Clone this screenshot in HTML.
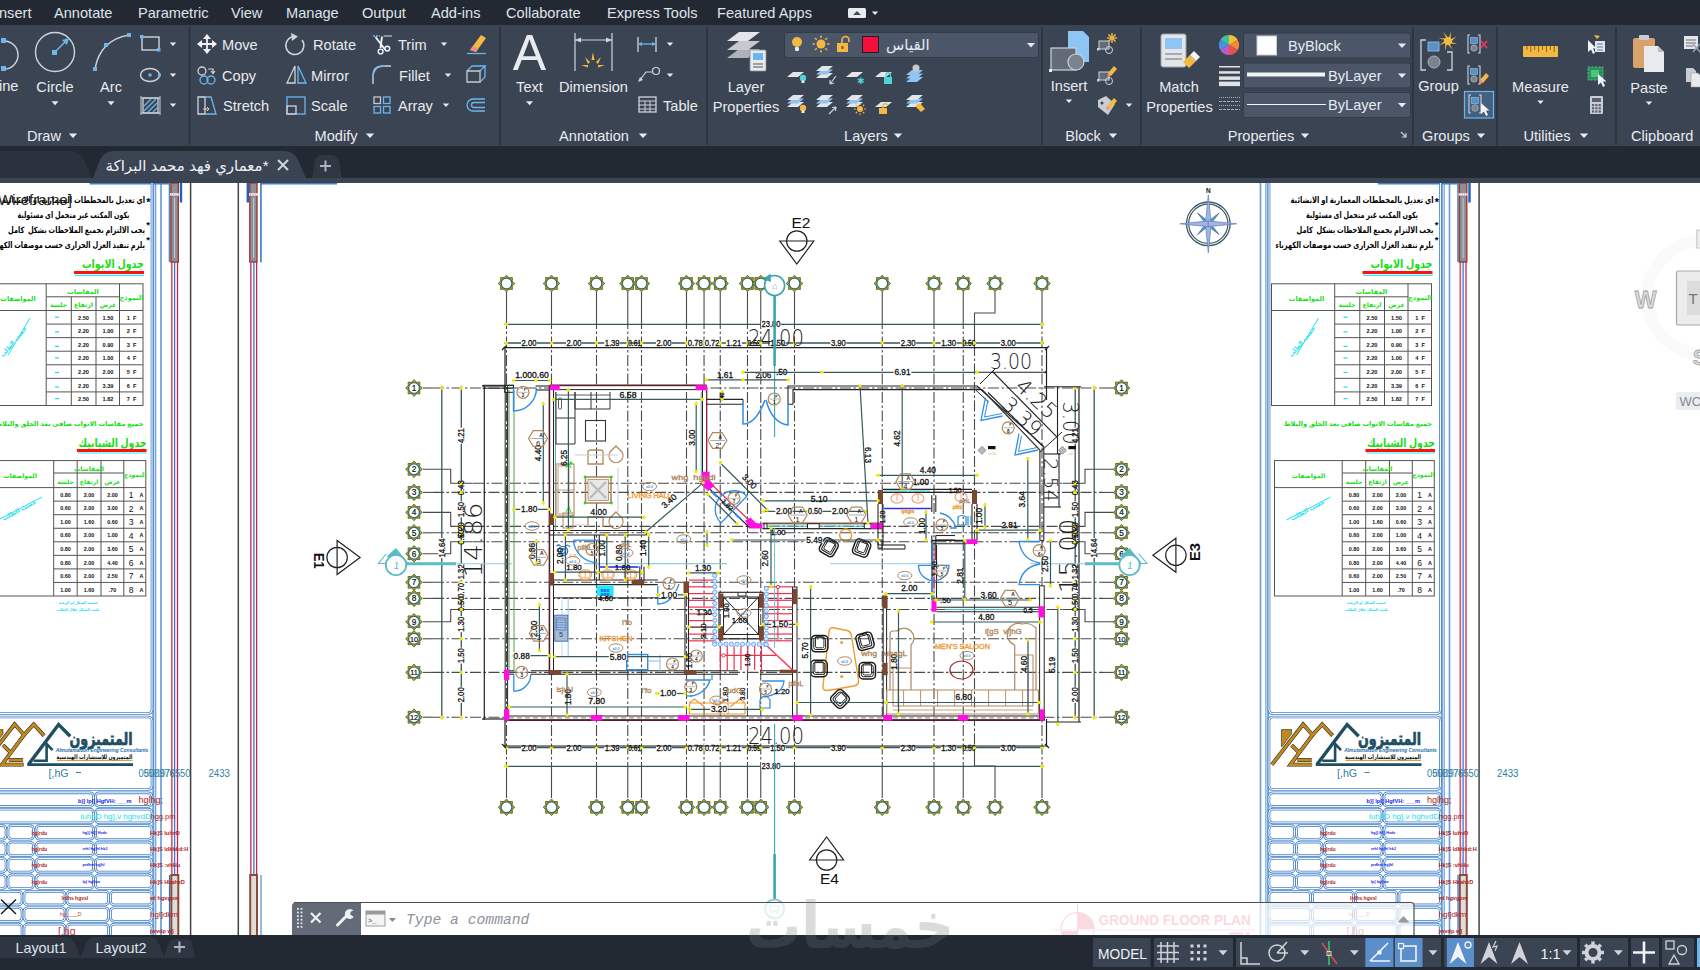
<!DOCTYPE html>
<html lang="en"><head><meta charset="utf-8"><title>AutoCAD</title>
<style>
html,body{margin:0;padding:0;background:#fff;overflow:hidden;width:1700px;height:970px}
svg{display:block;font-family:"Liberation Sans","DejaVu Sans",sans-serif}
text{white-space:pre}
</style></head><body>
<svg width="1700" height="970" viewBox="0 0 1700 970">
<rect x="0" y="0" width="1700" height="970" fill="#ffffff"/>
<clipPath id="cpL"><rect x="0" y="183" width="300" height="752"/></clipPath>
<g clip-path="url(#cpL)">
<g transform="translate(0 0)">
<line x1="153.3" y1="183" x2="153.3" y2="935" stroke="#6a9fd8" stroke-width="2.1" />
<line x1="155.7" y1="183" x2="155.7" y2="935" stroke="#6a9fd8" stroke-width="1.2" />
<line x1="161" y1="183" x2="161" y2="935" stroke="#6a9fd8" stroke-width="1.7" />
<line x1="89.5" y1="183.8" x2="169.5" y2="183.8" stroke="#3f7fc8" stroke-width="1.5" />
<line x1="169.5" y1="183" x2="169.5" y2="262" stroke="#4a88cc" stroke-width="1.6" />
<line x1="171.8" y1="262" x2="171.8" y2="875" stroke="#d05878" stroke-width="1.7" />
<line x1="177.5" y1="262" x2="177.5" y2="875" stroke="#c02850" stroke-width="1.3" />
<line x1="174.6" y1="262" x2="174.6" y2="875" stroke="#3a7ac8" stroke-width="1.3" />
<rect x="170.9" y="183" width="7.4" height="79" fill="#8f9096" stroke="#a03a30" stroke-width="1.4" />
<line x1="174.6" y1="198" x2="174.6" y2="258" stroke="#b8d0e8" stroke-width="1" />
<rect x="170" y="193.3" width="9.2" height="2.2" fill="#ffffff" />
<rect x="171.0" y="193.6" width="1.1" height="1.6" fill="#e8a0a8" />
<rect x="173.2" y="193.6" width="1.1" height="1.6" fill="#e8a0a8" />
<rect x="175.4" y="193.6" width="1.1" height="1.6" fill="#e8a0a8" />
<rect x="177.6" y="193.6" width="1.1" height="1.6" fill="#e8a0a8" />
<line x1="181" y1="183" x2="181" y2="202.5" stroke="#1f5fc0" stroke-width="2.4" />
<rect x="171.3" y="875" width="7" height="61" fill="#e0dcd8" stroke="#8a4a3a" stroke-width="2" />
<line x1="169.5" y1="875" x2="169.5" y2="935" stroke="#2f6fc8" stroke-width="1.2" />
<line x1="190.6" y1="183" x2="190.6" y2="935" stroke="#444" stroke-width="1.5" />
<text x="145" y="203" font-size="8.6" fill="#000" text-anchor="end" font-family="Liberation Sans, DejaVu Sans, sans-serif" font-weight="bold" textLength="143" lengthAdjust="spacingAndGlyphs">اي تعديل بالمخططات المعمارية او الانشائية</text>
<text x="148.3" y="206" font-size="11" fill="#000" text-anchor="middle" font-family="Liberation Sans, DejaVu Sans, sans-serif" font-weight="bold" >*</text>
<text x="129.5" y="217.5" font-size="8.6" fill="#000" text-anchor="end" font-family="Liberation Sans, DejaVu Sans, sans-serif" font-weight="bold" textLength="112" lengthAdjust="spacingAndGlyphs">يكون المكتب غير متحمل اى مسئولية</text>
<text x="145" y="232.5" font-size="8.6" fill="#000" text-anchor="end" font-family="Liberation Sans, DejaVu Sans, sans-serif" font-weight="bold" textLength="137" lengthAdjust="spacingAndGlyphs">يجب الالتزام بجميع الملاحظات بشكل  كامل</text>
<text x="148" y="227.5" font-size="9.5" fill="#000" text-anchor="middle" font-family="Liberation Sans, DejaVu Sans, sans-serif" font-weight="bold" >*</text>
<text x="148" y="243" font-size="9.5" fill="#000" text-anchor="middle" font-family="Liberation Sans, DejaVu Sans, sans-serif" font-weight="bold" >*</text>
<text x="145" y="247.5" font-size="8.6" fill="#000" text-anchor="end" font-family="Liberation Sans, DejaVu Sans, sans-serif" font-weight="bold" textLength="158" lengthAdjust="spacingAndGlyphs">يلزم تنفيذ العزل الحرارى حسب موصفات الكهرباء</text>
<text x="144" y="268" font-size="11.5" fill="#16e016" text-anchor="end" font-family="Liberation Sans, DejaVu Sans, sans-serif" font-weight="bold" textLength="62" lengthAdjust="spacingAndGlyphs">جدول الابواب</text>
<line x1="74" y1="272.5" x2="144" y2="272.5" stroke="#ff1010" stroke-width="3.2" />
<line x1="75" y1="275.3" x2="144" y2="275.3" stroke="#30e8f0" stroke-width="1.2" />
<rect x="-17" y="283.8" width="160" height="121.69" fill="none" stroke="#555" stroke-width="1" />
<line x1="-17" y1="310.5" x2="143" y2="310.5" stroke="#555" stroke-width="1" />
<line x1="46.2" y1="296.8" x2="119.5" y2="296.8" stroke="#555" stroke-width="1" />
<line x1="46.2" y1="283.8" x2="46.2" y2="405.49" stroke="#555" stroke-width="1" />
<line x1="119.5" y1="283.8" x2="119.5" y2="405.49" stroke="#555" stroke-width="1" />
<line x1="71.3" y1="296.8" x2="71.3" y2="405.49" stroke="#555" stroke-width="1" />
<line x1="96" y1="296.8" x2="96" y2="405.49" stroke="#555" stroke-width="1" />
<line x1="46.2" y1="324.07" x2="143" y2="324.07" stroke="#555" stroke-width="1" />
<line x1="46.2" y1="337.64" x2="143" y2="337.64" stroke="#555" stroke-width="1" />
<line x1="46.2" y1="351.21" x2="143" y2="351.21" stroke="#555" stroke-width="1" />
<line x1="46.2" y1="364.78" x2="143" y2="364.78" stroke="#555" stroke-width="1" />
<line x1="46.2" y1="378.35" x2="143" y2="378.35" stroke="#555" stroke-width="1" />
<line x1="46.2" y1="391.92" x2="143" y2="391.92" stroke="#555" stroke-width="1" />
<text x="83" y="293.5" font-size="6.5" fill="#16e016" text-anchor="middle" font-family="Liberation Sans, DejaVu Sans, sans-serif" font-weight="bold" >المقاسات</text>
<text x="131.5" y="299.5" font-size="6.5" fill="#16e016" text-anchor="middle" font-family="Liberation Sans, DejaVu Sans, sans-serif" font-weight="bold" >النموذج</text>
<text x="108" y="307" font-size="6.2" fill="#16e016" text-anchor="middle" font-family="Liberation Sans, DejaVu Sans, sans-serif" font-weight="bold" >عرض</text>
<text x="83.5" y="307" font-size="6.2" fill="#16e016" text-anchor="middle" font-family="Liberation Sans, DejaVu Sans, sans-serif" font-weight="bold" >ارتفاع</text>
<text x="58.5" y="307" font-size="6.2" fill="#16e016" text-anchor="middle" font-family="Liberation Sans, DejaVu Sans, sans-serif" font-weight="bold" >جلسة</text>
<text x="18" y="300.5" font-size="6.5" fill="#16e016" text-anchor="middle" font-family="Liberation Sans, DejaVu Sans, sans-serif" font-weight="bold" >المواصفات</text>
<text x="108" y="319.7" font-size="5.6" fill="#111" text-anchor="middle" font-weight="bold" >1.50</text>
<text x="83.5" y="319.7" font-size="5.6" fill="#111" text-anchor="middle" font-weight="bold" >2.50</text>
<text x="131.5" y="319.7" font-size="5.6" fill="#111" text-anchor="middle" font-weight="bold" >1  F</text>
<line x1="55" y1="317.2" x2="59" y2="317.2" stroke="#20d8f0" stroke-width="1.2" />
<text x="108" y="333.27" font-size="5.6" fill="#111" text-anchor="middle" font-weight="bold" >1.00</text>
<text x="83.5" y="333.27" font-size="5.6" fill="#111" text-anchor="middle" font-weight="bold" >2.20</text>
<text x="131.5" y="333.27" font-size="5.6" fill="#111" text-anchor="middle" font-weight="bold" >2  F</text>
<line x1="55" y1="331.77" x2="59" y2="331.77" stroke="#20d8f0" stroke-width="1.2" />
<text x="108" y="346.84" font-size="5.6" fill="#111" text-anchor="middle" font-weight="bold" >0.90</text>
<text x="83.5" y="346.84" font-size="5.6" fill="#111" text-anchor="middle" font-weight="bold" >2.20</text>
<text x="131.5" y="346.84" font-size="5.6" fill="#111" text-anchor="middle" font-weight="bold" >3  F</text>
<line x1="55" y1="346.34" x2="59" y2="346.34" stroke="#20d8f0" stroke-width="1.2" />
<text x="108" y="360.40999999999997" font-size="5.6" fill="#111" text-anchor="middle" font-weight="bold" >1.00</text>
<text x="83.5" y="360.40999999999997" font-size="5.6" fill="#111" text-anchor="middle" font-weight="bold" >2.20</text>
<text x="131.5" y="360.40999999999997" font-size="5.6" fill="#111" text-anchor="middle" font-weight="bold" >4  F</text>
<line x1="55" y1="357.90999999999997" x2="59" y2="357.90999999999997" stroke="#20d8f0" stroke-width="1.2" />
<text x="108" y="373.97999999999996" font-size="5.6" fill="#111" text-anchor="middle" font-weight="bold" >2.00</text>
<text x="83.5" y="373.97999999999996" font-size="5.6" fill="#111" text-anchor="middle" font-weight="bold" >2.20</text>
<text x="131.5" y="373.97999999999996" font-size="5.6" fill="#111" text-anchor="middle" font-weight="bold" >5  F</text>
<line x1="55" y1="372.47999999999996" x2="59" y2="372.47999999999996" stroke="#20d8f0" stroke-width="1.2" />
<text x="108" y="387.55" font-size="5.6" fill="#111" text-anchor="middle" font-weight="bold" >3.39</text>
<text x="83.5" y="387.55" font-size="5.6" fill="#111" text-anchor="middle" font-weight="bold" >2.20</text>
<text x="131.5" y="387.55" font-size="5.6" fill="#111" text-anchor="middle" font-weight="bold" >6  F</text>
<line x1="55" y1="387.05" x2="59" y2="387.05" stroke="#20d8f0" stroke-width="1.2" />
<text x="108" y="401.12" font-size="5.6" fill="#111" text-anchor="middle" font-weight="bold" >1.82</text>
<text x="83.5" y="401.12" font-size="5.6" fill="#111" text-anchor="middle" font-weight="bold" >2.50</text>
<text x="131.5" y="401.12" font-size="5.6" fill="#111" text-anchor="middle" font-weight="bold" >7  F</text>
<line x1="55" y1="398.62" x2="59" y2="398.62" stroke="#20d8f0" stroke-width="1.2" />
<text x="15" y="343" font-size="6" fill="#20e0f0" text-anchor="middle" font-family="Liberation Sans, DejaVu Sans, sans-serif" font-weight="bold" transform="rotate(-50 15 343)" >حسب الطلب</text>
<line x1="8" y1="355" x2="30" y2="318" stroke="#20e0f0" stroke-width="1" />
<text x="143.5" y="425.5" font-size="6.6" fill="#16e016" text-anchor="end" font-family="Liberation Sans, DejaVu Sans, sans-serif" font-weight="bold" >جميع مقاسات الابواب صافى بعد الحلق والبلاط</text>
<text x="146.5" y="447" font-size="11.5" fill="#16e016" text-anchor="end" font-family="Liberation Sans, DejaVu Sans, sans-serif" font-weight="bold" textLength="68" lengthAdjust="spacingAndGlyphs">جدول الشبابيك</text>
<line x1="77" y1="450.6" x2="146.5" y2="450.6" stroke="#ff1010" stroke-width="3" />
<line x1="78" y1="453" x2="146.5" y2="453" stroke="#30e8f0" stroke-width="1" />
<rect x="-14" y="460.6" width="159.8" height="135.39999999999998" fill="none" stroke="#555" stroke-width="1" />
<line x1="-14" y1="487.6" x2="145.8" y2="487.6" stroke="#555" stroke-width="1" />
<line x1="53.7" y1="473" x2="123.8" y2="473" stroke="#555" stroke-width="1" />
<line x1="53.7" y1="460.6" x2="53.7" y2="596.0" stroke="#555" stroke-width="1" />
<line x1="123.8" y1="460.6" x2="123.8" y2="596.0" stroke="#555" stroke-width="1" />
<line x1="77.2" y1="460.6" x2="77.2" y2="596.0" stroke="#555" stroke-width="1" />
<line x1="101" y1="460.6" x2="101" y2="596.0" stroke="#555" stroke-width="1" />
<line x1="53.7" y1="501.15000000000003" x2="145.8" y2="501.15000000000003" stroke="#555" stroke-width="1" />
<line x1="53.7" y1="514.7" x2="145.8" y2="514.7" stroke="#555" stroke-width="1" />
<line x1="53.7" y1="528.25" x2="145.8" y2="528.25" stroke="#555" stroke-width="1" />
<line x1="53.7" y1="541.8000000000001" x2="145.8" y2="541.8000000000001" stroke="#555" stroke-width="1" />
<line x1="53.7" y1="555.35" x2="145.8" y2="555.35" stroke="#555" stroke-width="1" />
<line x1="53.7" y1="568.9000000000001" x2="145.8" y2="568.9000000000001" stroke="#555" stroke-width="1" />
<line x1="53.7" y1="582.45" x2="145.8" y2="582.45" stroke="#555" stroke-width="1" />
<text x="89" y="470.5" font-size="6.2" fill="#16e016" text-anchor="middle" font-family="Liberation Sans, DejaVu Sans, sans-serif" font-weight="bold" >المقاسات</text>
<text x="135" y="476.5" font-size="6.2" fill="#16e016" text-anchor="middle" font-family="Liberation Sans, DejaVu Sans, sans-serif" font-weight="bold" >النموذج</text>
<text x="112.5" y="484" font-size="6" fill="#16e016" text-anchor="middle" font-family="Liberation Sans, DejaVu Sans, sans-serif" font-weight="bold" >عرض</text>
<text x="89" y="484" font-size="6" fill="#16e016" text-anchor="middle" font-family="Liberation Sans, DejaVu Sans, sans-serif" font-weight="bold" >ارتفاع</text>
<text x="65.5" y="484" font-size="6" fill="#16e016" text-anchor="middle" font-family="Liberation Sans, DejaVu Sans, sans-serif" font-weight="bold" >جلسة</text>
<text x="20" y="477.5" font-size="6.2" fill="#16e016" text-anchor="middle" font-family="Liberation Sans, DejaVu Sans, sans-serif" font-weight="bold" >المواصفات</text>
<text x="112.5" y="496.8" font-size="5.4" fill="#111" text-anchor="middle" font-weight="bold" >2.00</text>
<text x="89" y="496.8" font-size="5.4" fill="#111" text-anchor="middle" font-weight="bold" >2.00</text>
<text x="65.5" y="496.8" font-size="5.4" fill="#111" text-anchor="middle" font-weight="bold" >0.80</text>
<text x="131" y="498.0" font-size="8.5" fill="#111" text-anchor="middle" >1</text>
<text x="141.5" y="496.8" font-size="5.4" fill="#111" text-anchor="middle" font-weight="bold" >A</text>
<text x="112.5" y="510.35" font-size="5.4" fill="#111" text-anchor="middle" font-weight="bold" >3.00</text>
<text x="89" y="510.35" font-size="5.4" fill="#111" text-anchor="middle" font-weight="bold" >2.00</text>
<text x="65.5" y="510.35" font-size="5.4" fill="#111" text-anchor="middle" font-weight="bold" >0.60</text>
<text x="131" y="511.55" font-size="8.5" fill="#111" text-anchor="middle" >2</text>
<text x="141.5" y="510.35" font-size="5.4" fill="#111" text-anchor="middle" font-weight="bold" >A</text>
<text x="112.5" y="523.9000000000001" font-size="5.4" fill="#111" text-anchor="middle" font-weight="bold" >0.60</text>
<text x="89" y="523.9000000000001" font-size="5.4" fill="#111" text-anchor="middle" font-weight="bold" >1.60</text>
<text x="65.5" y="523.9000000000001" font-size="5.4" fill="#111" text-anchor="middle" font-weight="bold" >1.00</text>
<text x="131" y="525.1000000000001" font-size="8.5" fill="#111" text-anchor="middle" >3</text>
<text x="141.5" y="523.9000000000001" font-size="5.4" fill="#111" text-anchor="middle" font-weight="bold" >A</text>
<text x="112.5" y="537.45" font-size="5.4" fill="#111" text-anchor="middle" font-weight="bold" >1.00</text>
<text x="89" y="537.45" font-size="5.4" fill="#111" text-anchor="middle" font-weight="bold" >2.00</text>
<text x="65.5" y="537.45" font-size="5.4" fill="#111" text-anchor="middle" font-weight="bold" >0.60</text>
<text x="131" y="538.6500000000001" font-size="8.5" fill="#111" text-anchor="middle" >4</text>
<text x="141.5" y="537.45" font-size="5.4" fill="#111" text-anchor="middle" font-weight="bold" >A</text>
<text x="112.5" y="551.0000000000001" font-size="5.4" fill="#111" text-anchor="middle" font-weight="bold" >3.60</text>
<text x="89" y="551.0000000000001" font-size="5.4" fill="#111" text-anchor="middle" font-weight="bold" >2.00</text>
<text x="65.5" y="551.0000000000001" font-size="5.4" fill="#111" text-anchor="middle" font-weight="bold" >0.80</text>
<text x="131" y="552.2000000000002" font-size="8.5" fill="#111" text-anchor="middle" >5</text>
<text x="141.5" y="551.0000000000001" font-size="5.4" fill="#111" text-anchor="middle" font-weight="bold" >A</text>
<text x="112.5" y="564.5500000000001" font-size="5.4" fill="#111" text-anchor="middle" font-weight="bold" >4.40</text>
<text x="89" y="564.5500000000001" font-size="5.4" fill="#111" text-anchor="middle" font-weight="bold" >2.00</text>
<text x="65.5" y="564.5500000000001" font-size="5.4" fill="#111" text-anchor="middle" font-weight="bold" >0.80</text>
<text x="131" y="565.7500000000001" font-size="8.5" fill="#111" text-anchor="middle" >6</text>
<text x="141.5" y="564.5500000000001" font-size="5.4" fill="#111" text-anchor="middle" font-weight="bold" >A</text>
<text x="112.5" y="578.1000000000001" font-size="5.4" fill="#111" text-anchor="middle" font-weight="bold" >2.50</text>
<text x="89" y="578.1000000000001" font-size="5.4" fill="#111" text-anchor="middle" font-weight="bold" >2.00</text>
<text x="65.5" y="578.1000000000001" font-size="5.4" fill="#111" text-anchor="middle" font-weight="bold" >0.60</text>
<text x="131" y="579.3000000000002" font-size="8.5" fill="#111" text-anchor="middle" >7</text>
<text x="141.5" y="578.1000000000001" font-size="5.4" fill="#111" text-anchor="middle" font-weight="bold" >A</text>
<text x="112.5" y="591.6500000000001" font-size="5.4" fill="#111" text-anchor="middle" font-weight="bold" >.70</text>
<text x="89" y="591.6500000000001" font-size="5.4" fill="#111" text-anchor="middle" font-weight="bold" >1.60</text>
<text x="65.5" y="591.6500000000001" font-size="5.4" fill="#111" text-anchor="middle" font-weight="bold" >1.00</text>
<text x="131" y="592.8500000000001" font-size="8.5" fill="#111" text-anchor="middle" >8</text>
<text x="141.5" y="591.6500000000001" font-size="5.4" fill="#111" text-anchor="middle" font-weight="bold" >A</text>
<text x="20" y="512" font-size="6" fill="#20e0f0" text-anchor="middle" font-family="Liberation Sans, DejaVu Sans, sans-serif" font-weight="bold" transform="rotate(-28 20 512)" >حسب الطلب</text>
<line x1="-2" y1="520" x2="42" y2="497" stroke="#20e0f0" stroke-width="1" />
<text x="78" y="604" font-size="3.6" fill="#20d8f0" text-anchor="middle" font-family="Liberation Sans, DejaVu Sans, sans-serif" font-weight="bold" >حسب الشكل او الرغبة</text>
<text x="78" y="610.5" font-size="3.6" fill="#20d8f0" text-anchor="middle" font-family="Liberation Sans, DejaVu Sans, sans-serif" font-weight="bold" >يكتب الشكل خلال الطلب</text>
<rect x="-29" y="170" width="181" height="543.5" fill="none" stroke="#4a86cc" stroke-width="2.7" rx="3.5" />
<rect x="-29" y="170" width="181" height="543.5" fill="none" stroke="#ffffff" stroke-width="1.0" rx="3.5" />
<rect x="-29" y="717" width="181" height="72.5" fill="none" stroke="#4a86cc" stroke-width="2.7" rx="3.5" />
<rect x="-29" y="717" width="181" height="72.5" fill="none" stroke="#ffffff" stroke-width="1.0" rx="3.5" />
<path d="M-7.1 729.6 L3.0 729.6 L3.0 733.8 L-6.3 746.6 L-7.1 746.6 Z" fill="#c08a1e" stroke="#222" stroke-width="0.6" stroke-linejoin="miter"/>
<path d="M-16.6 764.6 L14.6 724.3 L24.1 734.9 L33.7 724.3 L44.1 735.6" fill="none" stroke="#222" stroke-width="3.8" stroke-linejoin="miter"/>
<path d="M24.1 734.9 L1.9 764.6 L23.6 764.6" fill="none" stroke="#222" stroke-width="3.8" stroke-linejoin="miter"/>
<path d="M3.0 745.2 L11.7 753.6" fill="none" stroke="#222" stroke-width="3.8" stroke-linejoin="miter"/>
<path d="M8.8 760.0 L23.1 760.0" fill="none" stroke="#222" stroke-width="3.8" stroke-linejoin="miter"/>
<path d="M-16.6 764.6 L14.6 724.3 L24.1 734.9 L33.7 724.3 L44.1 735.6" fill="none" stroke="#c08a1e" stroke-width="2.7" stroke-linejoin="miter"/>
<path d="M24.1 734.9 L1.9 764.6 L23.6 764.6" fill="none" stroke="#c08a1e" stroke-width="2.7" stroke-linejoin="miter"/>
<path d="M3.0 745.2 L11.7 753.6" fill="none" stroke="#c08a1e" stroke-width="2.7" stroke-linejoin="miter"/>
<path d="M8.8 760.0 L23.1 760.0" fill="none" stroke="#c08a1e" stroke-width="2.7" stroke-linejoin="miter"/>
<path d="M28.4 764.6 L58.6 724.5 L70.2 736.2" fill="none" stroke="#1f4e62" stroke-width="3.4" stroke-linejoin="miter"/>
<path d="M27.3 764.6 L133.0 764.6" fill="none" stroke="#1f4e62" stroke-width="2.8" stroke-linejoin="miter"/>
<path d="M33.7 760.7 L46.6 760.7 L46.6 743.8 L52.5 750.2" fill="none" stroke="#1f4e62" stroke-width="2.6" stroke-linejoin="miter"/>
<text x="132.5" y="745" font-size="17.5" fill="#1f4e62" text-anchor="end" font-family="Liberation Sans, DejaVu Sans, sans-serif" font-weight="bold" stroke="#1f4e62" stroke-width="0.7" textLength="63" lengthAdjust="spacingAndGlyphs">المتميزون</text>
<text x="102" y="752" font-size="4.9" fill="#1b6fa8" text-anchor="middle" font-weight="bold" font-style="italic" transform="rotate( 102 752)" >Almutamaizon Engineering Consultants</text>
<text x="132.5" y="759" font-size="6.3" fill="#111" text-anchor="end" font-family="Liberation Sans, DejaVu Sans, sans-serif" font-weight="bold" textLength="76" lengthAdjust="spacingAndGlyphs">المتميزون للإستشارات الهندسية</text>
<line x1="57" y1="760.3" x2="132.5" y2="760.3" stroke="#c08a1e" stroke-width="1" />
<text x="48.5" y="777" font-size="11.5" fill="#2f7fa0" textLength="20" lengthAdjust="spacingAndGlyphs">[,hG</text>
<line x1="76" y1="772.5" x2="81" y2="772.5" stroke="#2f7fa0" stroke-width="1" />
<text x="138.5" y="777" font-size="11.5" fill="#2f7fa0" textLength="52" lengthAdjust="spacingAndGlyphs">0508976550</text>
<text x="144" y="777" font-size="11.5" fill="#2f7fa0" textLength="30" lengthAdjust="spacingAndGlyphs" opacity="0.7">0561976</text>
<text x="208.5" y="777" font-size="11.5" fill="#2f7fa0" textLength="21.5" lengthAdjust="spacingAndGlyphs">2433</text>
<rect x="-29" y="792.8" width="122.5" height="13.6" fill="none" stroke="#4a86cc" stroke-width="2.7" rx="3.5" />
<rect x="-29" y="792.8" width="122.5" height="13.6" fill="none" stroke="#ffffff" stroke-width="1.0" rx="3.5" />
<rect x="95.5" y="792.8" width="56.5" height="13.6" fill="none" stroke="#4a86cc" stroke-width="2.7" rx="3.5" />
<rect x="95.5" y="792.8" width="56.5" height="13.6" fill="none" stroke="#ffffff" stroke-width="1.0" rx="3.5" />
<rect x="-29" y="809.2199999999999" width="122.5" height="13.6" fill="none" stroke="#4a86cc" stroke-width="2.7" rx="3.5" />
<rect x="-29" y="809.2199999999999" width="122.5" height="13.6" fill="none" stroke="#ffffff" stroke-width="1.0" rx="3.5" />
<rect x="95.5" y="809.2199999999999" width="56.5" height="13.6" fill="none" stroke="#4a86cc" stroke-width="2.7" rx="3.5" />
<rect x="95.5" y="809.2199999999999" width="56.5" height="13.6" fill="none" stroke="#ffffff" stroke-width="1.0" rx="3.5" />
<rect x="-29" y="825.64" width="35" height="13.6" fill="none" stroke="#4a86cc" stroke-width="2.7" rx="3.5" />
<rect x="-29" y="825.64" width="35" height="13.6" fill="none" stroke="#ffffff" stroke-width="1.0" rx="3.5" />
<rect x="8" y="825.64" width="25.5" height="13.6" fill="none" stroke="#4a86cc" stroke-width="2.7" rx="3.5" />
<rect x="8" y="825.64" width="25.5" height="13.6" fill="none" stroke="#ffffff" stroke-width="1.0" rx="3.5" />
<rect x="36" y="825.64" width="57.5" height="13.6" fill="none" stroke="#4a86cc" stroke-width="2.7" rx="3.5" />
<rect x="36" y="825.64" width="57.5" height="13.6" fill="none" stroke="#ffffff" stroke-width="1.0" rx="3.5" />
<rect x="95.5" y="825.64" width="56.5" height="13.6" fill="none" stroke="#4a86cc" stroke-width="2.7" rx="3.5" />
<rect x="95.5" y="825.64" width="56.5" height="13.6" fill="none" stroke="#ffffff" stroke-width="1.0" rx="3.5" />
<rect x="-29" y="842.06" width="35" height="13.6" fill="none" stroke="#4a86cc" stroke-width="2.7" rx="3.5" />
<rect x="-29" y="842.06" width="35" height="13.6" fill="none" stroke="#ffffff" stroke-width="1.0" rx="3.5" />
<rect x="8" y="842.06" width="25.5" height="13.6" fill="none" stroke="#4a86cc" stroke-width="2.7" rx="3.5" />
<rect x="8" y="842.06" width="25.5" height="13.6" fill="none" stroke="#ffffff" stroke-width="1.0" rx="3.5" />
<rect x="36" y="842.06" width="57.5" height="13.6" fill="none" stroke="#4a86cc" stroke-width="2.7" rx="3.5" />
<rect x="36" y="842.06" width="57.5" height="13.6" fill="none" stroke="#ffffff" stroke-width="1.0" rx="3.5" />
<rect x="95.5" y="842.06" width="56.5" height="13.6" fill="none" stroke="#4a86cc" stroke-width="2.7" rx="3.5" />
<rect x="95.5" y="842.06" width="56.5" height="13.6" fill="none" stroke="#ffffff" stroke-width="1.0" rx="3.5" />
<rect x="-29" y="858.48" width="35" height="13.6" fill="none" stroke="#4a86cc" stroke-width="2.7" rx="3.5" />
<rect x="-29" y="858.48" width="35" height="13.6" fill="none" stroke="#ffffff" stroke-width="1.0" rx="3.5" />
<rect x="8" y="858.48" width="25.5" height="13.6" fill="none" stroke="#4a86cc" stroke-width="2.7" rx="3.5" />
<rect x="8" y="858.48" width="25.5" height="13.6" fill="none" stroke="#ffffff" stroke-width="1.0" rx="3.5" />
<rect x="36" y="858.48" width="57.5" height="13.6" fill="none" stroke="#4a86cc" stroke-width="2.7" rx="3.5" />
<rect x="36" y="858.48" width="57.5" height="13.6" fill="none" stroke="#ffffff" stroke-width="1.0" rx="3.5" />
<rect x="95.5" y="858.48" width="56.5" height="13.6" fill="none" stroke="#4a86cc" stroke-width="2.7" rx="3.5" />
<rect x="95.5" y="858.48" width="56.5" height="13.6" fill="none" stroke="#ffffff" stroke-width="1.0" rx="3.5" />
<rect x="-29" y="874.9" width="35" height="13.6" fill="none" stroke="#4a86cc" stroke-width="2.7" rx="3.5" />
<rect x="-29" y="874.9" width="35" height="13.6" fill="none" stroke="#ffffff" stroke-width="1.0" rx="3.5" />
<rect x="8" y="874.9" width="25.5" height="13.6" fill="none" stroke="#4a86cc" stroke-width="2.7" rx="3.5" />
<rect x="8" y="874.9" width="25.5" height="13.6" fill="none" stroke="#ffffff" stroke-width="1.0" rx="3.5" />
<rect x="36" y="874.9" width="57.5" height="13.6" fill="none" stroke="#4a86cc" stroke-width="2.7" rx="3.5" />
<rect x="36" y="874.9" width="57.5" height="13.6" fill="none" stroke="#ffffff" stroke-width="1.0" rx="3.5" />
<rect x="95.5" y="874.9" width="56.5" height="13.6" fill="none" stroke="#4a86cc" stroke-width="2.7" rx="3.5" />
<rect x="95.5" y="874.9" width="56.5" height="13.6" fill="none" stroke="#ffffff" stroke-width="1.0" rx="3.5" />
<rect x="-29" y="891.3199999999999" width="51" height="13.6" fill="none" stroke="#4a86cc" stroke-width="2.7" rx="3.5" />
<rect x="-29" y="891.3199999999999" width="51" height="13.6" fill="none" stroke="#ffffff" stroke-width="1.0" rx="3.5" />
<rect x="24" y="891.3199999999999" width="41" height="13.6" fill="none" stroke="#4a86cc" stroke-width="2.7" rx="3.5" />
<rect x="24" y="891.3199999999999" width="41" height="13.6" fill="none" stroke="#ffffff" stroke-width="1.0" rx="3.5" />
<rect x="67" y="891.3199999999999" width="41.5" height="13.6" fill="none" stroke="#4a86cc" stroke-width="2.7" rx="3.5" />
<rect x="67" y="891.3199999999999" width="41.5" height="13.6" fill="none" stroke="#ffffff" stroke-width="1.0" rx="3.5" />
<rect x="110.5" y="891.3199999999999" width="41.5" height="13.6" fill="none" stroke="#4a86cc" stroke-width="2.7" rx="3.5" />
<rect x="110.5" y="891.3199999999999" width="41.5" height="13.6" fill="none" stroke="#ffffff" stroke-width="1.0" rx="3.5" />
<rect x="-29" y="907.74" width="51" height="13.6" fill="none" stroke="#4a86cc" stroke-width="2.7" rx="3.5" />
<rect x="-29" y="907.74" width="51" height="13.6" fill="none" stroke="#ffffff" stroke-width="1.0" rx="3.5" />
<rect x="24" y="907.74" width="41" height="13.6" fill="none" stroke="#4a86cc" stroke-width="2.7" rx="3.5" />
<rect x="24" y="907.74" width="41" height="13.6" fill="none" stroke="#ffffff" stroke-width="1.0" rx="3.5" />
<rect x="67" y="907.74" width="41.5" height="13.6" fill="none" stroke="#4a86cc" stroke-width="2.7" rx="3.5" />
<rect x="67" y="907.74" width="41.5" height="13.6" fill="none" stroke="#ffffff" stroke-width="1.0" rx="3.5" />
<rect x="110.5" y="907.74" width="41.5" height="13.6" fill="none" stroke="#4a86cc" stroke-width="2.7" rx="3.5" />
<rect x="110.5" y="907.74" width="41.5" height="13.6" fill="none" stroke="#ffffff" stroke-width="1.0" rx="3.5" />
<rect x="-29" y="924.16" width="51" height="13.6" fill="none" stroke="#4a86cc" stroke-width="2.7" rx="3.5" />
<rect x="-29" y="924.16" width="51" height="13.6" fill="none" stroke="#ffffff" stroke-width="1.0" rx="3.5" />
<rect x="24" y="924.16" width="41" height="13.6" fill="none" stroke="#4a86cc" stroke-width="2.7" rx="3.5" />
<rect x="24" y="924.16" width="41" height="13.6" fill="none" stroke="#ffffff" stroke-width="1.0" rx="3.5" />
<rect x="67" y="924.16" width="41.5" height="13.6" fill="none" stroke="#4a86cc" stroke-width="2.7" rx="3.5" />
<rect x="67" y="924.16" width="41.5" height="13.6" fill="none" stroke="#ffffff" stroke-width="1.0" rx="3.5" />
<rect x="110.5" y="924.16" width="41.5" height="13.6" fill="none" stroke="#4a86cc" stroke-width="2.7" rx="3.5" />
<rect x="110.5" y="924.16" width="41.5" height="13.6" fill="none" stroke="#ffffff" stroke-width="1.0" rx="3.5" />
<text x="78" y="803" font-size="5.6" fill="#1818e8" text-anchor="None" font-weight="bold" >b)] lpl] HgfVH: ___m</text>
<text x="138.5" y="803" font-size="9" fill="#b02020" >hglhg;</text>
<text x="80.5" y="818.5" font-size="8" fill="#20e0f0" >luhhD hg],v hghvdD</text>
<text x="150.5" y="818.5" font-size="7.5" fill="#b02020" >hgg.pm</text>
<text x="31.5" y="834.64" font-size="5" fill="#b02020" text-anchor="None" font-weight="bold" >hg|rdu</text>
<text x="82.5" y="833.64" font-size="3.8" fill="#1818e8" text-anchor="None" font-weight="bold" >hg)] hl[] Hvdv</text>
<text x="150" y="834.64" font-size="5.6" fill="#b02020" text-anchor="None" font-weight="bold" >Hk]S luhvD</text>
<text x="31.5" y="851.06" font-size="5" fill="#b02020" text-anchor="None" font-weight="bold" >hg|rdu</text>
<text x="82.5" y="850.06" font-size="3.8" fill="#1818e8" text-anchor="None" font-weight="bold" >vrhl hg)hl hkJ</text>
<text x="150" y="851.06" font-size="5.6" fill="#b02020" text-anchor="None" font-weight="bold" >Hk]S ldkhkd:H</text>
<text x="31.5" y="867.48" font-size="5" fill="#b02020" text-anchor="None" font-weight="bold" >hg|rdu</text>
<text x="82.5" y="866.48" font-size="3.8" fill="#1818e8" text-anchor="None" font-weight="bold" >prdhm hg)hl</text>
<text x="150" y="867.48" font-size="5.6" fill="#b02020" text-anchor="None" font-weight="bold" >Hk]S :vhHu</text>
<text x="31.5" y="883.9" font-size="5" fill="#b02020" text-anchor="None" font-weight="bold" >hg|rdu</text>
<text x="82.5" y="882.9" font-size="3.8" fill="#1818e8" text-anchor="None" font-weight="bold" >lp] hgl)wv</text>
<text x="150" y="883.9" font-size="5.6" fill="#b02020" text-anchor="None" font-weight="bold" >Hk]S HkahzD</text>
<text x="61.5" y="899.8199999999999" font-size="5" fill="#b02020" text-anchor="None" font-weight="bold" >lrdhs hgvsl</text>
<text x="150" y="899.8199999999999" font-size="5.6" fill="#b02020" text-anchor="None" font-weight="bold" >wl hgvgpm</text>
<text x="60" y="916.24" font-size="5" fill="#c04040" >hgj____D</text>
<text x="150" y="917.24" font-size="8" fill="#b02020" >hgl]dkm</text>
<text x="58" y="934.66" font-size="10.5" fill="#d03030" >[,hg</text>
<text x="150" y="932.66" font-size="5.6" fill="#b02020" text-anchor="None" font-weight="bold" >jwvdp w]</text>
</g>
<path d="M1 899.5 L16 914 M16 899.5 L1 914" fill="none" stroke="#111" stroke-width="1.3" />
</g>
<g transform="translate(1288.5 0)">
<line x1="153.3" y1="183" x2="153.3" y2="935" stroke="#6a9fd8" stroke-width="2.1" />
<line x1="155.7" y1="183" x2="155.7" y2="935" stroke="#6a9fd8" stroke-width="1.2" />
<line x1="161" y1="183" x2="161" y2="935" stroke="#6a9fd8" stroke-width="1.7" />
<line x1="89.5" y1="183.8" x2="169.5" y2="183.8" stroke="#3f7fc8" stroke-width="1.5" />
<line x1="169.5" y1="183" x2="169.5" y2="262" stroke="#4a88cc" stroke-width="1.6" />
<line x1="171.8" y1="262" x2="171.8" y2="875" stroke="#d05878" stroke-width="1.7" />
<line x1="177.5" y1="262" x2="177.5" y2="875" stroke="#c02850" stroke-width="1.3" />
<line x1="174.6" y1="262" x2="174.6" y2="875" stroke="#3a7ac8" stroke-width="1.3" />
<rect x="170.9" y="183" width="7.4" height="79" fill="#8f9096" stroke="#a03a30" stroke-width="1.4" />
<line x1="174.6" y1="198" x2="174.6" y2="258" stroke="#b8d0e8" stroke-width="1" />
<rect x="170" y="193.3" width="9.2" height="2.2" fill="#ffffff" />
<rect x="171.0" y="193.6" width="1.1" height="1.6" fill="#e8a0a8" />
<rect x="173.2" y="193.6" width="1.1" height="1.6" fill="#e8a0a8" />
<rect x="175.4" y="193.6" width="1.1" height="1.6" fill="#e8a0a8" />
<rect x="177.6" y="193.6" width="1.1" height="1.6" fill="#e8a0a8" />
<line x1="181" y1="183" x2="181" y2="202.5" stroke="#1f5fc0" stroke-width="2.4" />
<rect x="171.3" y="875" width="7" height="61" fill="#e0dcd8" stroke="#8a4a3a" stroke-width="2" />
<line x1="169.5" y1="875" x2="169.5" y2="935" stroke="#2f6fc8" stroke-width="1.2" />
<line x1="190.6" y1="183" x2="190.6" y2="935" stroke="#444" stroke-width="1.5" />
<line x1="-28" y1="183" x2="-28" y2="935" stroke="#6a9fd8" stroke-width="1.7" />
<line x1="-22.6" y1="183" x2="-22.6" y2="935" stroke="#6a9fd8" stroke-width="1.2" />
<line x1="-20.3" y1="183" x2="-20.3" y2="935" stroke="#6a9fd8" stroke-width="2.1" />
<text x="145" y="203" font-size="8.6" fill="#000" text-anchor="end" font-family="Liberation Sans, DejaVu Sans, sans-serif" font-weight="bold" textLength="143" lengthAdjust="spacingAndGlyphs">اي تعديل بالمخططات المعمارية او الانشائية</text>
<text x="148.3" y="206" font-size="11" fill="#000" text-anchor="middle" font-family="Liberation Sans, DejaVu Sans, sans-serif" font-weight="bold" >*</text>
<text x="129.5" y="217.5" font-size="8.6" fill="#000" text-anchor="end" font-family="Liberation Sans, DejaVu Sans, sans-serif" font-weight="bold" textLength="112" lengthAdjust="spacingAndGlyphs">يكون المكتب غير متحمل اى مسئولية</text>
<text x="145" y="232.5" font-size="8.6" fill="#000" text-anchor="end" font-family="Liberation Sans, DejaVu Sans, sans-serif" font-weight="bold" textLength="137" lengthAdjust="spacingAndGlyphs">يجب الالتزام بجميع الملاحظات بشكل  كامل</text>
<text x="148" y="227.5" font-size="9.5" fill="#000" text-anchor="middle" font-family="Liberation Sans, DejaVu Sans, sans-serif" font-weight="bold" >*</text>
<text x="148" y="243" font-size="9.5" fill="#000" text-anchor="middle" font-family="Liberation Sans, DejaVu Sans, sans-serif" font-weight="bold" >*</text>
<text x="145" y="247.5" font-size="8.6" fill="#000" text-anchor="end" font-family="Liberation Sans, DejaVu Sans, sans-serif" font-weight="bold" textLength="158" lengthAdjust="spacingAndGlyphs">يلزم تنفيذ العزل الحرارى حسب موصفات الكهرباء</text>
<text x="144" y="268" font-size="11.5" fill="#16e016" text-anchor="end" font-family="Liberation Sans, DejaVu Sans, sans-serif" font-weight="bold" textLength="62" lengthAdjust="spacingAndGlyphs">جدول الابواب</text>
<line x1="74" y1="272.5" x2="144" y2="272.5" stroke="#ff1010" stroke-width="3.2" />
<line x1="75" y1="275.3" x2="144" y2="275.3" stroke="#30e8f0" stroke-width="1.2" />
<rect x="-17" y="283.8" width="160" height="121.69" fill="none" stroke="#555" stroke-width="1" />
<line x1="-17" y1="310.5" x2="143" y2="310.5" stroke="#555" stroke-width="1" />
<line x1="46.2" y1="296.8" x2="119.5" y2="296.8" stroke="#555" stroke-width="1" />
<line x1="46.2" y1="283.8" x2="46.2" y2="405.49" stroke="#555" stroke-width="1" />
<line x1="119.5" y1="283.8" x2="119.5" y2="405.49" stroke="#555" stroke-width="1" />
<line x1="71.3" y1="296.8" x2="71.3" y2="405.49" stroke="#555" stroke-width="1" />
<line x1="96" y1="296.8" x2="96" y2="405.49" stroke="#555" stroke-width="1" />
<line x1="46.2" y1="324.07" x2="143" y2="324.07" stroke="#555" stroke-width="1" />
<line x1="46.2" y1="337.64" x2="143" y2="337.64" stroke="#555" stroke-width="1" />
<line x1="46.2" y1="351.21" x2="143" y2="351.21" stroke="#555" stroke-width="1" />
<line x1="46.2" y1="364.78" x2="143" y2="364.78" stroke="#555" stroke-width="1" />
<line x1="46.2" y1="378.35" x2="143" y2="378.35" stroke="#555" stroke-width="1" />
<line x1="46.2" y1="391.92" x2="143" y2="391.92" stroke="#555" stroke-width="1" />
<text x="83" y="293.5" font-size="6.5" fill="#16e016" text-anchor="middle" font-family="Liberation Sans, DejaVu Sans, sans-serif" font-weight="bold" >المقاسات</text>
<text x="131.5" y="299.5" font-size="6.5" fill="#16e016" text-anchor="middle" font-family="Liberation Sans, DejaVu Sans, sans-serif" font-weight="bold" >النموذج</text>
<text x="108" y="307" font-size="6.2" fill="#16e016" text-anchor="middle" font-family="Liberation Sans, DejaVu Sans, sans-serif" font-weight="bold" >عرض</text>
<text x="83.5" y="307" font-size="6.2" fill="#16e016" text-anchor="middle" font-family="Liberation Sans, DejaVu Sans, sans-serif" font-weight="bold" >ارتفاع</text>
<text x="58.5" y="307" font-size="6.2" fill="#16e016" text-anchor="middle" font-family="Liberation Sans, DejaVu Sans, sans-serif" font-weight="bold" >جلسة</text>
<text x="18" y="300.5" font-size="6.5" fill="#16e016" text-anchor="middle" font-family="Liberation Sans, DejaVu Sans, sans-serif" font-weight="bold" >المواصفات</text>
<text x="108" y="319.7" font-size="5.6" fill="#111" text-anchor="middle" font-weight="bold" >1.50</text>
<text x="83.5" y="319.7" font-size="5.6" fill="#111" text-anchor="middle" font-weight="bold" >2.50</text>
<text x="131.5" y="319.7" font-size="5.6" fill="#111" text-anchor="middle" font-weight="bold" >1  F</text>
<line x1="55" y1="317.2" x2="59" y2="317.2" stroke="#20d8f0" stroke-width="1.2" />
<text x="108" y="333.27" font-size="5.6" fill="#111" text-anchor="middle" font-weight="bold" >1.00</text>
<text x="83.5" y="333.27" font-size="5.6" fill="#111" text-anchor="middle" font-weight="bold" >2.20</text>
<text x="131.5" y="333.27" font-size="5.6" fill="#111" text-anchor="middle" font-weight="bold" >2  F</text>
<line x1="55" y1="331.77" x2="59" y2="331.77" stroke="#20d8f0" stroke-width="1.2" />
<text x="108" y="346.84" font-size="5.6" fill="#111" text-anchor="middle" font-weight="bold" >0.90</text>
<text x="83.5" y="346.84" font-size="5.6" fill="#111" text-anchor="middle" font-weight="bold" >2.20</text>
<text x="131.5" y="346.84" font-size="5.6" fill="#111" text-anchor="middle" font-weight="bold" >3  F</text>
<line x1="55" y1="346.34" x2="59" y2="346.34" stroke="#20d8f0" stroke-width="1.2" />
<text x="108" y="360.40999999999997" font-size="5.6" fill="#111" text-anchor="middle" font-weight="bold" >1.00</text>
<text x="83.5" y="360.40999999999997" font-size="5.6" fill="#111" text-anchor="middle" font-weight="bold" >2.20</text>
<text x="131.5" y="360.40999999999997" font-size="5.6" fill="#111" text-anchor="middle" font-weight="bold" >4  F</text>
<line x1="55" y1="357.90999999999997" x2="59" y2="357.90999999999997" stroke="#20d8f0" stroke-width="1.2" />
<text x="108" y="373.97999999999996" font-size="5.6" fill="#111" text-anchor="middle" font-weight="bold" >2.00</text>
<text x="83.5" y="373.97999999999996" font-size="5.6" fill="#111" text-anchor="middle" font-weight="bold" >2.20</text>
<text x="131.5" y="373.97999999999996" font-size="5.6" fill="#111" text-anchor="middle" font-weight="bold" >5  F</text>
<line x1="55" y1="372.47999999999996" x2="59" y2="372.47999999999996" stroke="#20d8f0" stroke-width="1.2" />
<text x="108" y="387.55" font-size="5.6" fill="#111" text-anchor="middle" font-weight="bold" >3.39</text>
<text x="83.5" y="387.55" font-size="5.6" fill="#111" text-anchor="middle" font-weight="bold" >2.20</text>
<text x="131.5" y="387.55" font-size="5.6" fill="#111" text-anchor="middle" font-weight="bold" >6  F</text>
<line x1="55" y1="387.05" x2="59" y2="387.05" stroke="#20d8f0" stroke-width="1.2" />
<text x="108" y="401.12" font-size="5.6" fill="#111" text-anchor="middle" font-weight="bold" >1.82</text>
<text x="83.5" y="401.12" font-size="5.6" fill="#111" text-anchor="middle" font-weight="bold" >2.50</text>
<text x="131.5" y="401.12" font-size="5.6" fill="#111" text-anchor="middle" font-weight="bold" >7  F</text>
<line x1="55" y1="398.62" x2="59" y2="398.62" stroke="#20d8f0" stroke-width="1.2" />
<text x="15" y="343" font-size="6" fill="#20e0f0" text-anchor="middle" font-family="Liberation Sans, DejaVu Sans, sans-serif" font-weight="bold" transform="rotate(-50 15 343)" >حسب الطلب</text>
<line x1="8" y1="355" x2="30" y2="318" stroke="#20e0f0" stroke-width="1" />
<text x="143.5" y="425.5" font-size="6.6" fill="#16e016" text-anchor="end" font-family="Liberation Sans, DejaVu Sans, sans-serif" font-weight="bold" >جميع مقاسات الابواب صافى بعد الحلق والبلاط</text>
<text x="146.5" y="447" font-size="11.5" fill="#16e016" text-anchor="end" font-family="Liberation Sans, DejaVu Sans, sans-serif" font-weight="bold" textLength="68" lengthAdjust="spacingAndGlyphs">جدول الشبابيك</text>
<line x1="77" y1="450.6" x2="146.5" y2="450.6" stroke="#ff1010" stroke-width="3" />
<line x1="78" y1="453" x2="146.5" y2="453" stroke="#30e8f0" stroke-width="1" />
<rect x="-14" y="460.6" width="159.8" height="135.39999999999998" fill="none" stroke="#555" stroke-width="1" />
<line x1="-14" y1="487.6" x2="145.8" y2="487.6" stroke="#555" stroke-width="1" />
<line x1="53.7" y1="473" x2="123.8" y2="473" stroke="#555" stroke-width="1" />
<line x1="53.7" y1="460.6" x2="53.7" y2="596.0" stroke="#555" stroke-width="1" />
<line x1="123.8" y1="460.6" x2="123.8" y2="596.0" stroke="#555" stroke-width="1" />
<line x1="77.2" y1="460.6" x2="77.2" y2="596.0" stroke="#555" stroke-width="1" />
<line x1="101" y1="460.6" x2="101" y2="596.0" stroke="#555" stroke-width="1" />
<line x1="53.7" y1="501.15000000000003" x2="145.8" y2="501.15000000000003" stroke="#555" stroke-width="1" />
<line x1="53.7" y1="514.7" x2="145.8" y2="514.7" stroke="#555" stroke-width="1" />
<line x1="53.7" y1="528.25" x2="145.8" y2="528.25" stroke="#555" stroke-width="1" />
<line x1="53.7" y1="541.8000000000001" x2="145.8" y2="541.8000000000001" stroke="#555" stroke-width="1" />
<line x1="53.7" y1="555.35" x2="145.8" y2="555.35" stroke="#555" stroke-width="1" />
<line x1="53.7" y1="568.9000000000001" x2="145.8" y2="568.9000000000001" stroke="#555" stroke-width="1" />
<line x1="53.7" y1="582.45" x2="145.8" y2="582.45" stroke="#555" stroke-width="1" />
<text x="89" y="470.5" font-size="6.2" fill="#16e016" text-anchor="middle" font-family="Liberation Sans, DejaVu Sans, sans-serif" font-weight="bold" >المقاسات</text>
<text x="135" y="476.5" font-size="6.2" fill="#16e016" text-anchor="middle" font-family="Liberation Sans, DejaVu Sans, sans-serif" font-weight="bold" >النموذج</text>
<text x="112.5" y="484" font-size="6" fill="#16e016" text-anchor="middle" font-family="Liberation Sans, DejaVu Sans, sans-serif" font-weight="bold" >عرض</text>
<text x="89" y="484" font-size="6" fill="#16e016" text-anchor="middle" font-family="Liberation Sans, DejaVu Sans, sans-serif" font-weight="bold" >ارتفاع</text>
<text x="65.5" y="484" font-size="6" fill="#16e016" text-anchor="middle" font-family="Liberation Sans, DejaVu Sans, sans-serif" font-weight="bold" >جلسة</text>
<text x="20" y="477.5" font-size="6.2" fill="#16e016" text-anchor="middle" font-family="Liberation Sans, DejaVu Sans, sans-serif" font-weight="bold" >المواصفات</text>
<text x="112.5" y="496.8" font-size="5.4" fill="#111" text-anchor="middle" font-weight="bold" >2.00</text>
<text x="89" y="496.8" font-size="5.4" fill="#111" text-anchor="middle" font-weight="bold" >2.00</text>
<text x="65.5" y="496.8" font-size="5.4" fill="#111" text-anchor="middle" font-weight="bold" >0.80</text>
<text x="131" y="498.0" font-size="8.5" fill="#111" text-anchor="middle" >1</text>
<text x="141.5" y="496.8" font-size="5.4" fill="#111" text-anchor="middle" font-weight="bold" >A</text>
<text x="112.5" y="510.35" font-size="5.4" fill="#111" text-anchor="middle" font-weight="bold" >3.00</text>
<text x="89" y="510.35" font-size="5.4" fill="#111" text-anchor="middle" font-weight="bold" >2.00</text>
<text x="65.5" y="510.35" font-size="5.4" fill="#111" text-anchor="middle" font-weight="bold" >0.60</text>
<text x="131" y="511.55" font-size="8.5" fill="#111" text-anchor="middle" >2</text>
<text x="141.5" y="510.35" font-size="5.4" fill="#111" text-anchor="middle" font-weight="bold" >A</text>
<text x="112.5" y="523.9000000000001" font-size="5.4" fill="#111" text-anchor="middle" font-weight="bold" >0.60</text>
<text x="89" y="523.9000000000001" font-size="5.4" fill="#111" text-anchor="middle" font-weight="bold" >1.60</text>
<text x="65.5" y="523.9000000000001" font-size="5.4" fill="#111" text-anchor="middle" font-weight="bold" >1.00</text>
<text x="131" y="525.1000000000001" font-size="8.5" fill="#111" text-anchor="middle" >3</text>
<text x="141.5" y="523.9000000000001" font-size="5.4" fill="#111" text-anchor="middle" font-weight="bold" >A</text>
<text x="112.5" y="537.45" font-size="5.4" fill="#111" text-anchor="middle" font-weight="bold" >1.00</text>
<text x="89" y="537.45" font-size="5.4" fill="#111" text-anchor="middle" font-weight="bold" >2.00</text>
<text x="65.5" y="537.45" font-size="5.4" fill="#111" text-anchor="middle" font-weight="bold" >0.60</text>
<text x="131" y="538.6500000000001" font-size="8.5" fill="#111" text-anchor="middle" >4</text>
<text x="141.5" y="537.45" font-size="5.4" fill="#111" text-anchor="middle" font-weight="bold" >A</text>
<text x="112.5" y="551.0000000000001" font-size="5.4" fill="#111" text-anchor="middle" font-weight="bold" >3.60</text>
<text x="89" y="551.0000000000001" font-size="5.4" fill="#111" text-anchor="middle" font-weight="bold" >2.00</text>
<text x="65.5" y="551.0000000000001" font-size="5.4" fill="#111" text-anchor="middle" font-weight="bold" >0.80</text>
<text x="131" y="552.2000000000002" font-size="8.5" fill="#111" text-anchor="middle" >5</text>
<text x="141.5" y="551.0000000000001" font-size="5.4" fill="#111" text-anchor="middle" font-weight="bold" >A</text>
<text x="112.5" y="564.5500000000001" font-size="5.4" fill="#111" text-anchor="middle" font-weight="bold" >4.40</text>
<text x="89" y="564.5500000000001" font-size="5.4" fill="#111" text-anchor="middle" font-weight="bold" >2.00</text>
<text x="65.5" y="564.5500000000001" font-size="5.4" fill="#111" text-anchor="middle" font-weight="bold" >0.80</text>
<text x="131" y="565.7500000000001" font-size="8.5" fill="#111" text-anchor="middle" >6</text>
<text x="141.5" y="564.5500000000001" font-size="5.4" fill="#111" text-anchor="middle" font-weight="bold" >A</text>
<text x="112.5" y="578.1000000000001" font-size="5.4" fill="#111" text-anchor="middle" font-weight="bold" >2.50</text>
<text x="89" y="578.1000000000001" font-size="5.4" fill="#111" text-anchor="middle" font-weight="bold" >2.00</text>
<text x="65.5" y="578.1000000000001" font-size="5.4" fill="#111" text-anchor="middle" font-weight="bold" >0.60</text>
<text x="131" y="579.3000000000002" font-size="8.5" fill="#111" text-anchor="middle" >7</text>
<text x="141.5" y="578.1000000000001" font-size="5.4" fill="#111" text-anchor="middle" font-weight="bold" >A</text>
<text x="112.5" y="591.6500000000001" font-size="5.4" fill="#111" text-anchor="middle" font-weight="bold" >.70</text>
<text x="89" y="591.6500000000001" font-size="5.4" fill="#111" text-anchor="middle" font-weight="bold" >1.60</text>
<text x="65.5" y="591.6500000000001" font-size="5.4" fill="#111" text-anchor="middle" font-weight="bold" >1.00</text>
<text x="131" y="592.8500000000001" font-size="8.5" fill="#111" text-anchor="middle" >8</text>
<text x="141.5" y="591.6500000000001" font-size="5.4" fill="#111" text-anchor="middle" font-weight="bold" >A</text>
<text x="20" y="512" font-size="6" fill="#20e0f0" text-anchor="middle" font-family="Liberation Sans, DejaVu Sans, sans-serif" font-weight="bold" transform="rotate(-28 20 512)" >حسب الطلب</text>
<line x1="-2" y1="520" x2="42" y2="497" stroke="#20e0f0" stroke-width="1" />
<text x="78" y="604" font-size="3.6" fill="#20d8f0" text-anchor="middle" font-family="Liberation Sans, DejaVu Sans, sans-serif" font-weight="bold" >حسب الشكل او الرغبة</text>
<text x="78" y="610.5" font-size="3.6" fill="#20d8f0" text-anchor="middle" font-family="Liberation Sans, DejaVu Sans, sans-serif" font-weight="bold" >يكتب الشكل خلال الطلب</text>
<rect x="-19.5" y="170" width="171.5" height="543.5" fill="none" stroke="#4a86cc" stroke-width="2.7" rx="3.5" />
<rect x="-19.5" y="170" width="171.5" height="543.5" fill="none" stroke="#ffffff" stroke-width="1.0" rx="3.5" />
<rect x="-19.5" y="717" width="171.5" height="72.5" fill="none" stroke="#4a86cc" stroke-width="2.7" rx="3.5" />
<rect x="-19.5" y="717" width="171.5" height="72.5" fill="none" stroke="#ffffff" stroke-width="1.0" rx="3.5" />
<path d="M-7.1 729.6 L3.0 729.6 L3.0 733.8 L-6.3 746.6 L-7.1 746.6 Z" fill="#c08a1e" stroke="#222" stroke-width="0.6" stroke-linejoin="miter"/>
<path d="M-16.6 764.6 L14.6 724.3 L24.1 734.9 L33.7 724.3 L44.1 735.6" fill="none" stroke="#222" stroke-width="3.8" stroke-linejoin="miter"/>
<path d="M24.1 734.9 L1.9 764.6 L23.6 764.6" fill="none" stroke="#222" stroke-width="3.8" stroke-linejoin="miter"/>
<path d="M3.0 745.2 L11.7 753.6" fill="none" stroke="#222" stroke-width="3.8" stroke-linejoin="miter"/>
<path d="M8.8 760.0 L23.1 760.0" fill="none" stroke="#222" stroke-width="3.8" stroke-linejoin="miter"/>
<path d="M-16.6 764.6 L14.6 724.3 L24.1 734.9 L33.7 724.3 L44.1 735.6" fill="none" stroke="#c08a1e" stroke-width="2.7" stroke-linejoin="miter"/>
<path d="M24.1 734.9 L1.9 764.6 L23.6 764.6" fill="none" stroke="#c08a1e" stroke-width="2.7" stroke-linejoin="miter"/>
<path d="M3.0 745.2 L11.7 753.6" fill="none" stroke="#c08a1e" stroke-width="2.7" stroke-linejoin="miter"/>
<path d="M8.8 760.0 L23.1 760.0" fill="none" stroke="#c08a1e" stroke-width="2.7" stroke-linejoin="miter"/>
<path d="M28.4 764.6 L58.6 724.5 L70.2 736.2" fill="none" stroke="#1f4e62" stroke-width="3.4" stroke-linejoin="miter"/>
<path d="M27.3 764.6 L133.0 764.6" fill="none" stroke="#1f4e62" stroke-width="2.8" stroke-linejoin="miter"/>
<path d="M33.7 760.7 L46.6 760.7 L46.6 743.8 L52.5 750.2" fill="none" stroke="#1f4e62" stroke-width="2.6" stroke-linejoin="miter"/>
<text x="132.5" y="745" font-size="17.5" fill="#1f4e62" text-anchor="end" font-family="Liberation Sans, DejaVu Sans, sans-serif" font-weight="bold" stroke="#1f4e62" stroke-width="0.7" textLength="63" lengthAdjust="spacingAndGlyphs">المتميزون</text>
<text x="102" y="752" font-size="4.9" fill="#1b6fa8" text-anchor="middle" font-weight="bold" font-style="italic" transform="rotate( 102 752)" >Almutamaizon Engineering Consultants</text>
<text x="132.5" y="759" font-size="6.3" fill="#111" text-anchor="end" font-family="Liberation Sans, DejaVu Sans, sans-serif" font-weight="bold" textLength="76" lengthAdjust="spacingAndGlyphs">المتميزون للإستشارات الهندسية</text>
<line x1="57" y1="760.3" x2="132.5" y2="760.3" stroke="#c08a1e" stroke-width="1" />
<text x="48.5" y="777" font-size="11.5" fill="#2f7fa0" textLength="20" lengthAdjust="spacingAndGlyphs">[,hG</text>
<line x1="76" y1="772.5" x2="81" y2="772.5" stroke="#2f7fa0" stroke-width="1" />
<text x="138.5" y="777" font-size="11.5" fill="#2f7fa0" textLength="52" lengthAdjust="spacingAndGlyphs">0508976550</text>
<text x="144" y="777" font-size="11.5" fill="#2f7fa0" textLength="30" lengthAdjust="spacingAndGlyphs" opacity="0.7">0561976</text>
<text x="208.5" y="777" font-size="11.5" fill="#2f7fa0" textLength="21.5" lengthAdjust="spacingAndGlyphs">2433</text>
<rect x="-19.5" y="792.8" width="113.0" height="13.6" fill="none" stroke="#4a86cc" stroke-width="2.7" rx="3.5" />
<rect x="-19.5" y="792.8" width="113.0" height="13.6" fill="none" stroke="#ffffff" stroke-width="1.0" rx="3.5" />
<rect x="95.5" y="792.8" width="56.5" height="13.6" fill="none" stroke="#4a86cc" stroke-width="2.7" rx="3.5" />
<rect x="95.5" y="792.8" width="56.5" height="13.6" fill="none" stroke="#ffffff" stroke-width="1.0" rx="3.5" />
<rect x="-19.5" y="809.2199999999999" width="113.0" height="13.6" fill="none" stroke="#4a86cc" stroke-width="2.7" rx="3.5" />
<rect x="-19.5" y="809.2199999999999" width="113.0" height="13.6" fill="none" stroke="#ffffff" stroke-width="1.0" rx="3.5" />
<rect x="95.5" y="809.2199999999999" width="56.5" height="13.6" fill="none" stroke="#4a86cc" stroke-width="2.7" rx="3.5" />
<rect x="95.5" y="809.2199999999999" width="56.5" height="13.6" fill="none" stroke="#ffffff" stroke-width="1.0" rx="3.5" />
<rect x="-19.5" y="825.64" width="25.5" height="13.6" fill="none" stroke="#4a86cc" stroke-width="2.7" rx="3.5" />
<rect x="-19.5" y="825.64" width="25.5" height="13.6" fill="none" stroke="#ffffff" stroke-width="1.0" rx="3.5" />
<rect x="8" y="825.64" width="25.5" height="13.6" fill="none" stroke="#4a86cc" stroke-width="2.7" rx="3.5" />
<rect x="8" y="825.64" width="25.5" height="13.6" fill="none" stroke="#ffffff" stroke-width="1.0" rx="3.5" />
<rect x="36" y="825.64" width="57.5" height="13.6" fill="none" stroke="#4a86cc" stroke-width="2.7" rx="3.5" />
<rect x="36" y="825.64" width="57.5" height="13.6" fill="none" stroke="#ffffff" stroke-width="1.0" rx="3.5" />
<rect x="95.5" y="825.64" width="56.5" height="13.6" fill="none" stroke="#4a86cc" stroke-width="2.7" rx="3.5" />
<rect x="95.5" y="825.64" width="56.5" height="13.6" fill="none" stroke="#ffffff" stroke-width="1.0" rx="3.5" />
<rect x="-19.5" y="842.06" width="25.5" height="13.6" fill="none" stroke="#4a86cc" stroke-width="2.7" rx="3.5" />
<rect x="-19.5" y="842.06" width="25.5" height="13.6" fill="none" stroke="#ffffff" stroke-width="1.0" rx="3.5" />
<rect x="8" y="842.06" width="25.5" height="13.6" fill="none" stroke="#4a86cc" stroke-width="2.7" rx="3.5" />
<rect x="8" y="842.06" width="25.5" height="13.6" fill="none" stroke="#ffffff" stroke-width="1.0" rx="3.5" />
<rect x="36" y="842.06" width="57.5" height="13.6" fill="none" stroke="#4a86cc" stroke-width="2.7" rx="3.5" />
<rect x="36" y="842.06" width="57.5" height="13.6" fill="none" stroke="#ffffff" stroke-width="1.0" rx="3.5" />
<rect x="95.5" y="842.06" width="56.5" height="13.6" fill="none" stroke="#4a86cc" stroke-width="2.7" rx="3.5" />
<rect x="95.5" y="842.06" width="56.5" height="13.6" fill="none" stroke="#ffffff" stroke-width="1.0" rx="3.5" />
<rect x="-19.5" y="858.48" width="25.5" height="13.6" fill="none" stroke="#4a86cc" stroke-width="2.7" rx="3.5" />
<rect x="-19.5" y="858.48" width="25.5" height="13.6" fill="none" stroke="#ffffff" stroke-width="1.0" rx="3.5" />
<rect x="8" y="858.48" width="25.5" height="13.6" fill="none" stroke="#4a86cc" stroke-width="2.7" rx="3.5" />
<rect x="8" y="858.48" width="25.5" height="13.6" fill="none" stroke="#ffffff" stroke-width="1.0" rx="3.5" />
<rect x="36" y="858.48" width="57.5" height="13.6" fill="none" stroke="#4a86cc" stroke-width="2.7" rx="3.5" />
<rect x="36" y="858.48" width="57.5" height="13.6" fill="none" stroke="#ffffff" stroke-width="1.0" rx="3.5" />
<rect x="95.5" y="858.48" width="56.5" height="13.6" fill="none" stroke="#4a86cc" stroke-width="2.7" rx="3.5" />
<rect x="95.5" y="858.48" width="56.5" height="13.6" fill="none" stroke="#ffffff" stroke-width="1.0" rx="3.5" />
<rect x="-19.5" y="874.9" width="25.5" height="13.6" fill="none" stroke="#4a86cc" stroke-width="2.7" rx="3.5" />
<rect x="-19.5" y="874.9" width="25.5" height="13.6" fill="none" stroke="#ffffff" stroke-width="1.0" rx="3.5" />
<rect x="8" y="874.9" width="25.5" height="13.6" fill="none" stroke="#4a86cc" stroke-width="2.7" rx="3.5" />
<rect x="8" y="874.9" width="25.5" height="13.6" fill="none" stroke="#ffffff" stroke-width="1.0" rx="3.5" />
<rect x="36" y="874.9" width="57.5" height="13.6" fill="none" stroke="#4a86cc" stroke-width="2.7" rx="3.5" />
<rect x="36" y="874.9" width="57.5" height="13.6" fill="none" stroke="#ffffff" stroke-width="1.0" rx="3.5" />
<rect x="95.5" y="874.9" width="56.5" height="13.6" fill="none" stroke="#4a86cc" stroke-width="2.7" rx="3.5" />
<rect x="95.5" y="874.9" width="56.5" height="13.6" fill="none" stroke="#ffffff" stroke-width="1.0" rx="3.5" />
<rect x="-19.5" y="891.3199999999999" width="41.5" height="13.6" fill="none" stroke="#4a86cc" stroke-width="2.7" rx="3.5" />
<rect x="-19.5" y="891.3199999999999" width="41.5" height="13.6" fill="none" stroke="#ffffff" stroke-width="1.0" rx="3.5" />
<rect x="24" y="891.3199999999999" width="41" height="13.6" fill="none" stroke="#4a86cc" stroke-width="2.7" rx="3.5" />
<rect x="24" y="891.3199999999999" width="41" height="13.6" fill="none" stroke="#ffffff" stroke-width="1.0" rx="3.5" />
<rect x="67" y="891.3199999999999" width="41.5" height="13.6" fill="none" stroke="#4a86cc" stroke-width="2.7" rx="3.5" />
<rect x="67" y="891.3199999999999" width="41.5" height="13.6" fill="none" stroke="#ffffff" stroke-width="1.0" rx="3.5" />
<rect x="110.5" y="891.3199999999999" width="41.5" height="13.6" fill="none" stroke="#4a86cc" stroke-width="2.7" rx="3.5" />
<rect x="110.5" y="891.3199999999999" width="41.5" height="13.6" fill="none" stroke="#ffffff" stroke-width="1.0" rx="3.5" />
<rect x="-19.5" y="907.74" width="41.5" height="13.6" fill="none" stroke="#4a86cc" stroke-width="2.7" rx="3.5" />
<rect x="-19.5" y="907.74" width="41.5" height="13.6" fill="none" stroke="#ffffff" stroke-width="1.0" rx="3.5" />
<rect x="24" y="907.74" width="41" height="13.6" fill="none" stroke="#4a86cc" stroke-width="2.7" rx="3.5" />
<rect x="24" y="907.74" width="41" height="13.6" fill="none" stroke="#ffffff" stroke-width="1.0" rx="3.5" />
<rect x="67" y="907.74" width="41.5" height="13.6" fill="none" stroke="#4a86cc" stroke-width="2.7" rx="3.5" />
<rect x="67" y="907.74" width="41.5" height="13.6" fill="none" stroke="#ffffff" stroke-width="1.0" rx="3.5" />
<rect x="110.5" y="907.74" width="41.5" height="13.6" fill="none" stroke="#4a86cc" stroke-width="2.7" rx="3.5" />
<rect x="110.5" y="907.74" width="41.5" height="13.6" fill="none" stroke="#ffffff" stroke-width="1.0" rx="3.5" />
<rect x="-19.5" y="924.16" width="41.5" height="13.6" fill="none" stroke="#4a86cc" stroke-width="2.7" rx="3.5" />
<rect x="-19.5" y="924.16" width="41.5" height="13.6" fill="none" stroke="#ffffff" stroke-width="1.0" rx="3.5" />
<rect x="24" y="924.16" width="41" height="13.6" fill="none" stroke="#4a86cc" stroke-width="2.7" rx="3.5" />
<rect x="24" y="924.16" width="41" height="13.6" fill="none" stroke="#ffffff" stroke-width="1.0" rx="3.5" />
<rect x="67" y="924.16" width="41.5" height="13.6" fill="none" stroke="#4a86cc" stroke-width="2.7" rx="3.5" />
<rect x="67" y="924.16" width="41.5" height="13.6" fill="none" stroke="#ffffff" stroke-width="1.0" rx="3.5" />
<rect x="110.5" y="924.16" width="41.5" height="13.6" fill="none" stroke="#4a86cc" stroke-width="2.7" rx="3.5" />
<rect x="110.5" y="924.16" width="41.5" height="13.6" fill="none" stroke="#ffffff" stroke-width="1.0" rx="3.5" />
<text x="78" y="803" font-size="5.6" fill="#1818e8" text-anchor="None" font-weight="bold" >b)] lpl] HgfVH: ___m</text>
<text x="138.5" y="803" font-size="9" fill="#b02020" >hglhg;</text>
<text x="80.5" y="818.5" font-size="8" fill="#20e0f0" >luhhD hg],v hghvdD</text>
<text x="150.5" y="818.5" font-size="7.5" fill="#b02020" >hgg.pm</text>
<text x="31.5" y="834.64" font-size="5" fill="#b02020" text-anchor="None" font-weight="bold" >hg|rdu</text>
<text x="82.5" y="833.64" font-size="3.8" fill="#1818e8" text-anchor="None" font-weight="bold" >hg)] hl[] Hvdv</text>
<text x="150" y="834.64" font-size="5.6" fill="#b02020" text-anchor="None" font-weight="bold" >Hk]S luhvD</text>
<text x="31.5" y="851.06" font-size="5" fill="#b02020" text-anchor="None" font-weight="bold" >hg|rdu</text>
<text x="82.5" y="850.06" font-size="3.8" fill="#1818e8" text-anchor="None" font-weight="bold" >vrhl hg)hl hkJ</text>
<text x="150" y="851.06" font-size="5.6" fill="#b02020" text-anchor="None" font-weight="bold" >Hk]S ldkhkd:H</text>
<text x="31.5" y="867.48" font-size="5" fill="#b02020" text-anchor="None" font-weight="bold" >hg|rdu</text>
<text x="82.5" y="866.48" font-size="3.8" fill="#1818e8" text-anchor="None" font-weight="bold" >prdhm hg)hl</text>
<text x="150" y="867.48" font-size="5.6" fill="#b02020" text-anchor="None" font-weight="bold" >Hk]S :vhHu</text>
<text x="31.5" y="883.9" font-size="5" fill="#b02020" text-anchor="None" font-weight="bold" >hg|rdu</text>
<text x="82.5" y="882.9" font-size="3.8" fill="#1818e8" text-anchor="None" font-weight="bold" >lp] hgl)wv</text>
<text x="150" y="883.9" font-size="5.6" fill="#b02020" text-anchor="None" font-weight="bold" >Hk]S HkahzD</text>
<text x="61.5" y="899.8199999999999" font-size="5" fill="#b02020" text-anchor="None" font-weight="bold" >lrdhs hgvsl</text>
<text x="150" y="899.8199999999999" font-size="5.6" fill="#b02020" text-anchor="None" font-weight="bold" >wl hgvgpm</text>
<text x="60" y="916.24" font-size="5" fill="#c04040" >hgj____D</text>
<text x="150" y="917.24" font-size="8" fill="#b02020" >hgl]dkm</text>
<text x="58" y="934.66" font-size="10.5" fill="#d03030" >[,hg</text>
<text x="150" y="932.66" font-size="5.6" fill="#b02020" text-anchor="None" font-weight="bold" >jwvdp w]</text>
</g>
<line x1="238.3" y1="183" x2="238.3" y2="935" stroke="#444" stroke-width="1.5" />
<line x1="247.8" y1="183" x2="247.8" y2="202.5" stroke="#1f5fc0" stroke-width="2.4" />
<rect x="249.8" y="183" width="7.2" height="79" fill="#8f9096" stroke="#a03a30" stroke-width="1.4" />
<line x1="253.6" y1="198" x2="253.6" y2="258" stroke="#b8d0e8" stroke-width="1" />
<rect x="249" y="193.3" width="9" height="2.2" fill="#fff" />
<rect x="250.0" y="193.6" width="1.1" height="1.6" fill="#e8a0a8" />
<rect x="252.3" y="193.6" width="1.1" height="1.6" fill="#e8a0a8" />
<rect x="254.6" y="193.6" width="1.1" height="1.6" fill="#e8a0a8" />
<line x1="250.8" y1="262" x2="250.8" y2="935" stroke="#d05878" stroke-width="1.7" />
<line x1="256.6" y1="262" x2="256.6" y2="935" stroke="#c02850" stroke-width="1.3" />
<line x1="253.9" y1="262" x2="253.9" y2="935" stroke="#3a7ac8" stroke-width="1.3" />
<rect x="250.2" y="875" width="6.8" height="61" fill="#e0dcd8" stroke="#8a4a3a" stroke-width="2" />
<line x1="260.9" y1="183" x2="260.9" y2="262.2" stroke="#4a88cc" stroke-width="1.8" />
<line x1="261" y1="875" x2="261" y2="935" stroke="#3f7fc8" stroke-width="1.1" />
<line x1="260.8" y1="183.8" x2="337" y2="183.8" stroke="#3f7fc8" stroke-width="1.5" />
<line x1="506.5" y1="292" x2="506.5" y2="318" stroke="#4a4a4a" stroke-width="1.1" />
<line x1="506.5" y1="318" x2="506.5" y2="772" stroke="#4a4a4a" stroke-width="1.1" stroke-dasharray="11 2.5 2.5 2.5" />
<line x1="506.5" y1="772" x2="506.5" y2="798" stroke="#4a4a4a" stroke-width="1.1" />
<line x1="551.5" y1="292" x2="551.5" y2="318" stroke="#4a4a4a" stroke-width="1.1" />
<line x1="551.5" y1="318" x2="551.5" y2="772" stroke="#4a4a4a" stroke-width="1.1" stroke-dasharray="11 2.5 2.5 2.5" />
<line x1="551.5" y1="772" x2="551.5" y2="798" stroke="#4a4a4a" stroke-width="1.1" />
<line x1="596.5" y1="292" x2="596.5" y2="318" stroke="#4a4a4a" stroke-width="1.1" />
<line x1="596.5" y1="318" x2="596.5" y2="772" stroke="#4a4a4a" stroke-width="1.1" stroke-dasharray="11 2.5 2.5 2.5" />
<line x1="596.5" y1="772" x2="596.5" y2="798" stroke="#4a4a4a" stroke-width="1.1" />
<line x1="627.775" y1="292" x2="627.775" y2="318" stroke="#4a4a4a" stroke-width="1.1" />
<line x1="627.775" y1="318" x2="627.775" y2="772" stroke="#4a4a4a" stroke-width="1.1" stroke-dasharray="11 2.5 2.5 2.5" />
<line x1="627.775" y1="772" x2="627.775" y2="798" stroke="#4a4a4a" stroke-width="1.1" />
<line x1="641.5" y1="292" x2="641.5" y2="318" stroke="#4a4a4a" stroke-width="1.1" />
<line x1="641.5" y1="318" x2="641.5" y2="772" stroke="#4a4a4a" stroke-width="1.1" stroke-dasharray="11 2.5 2.5 2.5" />
<line x1="641.5" y1="772" x2="641.5" y2="798" stroke="#4a4a4a" stroke-width="1.1" />
<line x1="686.5" y1="292" x2="686.5" y2="318" stroke="#4a4a4a" stroke-width="1.1" />
<line x1="686.5" y1="318" x2="686.5" y2="772" stroke="#4a4a4a" stroke-width="1.1" stroke-dasharray="11 2.5 2.5 2.5" />
<line x1="686.5" y1="772" x2="686.5" y2="798" stroke="#4a4a4a" stroke-width="1.1" />
<line x1="704.05" y1="292" x2="704.05" y2="318" stroke="#4a4a4a" stroke-width="1.1" />
<line x1="704.05" y1="318" x2="704.05" y2="772" stroke="#4a4a4a" stroke-width="1.1" stroke-dasharray="11 2.5 2.5 2.5" />
<line x1="704.05" y1="772" x2="704.05" y2="798" stroke="#4a4a4a" stroke-width="1.1" />
<line x1="720.25" y1="292" x2="720.25" y2="318" stroke="#4a4a4a" stroke-width="1.1" />
<line x1="720.25" y1="318" x2="720.25" y2="772" stroke="#4a4a4a" stroke-width="1.1" stroke-dasharray="11 2.5 2.5 2.5" />
<line x1="720.25" y1="772" x2="720.25" y2="798" stroke="#4a4a4a" stroke-width="1.1" />
<line x1="747.475" y1="292" x2="747.475" y2="318" stroke="#4a4a4a" stroke-width="1.1" />
<line x1="747.475" y1="318" x2="747.475" y2="772" stroke="#4a4a4a" stroke-width="1.1" stroke-dasharray="11 2.5 2.5 2.5" />
<line x1="747.475" y1="772" x2="747.475" y2="798" stroke="#4a4a4a" stroke-width="1.1" />
<line x1="760.75" y1="292" x2="760.75" y2="318" stroke="#4a4a4a" stroke-width="1.1" />
<line x1="760.75" y1="318" x2="760.75" y2="772" stroke="#4a4a4a" stroke-width="1.1" stroke-dasharray="11 2.5 2.5 2.5" />
<line x1="760.75" y1="772" x2="760.75" y2="798" stroke="#4a4a4a" stroke-width="1.1" />
<line x1="794.5" y1="292" x2="794.5" y2="318" stroke="#4a4a4a" stroke-width="1.1" />
<line x1="794.5" y1="318" x2="794.5" y2="772" stroke="#4a4a4a" stroke-width="1.1" stroke-dasharray="11 2.5 2.5 2.5" />
<line x1="794.5" y1="772" x2="794.5" y2="798" stroke="#4a4a4a" stroke-width="1.1" />
<line x1="882.25" y1="292" x2="882.25" y2="318" stroke="#4a4a4a" stroke-width="1.1" />
<line x1="882.25" y1="318" x2="882.25" y2="772" stroke="#4a4a4a" stroke-width="1.1" stroke-dasharray="11 2.5 2.5 2.5" />
<line x1="882.25" y1="772" x2="882.25" y2="798" stroke="#4a4a4a" stroke-width="1.1" />
<line x1="934.0" y1="292" x2="934.0" y2="318" stroke="#4a4a4a" stroke-width="1.1" />
<line x1="934.0" y1="318" x2="934.0" y2="772" stroke="#4a4a4a" stroke-width="1.1" stroke-dasharray="11 2.5 2.5 2.5" />
<line x1="934.0" y1="772" x2="934.0" y2="798" stroke="#4a4a4a" stroke-width="1.1" />
<line x1="963.25" y1="292" x2="963.25" y2="318" stroke="#4a4a4a" stroke-width="1.1" />
<line x1="963.25" y1="318" x2="963.25" y2="772" stroke="#4a4a4a" stroke-width="1.1" stroke-dasharray="11 2.5 2.5 2.5" />
<line x1="963.25" y1="772" x2="963.25" y2="798" stroke="#4a4a4a" stroke-width="1.1" />
<line x1="1042.0" y1="292" x2="1042.0" y2="318" stroke="#4a4a4a" stroke-width="1.1" />
<line x1="1042.0" y1="318" x2="1042.0" y2="772" stroke="#4a4a4a" stroke-width="1.1" stroke-dasharray="11 2.5 2.5 2.5" />
<line x1="1042.0" y1="772" x2="1042.0" y2="798" stroke="#4a4a4a" stroke-width="1.1" />
<path d="M995.0 292.0 L995.0 313.0 L974.5 313.0 L974.5 345.0" fill="none" stroke="#4a4a4a" stroke-width="1.1" />
<line x1="974.5" y1="345" x2="974.5" y2="745" stroke="#4a4a4a" stroke-width="1.1" stroke-dasharray="11 2.5 2.5 2.5" />
<path d="M974.5 745.0 L974.5 766.0 L995.0 766.0 L995.0 798.0" fill="none" stroke="#4a4a4a" stroke-width="1.1" />
<line x1="423" y1="388" x2="433" y2="388" stroke="#4a4a4a" stroke-width="1.1" />
<line x1="1113" y1="388" x2="1103" y2="388" stroke="#4a4a4a" stroke-width="1.1" />
<line x1="433" y1="388" x2="1103" y2="388" stroke="#4a4a4a" stroke-width="1.1" stroke-dasharray="11 2.5 2.5 2.5" />
<path d="M423.0 469.3 L450.7 469.3 L450.7 483.2 L472.7 483.2" fill="none" stroke="#4a4a4a" stroke-width="1.1" />
<path d="M1113.0 469.3 L1085.0 469.3 L1085.0 483.2 L1063.0 483.2" fill="none" stroke="#4a4a4a" stroke-width="1.1" />
<line x1="473" y1="483.2" x2="1063" y2="483.2" stroke="#4a4a4a" stroke-width="1.1" stroke-dasharray="11 2.5 2.5 2.5" />
<line x1="423" y1="492.4" x2="433" y2="492.4" stroke="#4a4a4a" stroke-width="1.1" />
<line x1="1113" y1="492.4" x2="1103" y2="492.4" stroke="#4a4a4a" stroke-width="1.1" />
<line x1="433" y1="492.4" x2="1103" y2="492.4" stroke="#4a4a4a" stroke-width="1.1" stroke-dasharray="11 2.5 2.5 2.5" />
<path d="M423.0 512.4 L450.7 512.4 L450.7 526.4 L472.7 526.4" fill="none" stroke="#4a4a4a" stroke-width="1.1" />
<path d="M1113.0 512.4 L1085.0 512.4 L1085.0 526.4 L1063.0 526.4" fill="none" stroke="#4a4a4a" stroke-width="1.1" />
<line x1="473" y1="526.4" x2="1063" y2="526.4" stroke="#4a4a4a" stroke-width="1.1" stroke-dasharray="11 2.5 2.5 2.5" />
<line x1="423" y1="532.8" x2="433" y2="532.8" stroke="#4a4a4a" stroke-width="1.1" />
<line x1="1113" y1="532.8" x2="1103" y2="532.8" stroke="#4a4a4a" stroke-width="1.1" />
<line x1="433" y1="532.8" x2="1103" y2="532.8" stroke="#4a4a4a" stroke-width="1.1" stroke-dasharray="11 2.5 2.5 2.5" />
<path d="M423.0 553.8 L450.7 553.8 L450.7 541.8 L472.7 541.8" fill="none" stroke="#4a4a4a" stroke-width="1.1" />
<path d="M1113.0 553.8 L1085.0 553.8 L1085.0 541.8 L1063.0 541.8" fill="none" stroke="#4a4a4a" stroke-width="1.1" />
<line x1="473" y1="541.8" x2="1063" y2="541.8" stroke="#4a4a4a" stroke-width="1.1" stroke-dasharray="11 2.5 2.5 2.5" />
<line x1="423" y1="582.3" x2="433" y2="582.3" stroke="#4a4a4a" stroke-width="1.1" />
<line x1="1113" y1="582.3" x2="1103" y2="582.3" stroke="#4a4a4a" stroke-width="1.1" />
<line x1="433" y1="582.3" x2="1103" y2="582.3" stroke="#4a4a4a" stroke-width="1.1" stroke-dasharray="11 2.5 2.5 2.5" />
<line x1="423" y1="598.4" x2="433" y2="598.4" stroke="#4a4a4a" stroke-width="1.1" />
<line x1="1113" y1="598.4" x2="1103" y2="598.4" stroke="#4a4a4a" stroke-width="1.1" />
<line x1="433" y1="598.4" x2="1103" y2="598.4" stroke="#4a4a4a" stroke-width="1.1" stroke-dasharray="11 2.5 2.5 2.5" />
<path d="M423.0 621.8 L450.7 621.8 L450.7 609.5 L472.7 609.5" fill="none" stroke="#4a4a4a" stroke-width="1.1" />
<path d="M1113.0 621.8 L1085.0 621.8 L1085.0 609.5 L1063.0 609.5" fill="none" stroke="#4a4a4a" stroke-width="1.1" />
<line x1="473" y1="609.5" x2="1063" y2="609.5" stroke="#4a4a4a" stroke-width="1.1" stroke-dasharray="11 2.5 2.5 2.5" />
<line x1="423" y1="638.8" x2="433" y2="638.8" stroke="#4a4a4a" stroke-width="1.1" />
<line x1="1113" y1="638.8" x2="1103" y2="638.8" stroke="#4a4a4a" stroke-width="1.1" />
<line x1="433" y1="638.8" x2="1103" y2="638.8" stroke="#4a4a4a" stroke-width="1.1" stroke-dasharray="11 2.5 2.5 2.5" />
<line x1="423" y1="672.4" x2="433" y2="672.4" stroke="#4a4a4a" stroke-width="1.1" />
<line x1="1113" y1="672.4" x2="1103" y2="672.4" stroke="#4a4a4a" stroke-width="1.1" />
<line x1="433" y1="672.4" x2="1103" y2="672.4" stroke="#4a4a4a" stroke-width="1.1" stroke-dasharray="11 2.5 2.5 2.5" />
<line x1="423" y1="717.2" x2="433" y2="717.2" stroke="#4a4a4a" stroke-width="1.1" />
<line x1="1113" y1="717.2" x2="1103" y2="717.2" stroke="#4a4a4a" stroke-width="1.1" />
<line x1="433" y1="717.2" x2="1103" y2="717.2" stroke="#4a4a4a" stroke-width="1.1" stroke-dasharray="11 2.5 2.5 2.5" />
<line x1="504.5" y1="324.4" x2="1044.0" y2="324.4" stroke="#35595c" stroke-width="1.3" />
<circle cx="506.5" cy="324.4" r="1.7" fill="#f2ee00" />
<circle cx="1042.0" cy="324.4" r="1.7" fill="#f2ee00" />
<rect x="761.0" y="320.87199999999996" width="20" height="6.720000000000001" fill="#fff" />
<text x="771" y="327.424" font-size="8.4" fill="#111" stroke="#111" stroke-width="0.3" text-anchor="middle" textLength="19" lengthAdjust="spacingAndGlyphs">23.80</text>
<line x1="504.5" y1="343" x2="1044.0" y2="343" stroke="#35595c" stroke-width="1.3" />
<circle cx="506.5" cy="343" r="1.7" fill="#f2ee00" />
<rect x="521.0" y="339.472" width="16" height="6.720000000000001" fill="#fff" />
<text x="529.0" y="346.024" font-size="8.4" fill="#111" stroke="#111" stroke-width="0.3" text-anchor="middle" textLength="15" lengthAdjust="spacingAndGlyphs">2.00</text>
<circle cx="551.5" cy="343" r="1.7" fill="#f2ee00" />
<rect x="566.0" y="339.472" width="16" height="6.720000000000001" fill="#fff" />
<text x="574.0" y="346.024" font-size="8.4" fill="#111" stroke="#111" stroke-width="0.3" text-anchor="middle" textLength="15" lengthAdjust="spacingAndGlyphs">2.00</text>
<circle cx="596.5" cy="343" r="1.7" fill="#f2ee00" />
<rect x="604.1375" y="339.472" width="16" height="6.720000000000001" fill="#fff" />
<text x="612.1375" y="346.024" font-size="8.4" fill="#111" stroke="#111" stroke-width="0.3" text-anchor="middle" textLength="15" lengthAdjust="spacingAndGlyphs">1.39</text>
<circle cx="627.775" cy="343" r="1.7" fill="#f2ee00" />
<text x="634.6375" y="346.024" font-size="8.4" fill="#111" stroke="#111" stroke-width="0.3" text-anchor="middle" textLength="13" lengthAdjust="spacingAndGlyphs">0.61</text>
<circle cx="641.5" cy="343" r="1.7" fill="#f2ee00" />
<rect x="656.0" y="339.472" width="16" height="6.720000000000001" fill="#fff" />
<text x="664.0" y="346.024" font-size="8.4" fill="#111" stroke="#111" stroke-width="0.3" text-anchor="middle" textLength="15" lengthAdjust="spacingAndGlyphs">2.00</text>
<circle cx="686.5" cy="343" r="1.7" fill="#f2ee00" />
<rect x="687.275" y="339.472" width="16" height="6.720000000000001" fill="#fff" />
<text x="695.275" y="346.024" font-size="8.4" fill="#111" stroke="#111" stroke-width="0.3" text-anchor="middle" textLength="15" lengthAdjust="spacingAndGlyphs">0.78</text>
<circle cx="704.05" cy="343" r="1.7" fill="#f2ee00" />
<rect x="704.15" y="339.472" width="16" height="6.720000000000001" fill="#fff" />
<text x="712.15" y="346.024" font-size="8.4" fill="#111" stroke="#111" stroke-width="0.3" text-anchor="middle" textLength="15" lengthAdjust="spacingAndGlyphs">0.72</text>
<circle cx="720.25" cy="343" r="1.7" fill="#f2ee00" />
<rect x="725.8625" y="339.472" width="16" height="6.720000000000001" fill="#fff" />
<text x="733.8625" y="346.024" font-size="8.4" fill="#111" stroke="#111" stroke-width="0.3" text-anchor="middle" textLength="15" lengthAdjust="spacingAndGlyphs">1.21</text>
<circle cx="747.475" cy="343" r="1.7" fill="#f2ee00" />
<text x="754.1125" y="346.024" font-size="8.4" fill="#111" stroke="#111" stroke-width="0.3" text-anchor="middle" textLength="13" lengthAdjust="spacingAndGlyphs">0.59</text>
<circle cx="760.75" cy="343" r="1.7" fill="#f2ee00" />
<rect x="769.625" y="339.472" width="16" height="6.720000000000001" fill="#fff" />
<text x="777.625" y="346.024" font-size="8.4" fill="#111" stroke="#111" stroke-width="0.3" text-anchor="middle" textLength="15" lengthAdjust="spacingAndGlyphs">1.50</text>
<circle cx="794.5" cy="343" r="1.7" fill="#f2ee00" />
<rect x="830.375" y="339.472" width="16" height="6.720000000000001" fill="#fff" />
<text x="838.375" y="346.024" font-size="8.4" fill="#111" stroke="#111" stroke-width="0.3" text-anchor="middle" textLength="15" lengthAdjust="spacingAndGlyphs">3.90</text>
<circle cx="882.25" cy="343" r="1.7" fill="#f2ee00" />
<rect x="900.125" y="339.472" width="16" height="6.720000000000001" fill="#fff" />
<text x="908.125" y="346.024" font-size="8.4" fill="#111" stroke="#111" stroke-width="0.3" text-anchor="middle" textLength="15" lengthAdjust="spacingAndGlyphs">2.30</text>
<circle cx="934.0" cy="343" r="1.7" fill="#f2ee00" />
<rect x="940.625" y="339.472" width="16" height="6.720000000000001" fill="#fff" />
<text x="948.625" y="346.024" font-size="8.4" fill="#111" stroke="#111" stroke-width="0.3" text-anchor="middle" textLength="15" lengthAdjust="spacingAndGlyphs">1.30</text>
<circle cx="963.25" cy="343" r="1.7" fill="#f2ee00" />
<text x="968.875" y="346.024" font-size="8.4" fill="#111" stroke="#111" stroke-width="0.3" text-anchor="middle" textLength="13" lengthAdjust="spacingAndGlyphs">0.50</text>
<circle cx="974.5" cy="343" r="1.7" fill="#f2ee00" />
<rect x="1000.25" y="339.472" width="16" height="6.720000000000001" fill="#fff" />
<text x="1008.25" y="346.024" font-size="8.4" fill="#111" stroke="#111" stroke-width="0.3" text-anchor="middle" textLength="15" lengthAdjust="spacingAndGlyphs">3.00</text>
<circle cx="1042.0" cy="343" r="1.7" fill="#f2ee00" />
<line x1="503.5" y1="347.7" x2="1047.5" y2="347.7" stroke="#222" stroke-width="1.2" />
<text x="776" y="345.5" font-size="22.5" fill="#222" text-anchor="middle" font-family="DejaVu Sans Light, DejaVu Sans, sans-serif" font-weight="200" transform="rotate(0 776 345.5)" textLength="56" lengthAdjust="spacingAndGlyphs">24.00</text>
<line x1="504.5" y1="766.3" x2="1044.0" y2="766.3" stroke="#35595c" stroke-width="1.3" />
<circle cx="506.5" cy="766.3" r="1.7" fill="#f2ee00" />
<circle cx="1042.0" cy="766.3" r="1.7" fill="#f2ee00" />
<rect x="761.0" y="762.7719999999999" width="20" height="6.720000000000001" fill="#fff" />
<text x="771" y="769.324" font-size="8.4" fill="#111" stroke="#111" stroke-width="0.3" text-anchor="middle" textLength="19" lengthAdjust="spacingAndGlyphs">23.80</text>
<line x1="504.5" y1="747.5" x2="1044.0" y2="747.5" stroke="#35595c" stroke-width="1.3" />
<circle cx="506.5" cy="747.5" r="1.7" fill="#f2ee00" />
<rect x="521.0" y="743.972" width="16" height="6.720000000000001" fill="#fff" />
<text x="529.0" y="750.524" font-size="8.4" fill="#111" stroke="#111" stroke-width="0.3" text-anchor="middle" textLength="15" lengthAdjust="spacingAndGlyphs">2.00</text>
<circle cx="551.5" cy="747.5" r="1.7" fill="#f2ee00" />
<rect x="566.0" y="743.972" width="16" height="6.720000000000001" fill="#fff" />
<text x="574.0" y="750.524" font-size="8.4" fill="#111" stroke="#111" stroke-width="0.3" text-anchor="middle" textLength="15" lengthAdjust="spacingAndGlyphs">2.00</text>
<circle cx="596.5" cy="747.5" r="1.7" fill="#f2ee00" />
<rect x="604.1375" y="743.972" width="16" height="6.720000000000001" fill="#fff" />
<text x="612.1375" y="750.524" font-size="8.4" fill="#111" stroke="#111" stroke-width="0.3" text-anchor="middle" textLength="15" lengthAdjust="spacingAndGlyphs">1.39</text>
<circle cx="627.775" cy="747.5" r="1.7" fill="#f2ee00" />
<text x="634.6375" y="750.524" font-size="8.4" fill="#111" stroke="#111" stroke-width="0.3" text-anchor="middle" textLength="13" lengthAdjust="spacingAndGlyphs">0.61</text>
<circle cx="641.5" cy="747.5" r="1.7" fill="#f2ee00" />
<rect x="656.0" y="743.972" width="16" height="6.720000000000001" fill="#fff" />
<text x="664.0" y="750.524" font-size="8.4" fill="#111" stroke="#111" stroke-width="0.3" text-anchor="middle" textLength="15" lengthAdjust="spacingAndGlyphs">2.00</text>
<circle cx="686.5" cy="747.5" r="1.7" fill="#f2ee00" />
<rect x="687.275" y="743.972" width="16" height="6.720000000000001" fill="#fff" />
<text x="695.275" y="750.524" font-size="8.4" fill="#111" stroke="#111" stroke-width="0.3" text-anchor="middle" textLength="15" lengthAdjust="spacingAndGlyphs">0.78</text>
<circle cx="704.05" cy="747.5" r="1.7" fill="#f2ee00" />
<rect x="704.15" y="743.972" width="16" height="6.720000000000001" fill="#fff" />
<text x="712.15" y="750.524" font-size="8.4" fill="#111" stroke="#111" stroke-width="0.3" text-anchor="middle" textLength="15" lengthAdjust="spacingAndGlyphs">0.72</text>
<circle cx="720.25" cy="747.5" r="1.7" fill="#f2ee00" />
<rect x="725.8625" y="743.972" width="16" height="6.720000000000001" fill="#fff" />
<text x="733.8625" y="750.524" font-size="8.4" fill="#111" stroke="#111" stroke-width="0.3" text-anchor="middle" textLength="15" lengthAdjust="spacingAndGlyphs">1.21</text>
<circle cx="747.475" cy="747.5" r="1.7" fill="#f2ee00" />
<text x="754.1125" y="750.524" font-size="8.4" fill="#111" stroke="#111" stroke-width="0.3" text-anchor="middle" textLength="13" lengthAdjust="spacingAndGlyphs">0.59</text>
<circle cx="760.75" cy="747.5" r="1.7" fill="#f2ee00" />
<rect x="769.625" y="743.972" width="16" height="6.720000000000001" fill="#fff" />
<text x="777.625" y="750.524" font-size="8.4" fill="#111" stroke="#111" stroke-width="0.3" text-anchor="middle" textLength="15" lengthAdjust="spacingAndGlyphs">1.50</text>
<circle cx="794.5" cy="747.5" r="1.7" fill="#f2ee00" />
<rect x="830.375" y="743.972" width="16" height="6.720000000000001" fill="#fff" />
<text x="838.375" y="750.524" font-size="8.4" fill="#111" stroke="#111" stroke-width="0.3" text-anchor="middle" textLength="15" lengthAdjust="spacingAndGlyphs">3.90</text>
<circle cx="882.25" cy="747.5" r="1.7" fill="#f2ee00" />
<rect x="900.125" y="743.972" width="16" height="6.720000000000001" fill="#fff" />
<text x="908.125" y="750.524" font-size="8.4" fill="#111" stroke="#111" stroke-width="0.3" text-anchor="middle" textLength="15" lengthAdjust="spacingAndGlyphs">2.30</text>
<circle cx="934.0" cy="747.5" r="1.7" fill="#f2ee00" />
<rect x="940.625" y="743.972" width="16" height="6.720000000000001" fill="#fff" />
<text x="948.625" y="750.524" font-size="8.4" fill="#111" stroke="#111" stroke-width="0.3" text-anchor="middle" textLength="15" lengthAdjust="spacingAndGlyphs">1.30</text>
<circle cx="963.25" cy="747.5" r="1.7" fill="#f2ee00" />
<text x="968.875" y="750.524" font-size="8.4" fill="#111" stroke="#111" stroke-width="0.3" text-anchor="middle" textLength="13" lengthAdjust="spacingAndGlyphs">0.50</text>
<circle cx="974.5" cy="747.5" r="1.7" fill="#f2ee00" />
<rect x="1000.25" y="743.972" width="16" height="6.720000000000001" fill="#fff" />
<text x="1008.25" y="750.524" font-size="8.4" fill="#111" stroke="#111" stroke-width="0.3" text-anchor="middle" textLength="15" lengthAdjust="spacingAndGlyphs">3.00</text>
<circle cx="1042.0" cy="747.5" r="1.7" fill="#f2ee00" />
<line x1="503.5" y1="746" x2="1047.5" y2="746" stroke="#222" stroke-width="1.2" />
<text x="776" y="743.5" font-size="22.5" fill="#222" text-anchor="middle" font-family="DejaVu Sans Light, DejaVu Sans, sans-serif" font-weight="200" transform="rotate(0 776 743.5)" textLength="56" lengthAdjust="spacingAndGlyphs">24.00</text>
<line x1="505" y1="347.7" x2="505" y2="386" stroke="#222" stroke-width="1.2" />
<line x1="1046.5" y1="347.7" x2="1046.5" y2="400" stroke="#222" stroke-width="1.2" />
<line x1="505" y1="719" x2="505" y2="746" stroke="#222" stroke-width="1.2" />
<line x1="1046.5" y1="719" x2="1046.5" y2="746" stroke="#222" stroke-width="1.2" />
<path d="M502 350 L506 346" fill="none" stroke="#222" stroke-width="1.2" />
<path d="M502 744 L506 748" fill="none" stroke="#222" stroke-width="1.2" />
<path d="M1045 350 L1049 346" fill="none" stroke="#222" stroke-width="1.2" />
<path d="M1045 744 L1049 748" fill="none" stroke="#222" stroke-width="1.2" />
<line x1="441.8" y1="386" x2="441.8" y2="719.2" stroke="#35595c" stroke-width="1.3" />
<circle cx="441.8" cy="388" r="1.7" fill="#f2ee00" />
<circle cx="441.8" cy="717.2" r="1.7" fill="#f2ee00" />
<line x1="461.3" y1="386" x2="461.3" y2="719.2" stroke="#35595c" stroke-width="1.3" />
<circle cx="461.3" cy="388" r="1.7" fill="#f2ee00" />
<rect x="453.3" y="432.072" width="16" height="6.720000000000001" fill="#fff" transform="rotate(-90 461.3 435.6)"/>
<text x="461.3" y="438.624" font-size="8.4" fill="#111" stroke="#111" stroke-width="0.3" text-anchor="middle" textLength="15" lengthAdjust="spacingAndGlyphs" transform="rotate(-90 461.3 435.6)">4.21</text>
<circle cx="461.3" cy="483.2" r="1.7" fill="#f2ee00" />
<text x="461.3" y="490.82399999999996" font-size="8.4" fill="#111" stroke="#111" stroke-width="0.3" text-anchor="middle" textLength="15" lengthAdjust="spacingAndGlyphs" transform="rotate(-90 461.3 487.79999999999995)">0.43</text>
<circle cx="461.3" cy="492.4" r="1.7" fill="#f2ee00" />
<rect x="453.3" y="505.87199999999996" width="16" height="6.720000000000001" fill="#fff" transform="rotate(-90 461.3 509.4)"/>
<text x="461.3" y="512.424" font-size="8.4" fill="#111" stroke="#111" stroke-width="0.3" text-anchor="middle" textLength="15" lengthAdjust="spacingAndGlyphs" transform="rotate(-90 461.3 509.4)">1.50</text>
<circle cx="461.3" cy="526.4" r="1.7" fill="#f2ee00" />
<text x="461.3" y="532.6239999999999" font-size="8.4" fill="#111" stroke="#111" stroke-width="0.3" text-anchor="middle" textLength="15" lengthAdjust="spacingAndGlyphs" transform="rotate(-90 461.3 529.5999999999999)">0.20</text>
<circle cx="461.3" cy="532.8" r="1.7" fill="#f2ee00" />
<text x="461.3" y="540.324" font-size="8.4" fill="#111" stroke="#111" stroke-width="0.3" text-anchor="middle" textLength="15" lengthAdjust="spacingAndGlyphs" transform="rotate(-90 461.3 537.3)">0.50</text>
<circle cx="461.3" cy="541.8" r="1.7" fill="#f2ee00" />
<rect x="453.3" y="568.2719999999999" width="16" height="6.720000000000001" fill="#fff" transform="rotate(-90 461.3 571.8)"/>
<text x="461.3" y="574.824" font-size="8.4" fill="#111" stroke="#111" stroke-width="0.3" text-anchor="middle" textLength="15" lengthAdjust="spacingAndGlyphs" transform="rotate(-90 461.3 571.8)">1.32</text>
<circle cx="461.3" cy="582.3" r="1.7" fill="#f2ee00" />
<rect x="453.3" y="586.8219999999999" width="16" height="6.720000000000001" fill="#fff" transform="rotate(-90 461.3 590.3499999999999)"/>
<text x="461.3" y="593.3739999999999" font-size="8.4" fill="#111" stroke="#111" stroke-width="0.3" text-anchor="middle" textLength="15" lengthAdjust="spacingAndGlyphs" transform="rotate(-90 461.3 590.3499999999999)">0.70</text>
<circle cx="461.3" cy="598.4" r="1.7" fill="#f2ee00" />
<text x="461.3" y="606.974" font-size="8.4" fill="#111" stroke="#111" stroke-width="0.3" text-anchor="middle" textLength="15" lengthAdjust="spacingAndGlyphs" transform="rotate(-90 461.3 603.95)">0.50</text>
<circle cx="461.3" cy="609.5" r="1.7" fill="#f2ee00" />
<rect x="453.3" y="620.622" width="16" height="6.720000000000001" fill="#fff" transform="rotate(-90 461.3 624.15)"/>
<text x="461.3" y="627.174" font-size="8.4" fill="#111" stroke="#111" stroke-width="0.3" text-anchor="middle" textLength="15" lengthAdjust="spacingAndGlyphs" transform="rotate(-90 461.3 624.15)">1.30</text>
<circle cx="461.3" cy="638.8" r="1.7" fill="#f2ee00" />
<rect x="453.3" y="652.0719999999999" width="16" height="6.720000000000001" fill="#fff" transform="rotate(-90 461.3 655.5999999999999)"/>
<text x="461.3" y="658.6239999999999" font-size="8.4" fill="#111" stroke="#111" stroke-width="0.3" text-anchor="middle" textLength="15" lengthAdjust="spacingAndGlyphs" transform="rotate(-90 461.3 655.5999999999999)">1.50</text>
<circle cx="461.3" cy="672.4" r="1.7" fill="#f2ee00" />
<rect x="453.3" y="691.2719999999999" width="16" height="6.720000000000001" fill="#fff" transform="rotate(-90 461.3 694.8)"/>
<text x="461.3" y="697.824" font-size="8.4" fill="#111" stroke="#111" stroke-width="0.3" text-anchor="middle" textLength="15" lengthAdjust="spacingAndGlyphs" transform="rotate(-90 461.3 694.8)">2.00</text>
<circle cx="461.3" cy="717.2" r="1.7" fill="#f2ee00" />
<line x1="1094.2" y1="386" x2="1094.2" y2="719.2" stroke="#35595c" stroke-width="1.3" />
<circle cx="1094.2" cy="388" r="1.7" fill="#f2ee00" />
<circle cx="1094.2" cy="717.2" r="1.7" fill="#f2ee00" />
<line x1="1075.2" y1="386" x2="1075.2" y2="719.2" stroke="#35595c" stroke-width="1.3" />
<circle cx="1075.2" cy="388" r="1.7" fill="#f2ee00" />
<rect x="1067.2" y="432.072" width="16" height="6.720000000000001" fill="#fff" transform="rotate(-90 1075.2 435.6)"/>
<text x="1075.2" y="438.624" font-size="8.4" fill="#111" stroke="#111" stroke-width="0.3" text-anchor="middle" textLength="15" lengthAdjust="spacingAndGlyphs" transform="rotate(-90 1075.2 435.6)">4.21</text>
<circle cx="1075.2" cy="483.2" r="1.7" fill="#f2ee00" />
<text x="1075.2" y="490.82399999999996" font-size="8.4" fill="#111" stroke="#111" stroke-width="0.3" text-anchor="middle" textLength="15" lengthAdjust="spacingAndGlyphs" transform="rotate(-90 1075.2 487.79999999999995)">0.43</text>
<circle cx="1075.2" cy="492.4" r="1.7" fill="#f2ee00" />
<rect x="1067.2" y="505.87199999999996" width="16" height="6.720000000000001" fill="#fff" transform="rotate(-90 1075.2 509.4)"/>
<text x="1075.2" y="512.424" font-size="8.4" fill="#111" stroke="#111" stroke-width="0.3" text-anchor="middle" textLength="15" lengthAdjust="spacingAndGlyphs" transform="rotate(-90 1075.2 509.4)">1.50</text>
<circle cx="1075.2" cy="526.4" r="1.7" fill="#f2ee00" />
<text x="1075.2" y="532.6239999999999" font-size="8.4" fill="#111" stroke="#111" stroke-width="0.3" text-anchor="middle" textLength="15" lengthAdjust="spacingAndGlyphs" transform="rotate(-90 1075.2 529.5999999999999)">0.20</text>
<circle cx="1075.2" cy="532.8" r="1.7" fill="#f2ee00" />
<text x="1075.2" y="540.324" font-size="8.4" fill="#111" stroke="#111" stroke-width="0.3" text-anchor="middle" textLength="15" lengthAdjust="spacingAndGlyphs" transform="rotate(-90 1075.2 537.3)">0.50</text>
<circle cx="1075.2" cy="541.8" r="1.7" fill="#f2ee00" />
<rect x="1067.2" y="568.2719999999999" width="16" height="6.720000000000001" fill="#fff" transform="rotate(-90 1075.2 571.8)"/>
<text x="1075.2" y="574.824" font-size="8.4" fill="#111" stroke="#111" stroke-width="0.3" text-anchor="middle" textLength="15" lengthAdjust="spacingAndGlyphs" transform="rotate(-90 1075.2 571.8)">1.32</text>
<circle cx="1075.2" cy="582.3" r="1.7" fill="#f2ee00" />
<rect x="1067.2" y="586.8219999999999" width="16" height="6.720000000000001" fill="#fff" transform="rotate(-90 1075.2 590.3499999999999)"/>
<text x="1075.2" y="593.3739999999999" font-size="8.4" fill="#111" stroke="#111" stroke-width="0.3" text-anchor="middle" textLength="15" lengthAdjust="spacingAndGlyphs" transform="rotate(-90 1075.2 590.3499999999999)">0.70</text>
<circle cx="1075.2" cy="598.4" r="1.7" fill="#f2ee00" />
<text x="1075.2" y="606.974" font-size="8.4" fill="#111" stroke="#111" stroke-width="0.3" text-anchor="middle" textLength="15" lengthAdjust="spacingAndGlyphs" transform="rotate(-90 1075.2 603.95)">0.50</text>
<circle cx="1075.2" cy="609.5" r="1.7" fill="#f2ee00" />
<rect x="1067.2" y="620.622" width="16" height="6.720000000000001" fill="#fff" transform="rotate(-90 1075.2 624.15)"/>
<text x="1075.2" y="627.174" font-size="8.4" fill="#111" stroke="#111" stroke-width="0.3" text-anchor="middle" textLength="15" lengthAdjust="spacingAndGlyphs" transform="rotate(-90 1075.2 624.15)">1.30</text>
<circle cx="1075.2" cy="638.8" r="1.7" fill="#f2ee00" />
<rect x="1067.2" y="652.0719999999999" width="16" height="6.720000000000001" fill="#fff" transform="rotate(-90 1075.2 655.5999999999999)"/>
<text x="1075.2" y="658.6239999999999" font-size="8.4" fill="#111" stroke="#111" stroke-width="0.3" text-anchor="middle" textLength="15" lengthAdjust="spacingAndGlyphs" transform="rotate(-90 1075.2 655.5999999999999)">1.50</text>
<circle cx="1075.2" cy="672.4" r="1.7" fill="#f2ee00" />
<rect x="1067.2" y="691.2719999999999" width="16" height="6.720000000000001" fill="#fff" transform="rotate(-90 1075.2 694.8)"/>
<text x="1075.2" y="697.824" font-size="8.4" fill="#111" stroke="#111" stroke-width="0.3" text-anchor="middle" textLength="15" lengthAdjust="spacingAndGlyphs" transform="rotate(-90 1075.2 694.8)">2.00</text>
<circle cx="1075.2" cy="717.2" r="1.7" fill="#f2ee00" />
<rect x="431.8" y="544.472" width="20" height="6.720000000000001" fill="#fff" transform="rotate(-90 441.8 548)"/>
<text x="441.8" y="551.024" font-size="8.4" fill="#111" stroke="#111" stroke-width="0.3" text-anchor="middle" textLength="19" lengthAdjust="spacingAndGlyphs" transform="rotate(-90 441.8 548)">14.64</text>
<rect x="1084.2" y="544.472" width="20" height="6.720000000000001" fill="#fff" transform="rotate(-90 1094.2 548)"/>
<text x="1094.2" y="551.024" font-size="8.4" fill="#111" stroke="#111" stroke-width="0.3" text-anchor="middle" textLength="19" lengthAdjust="spacingAndGlyphs" transform="rotate(-90 1094.2 548)">14.64</text>
<line x1="484.3" y1="386" x2="484.3" y2="720" stroke="#222" stroke-width="1.2" />
<line x1="482" y1="386" x2="506" y2="386" stroke="#222" stroke-width="1.2" />
<line x1="482" y1="719" x2="506" y2="719" stroke="#222" stroke-width="1.2" />
<text x="482" y="540" font-size="24" fill="#222" text-anchor="middle" font-family="DejaVu Sans Light, DejaVu Sans, sans-serif" font-weight="200" transform="rotate(-90 482 540)" textLength="75" lengthAdjust="spacingAndGlyphs">14.86</text>
<line x1="1079" y1="386.7" x2="1079" y2="722" stroke="#222" stroke-width="1.2" />
<line x1="1046" y1="722" x2="1081" y2="722" stroke="#222" stroke-width="1.1" />
<text x="1076.5" y="556" font-size="24" fill="#222" text-anchor="middle" font-family="DejaVu Sans Light, DejaVu Sans, sans-serif" font-weight="200" transform="rotate(-90 1076.5 556)" textLength="75" lengthAdjust="spacingAndGlyphs">15.00</text>
<line x1="1057.5" y1="386.7" x2="1057.5" y2="454" stroke="#222" stroke-width="1.1" />
<line x1="1044" y1="386.7" x2="1081" y2="386.7" stroke="#222" stroke-width="1.1" />
<line x1="1044" y1="454" x2="1061" y2="454" stroke="#222" stroke-width="1.1" />
<text x="1062.5" y="423" font-size="21" fill="#222" text-anchor="middle" font-family="DejaVu Sans Light, DejaVu Sans, sans-serif" font-weight="200" transform="rotate(90 1062.5 423)" textLength="43" lengthAdjust="spacingAndGlyphs">3.00</text>
<line x1="1059" y1="453" x2="1059" y2="507" stroke="#222" stroke-width="1.1" />
<line x1="1044" y1="507" x2="1061" y2="507" stroke="#222" stroke-width="1.1" />
<text x="1044" y="480" font-size="19" fill="#222" text-anchor="middle" font-family="DejaVu Sans Light, DejaVu Sans, sans-serif" font-weight="200" transform="rotate(90 1044 480)" textLength="44" lengthAdjust="spacingAndGlyphs">2.54</text>
<path d="M988.0 392.5 L1042.8 446.4" fill="none" stroke="#222" stroke-width="1.1" />
<path d="M992.0 371.0 L1057.5 437.6" fill="none" stroke="#222" stroke-width="1.1" />
<line x1="975" y1="372.2" x2="1046.5" y2="372.2" stroke="#222" stroke-width="1.1" />
<line x1="1046.5" y1="347" x2="1046.5" y2="374" stroke="#222" stroke-width="1.0" />
<circle cx="977" cy="372.2" r="1" fill="#222" />
<circle cx="1045.5" cy="372.2" r="1" fill="#222" />
<path d="M980.0 384.0 L996.0 368.0" fill="none" stroke="#222" stroke-width="1.0" />
<path d="M1040.0 452.0 L1062.0 432.0" fill="none" stroke="#222" stroke-width="1.0" />
<text x="1017" y="422" font-size="21" fill="#222" text-anchor="middle" font-family="DejaVu Sans Light, DejaVu Sans, sans-serif" font-weight="200" transform="rotate(43 1017 422)" textLength="46" lengthAdjust="spacingAndGlyphs">3.39</text>
<text x="1031.5" y="404" font-size="21" fill="#222" text-anchor="middle" font-family="DejaVu Sans Light, DejaVu Sans, sans-serif" font-weight="200" transform="rotate(43 1031.5 404)" textLength="48" lengthAdjust="spacingAndGlyphs">4.25</text>
<text x="1011" y="369" font-size="22" fill="#222" text-anchor="middle" font-family="DejaVu Sans Light, DejaVu Sans, sans-serif" font-weight="200" transform="rotate(0 1011 369)" textLength="42" lengthAdjust="spacingAndGlyphs">3.00</text>
<path d="M506.5 275.2 L508.9 277.8 L512.4 277.6 L512.2 281.1 L514.8 283.5 L512.2 285.9 L512.4 289.4 L508.9 289.2 L506.5 291.8 L504.1 289.2 L500.6 289.4 L500.8 285.9 L498.2 283.5 L500.8 281.1 L500.6 277.6 L504.1 277.8 Z" fill="#a8a838" stroke="#6e6e14" stroke-width="1" />
<circle cx="506.5" cy="283.5" r="5.4" fill="#ffffff" stroke="#2f6a78" stroke-width="1.2" />
<path d="M506.5 799.0 L508.9 801.6 L512.4 801.4 L512.2 804.9 L514.8 807.3 L512.2 809.7 L512.4 813.2 L508.9 813.0 L506.5 815.6 L504.1 813.0 L500.6 813.2 L500.8 809.7 L498.2 807.3 L500.8 804.9 L500.6 801.4 L504.1 801.6 Z" fill="#a8a838" stroke="#6e6e14" stroke-width="1" />
<circle cx="506.5" cy="807.3" r="5.4" fill="#ffffff" stroke="#2f6a78" stroke-width="1.2" />
<text x="510.5" y="283" font-size="6" fill="#111" >·</text>
<path d="M551.5 275.2 L553.9 277.8 L557.4 277.6 L557.2 281.1 L559.8 283.5 L557.2 285.9 L557.4 289.4 L553.9 289.2 L551.5 291.8 L549.1 289.2 L545.6 289.4 L545.8 285.9 L543.2 283.5 L545.8 281.1 L545.6 277.6 L549.1 277.8 Z" fill="#a8a838" stroke="#6e6e14" stroke-width="1" />
<circle cx="551.5" cy="283.5" r="5.4" fill="#ffffff" stroke="#2f6a78" stroke-width="1.2" />
<path d="M551.5 799.0 L553.9 801.6 L557.4 801.4 L557.2 804.9 L559.8 807.3 L557.2 809.7 L557.4 813.2 L553.9 813.0 L551.5 815.6 L549.1 813.0 L545.6 813.2 L545.8 809.7 L543.2 807.3 L545.8 804.9 L545.6 801.4 L549.1 801.6 Z" fill="#a8a838" stroke="#6e6e14" stroke-width="1" />
<circle cx="551.5" cy="807.3" r="5.4" fill="#ffffff" stroke="#2f6a78" stroke-width="1.2" />
<text x="555.5" y="283" font-size="6" fill="#111" >·</text>
<path d="M596.5 275.2 L598.9 277.8 L602.4 277.6 L602.2 281.1 L604.8 283.5 L602.2 285.9 L602.4 289.4 L598.9 289.2 L596.5 291.8 L594.1 289.2 L590.6 289.4 L590.8 285.9 L588.2 283.5 L590.8 281.1 L590.6 277.6 L594.1 277.8 Z" fill="#a8a838" stroke="#6e6e14" stroke-width="1" />
<circle cx="596.5" cy="283.5" r="5.4" fill="#ffffff" stroke="#2f6a78" stroke-width="1.2" />
<path d="M596.5 799.0 L598.9 801.6 L602.4 801.4 L602.2 804.9 L604.8 807.3 L602.2 809.7 L602.4 813.2 L598.9 813.0 L596.5 815.6 L594.1 813.0 L590.6 813.2 L590.8 809.7 L588.2 807.3 L590.8 804.9 L590.6 801.4 L594.1 801.6 Z" fill="#a8a838" stroke="#6e6e14" stroke-width="1" />
<circle cx="596.5" cy="807.3" r="5.4" fill="#ffffff" stroke="#2f6a78" stroke-width="1.2" />
<text x="600.5" y="283" font-size="6" fill="#111" >·</text>
<path d="M627.8 275.2 L630.1 277.8 L633.6 277.6 L633.5 281.1 L636.1 283.5 L633.5 285.9 L633.6 289.4 L630.1 289.2 L627.8 291.8 L625.4 289.2 L621.9 289.4 L622.0 285.9 L619.5 283.5 L622.0 281.1 L621.9 277.6 L625.4 277.8 Z" fill="#a8a838" stroke="#6e6e14" stroke-width="1" />
<circle cx="627.775" cy="283.5" r="5.4" fill="#ffffff" stroke="#2f6a78" stroke-width="1.2" />
<path d="M627.8 799.0 L630.1 801.6 L633.6 801.4 L633.5 804.9 L636.1 807.3 L633.5 809.7 L633.6 813.2 L630.1 813.0 L627.8 815.6 L625.4 813.0 L621.9 813.2 L622.0 809.7 L619.5 807.3 L622.0 804.9 L621.9 801.4 L625.4 801.6 Z" fill="#a8a838" stroke="#6e6e14" stroke-width="1" />
<circle cx="627.775" cy="807.3" r="5.4" fill="#ffffff" stroke="#2f6a78" stroke-width="1.2" />
<text x="631.775" y="283" font-size="6" fill="#111" >·</text>
<path d="M641.5 275.2 L643.9 277.8 L647.4 277.6 L647.2 281.1 L649.8 283.5 L647.2 285.9 L647.4 289.4 L643.9 289.2 L641.5 291.8 L639.1 289.2 L635.6 289.4 L635.8 285.9 L633.2 283.5 L635.8 281.1 L635.6 277.6 L639.1 277.8 Z" fill="#a8a838" stroke="#6e6e14" stroke-width="1" />
<circle cx="641.5" cy="283.5" r="5.4" fill="#ffffff" stroke="#2f6a78" stroke-width="1.2" />
<path d="M641.5 799.0 L643.9 801.6 L647.4 801.4 L647.2 804.9 L649.8 807.3 L647.2 809.7 L647.4 813.2 L643.9 813.0 L641.5 815.6 L639.1 813.0 L635.6 813.2 L635.8 809.7 L633.2 807.3 L635.8 804.9 L635.6 801.4 L639.1 801.6 Z" fill="#a8a838" stroke="#6e6e14" stroke-width="1" />
<circle cx="641.5" cy="807.3" r="5.4" fill="#ffffff" stroke="#2f6a78" stroke-width="1.2" />
<text x="645.5" y="283" font-size="6" fill="#111" >·</text>
<path d="M686.5 275.2 L688.9 277.8 L692.4 277.6 L692.2 281.1 L694.8 283.5 L692.2 285.9 L692.4 289.4 L688.9 289.2 L686.5 291.8 L684.1 289.2 L680.6 289.4 L680.8 285.9 L678.2 283.5 L680.8 281.1 L680.6 277.6 L684.1 277.8 Z" fill="#a8a838" stroke="#6e6e14" stroke-width="1" />
<circle cx="686.5" cy="283.5" r="5.4" fill="#ffffff" stroke="#2f6a78" stroke-width="1.2" />
<path d="M686.5 799.0 L688.9 801.6 L692.4 801.4 L692.2 804.9 L694.8 807.3 L692.2 809.7 L692.4 813.2 L688.9 813.0 L686.5 815.6 L684.1 813.0 L680.6 813.2 L680.8 809.7 L678.2 807.3 L680.8 804.9 L680.6 801.4 L684.1 801.6 Z" fill="#a8a838" stroke="#6e6e14" stroke-width="1" />
<circle cx="686.5" cy="807.3" r="5.4" fill="#ffffff" stroke="#2f6a78" stroke-width="1.2" />
<text x="690.5" y="283" font-size="6" fill="#111" >·</text>
<path d="M704.0 275.2 L706.4 277.8 L709.9 277.6 L709.8 281.1 L712.3 283.5 L709.8 285.9 L709.9 289.4 L706.4 289.2 L704.0 291.8 L701.7 289.2 L698.2 289.4 L698.3 285.9 L695.8 283.5 L698.3 281.1 L698.2 277.6 L701.7 277.8 Z" fill="#a8a838" stroke="#6e6e14" stroke-width="1" />
<circle cx="704.05" cy="283.5" r="5.4" fill="#ffffff" stroke="#2f6a78" stroke-width="1.2" />
<path d="M704.0 799.0 L706.4 801.6 L709.9 801.4 L709.8 804.9 L712.3 807.3 L709.8 809.7 L709.9 813.2 L706.4 813.0 L704.0 815.6 L701.7 813.0 L698.2 813.2 L698.3 809.7 L695.8 807.3 L698.3 804.9 L698.2 801.4 L701.7 801.6 Z" fill="#a8a838" stroke="#6e6e14" stroke-width="1" />
<circle cx="704.05" cy="807.3" r="5.4" fill="#ffffff" stroke="#2f6a78" stroke-width="1.2" />
<text x="708.05" y="283" font-size="6" fill="#111" >·</text>
<path d="M720.2 275.2 L722.6 277.8 L726.1 277.6 L726.0 281.1 L728.5 283.5 L726.0 285.9 L726.1 289.4 L722.6 289.2 L720.2 291.8 L717.9 289.2 L714.4 289.4 L714.5 285.9 L712.0 283.5 L714.5 281.1 L714.4 277.6 L717.9 277.8 Z" fill="#a8a838" stroke="#6e6e14" stroke-width="1" />
<circle cx="720.25" cy="283.5" r="5.4" fill="#ffffff" stroke="#2f6a78" stroke-width="1.2" />
<path d="M720.2 799.0 L722.6 801.6 L726.1 801.4 L726.0 804.9 L728.5 807.3 L726.0 809.7 L726.1 813.2 L722.6 813.0 L720.2 815.6 L717.9 813.0 L714.4 813.2 L714.5 809.7 L712.0 807.3 L714.5 804.9 L714.4 801.4 L717.9 801.6 Z" fill="#a8a838" stroke="#6e6e14" stroke-width="1" />
<circle cx="720.25" cy="807.3" r="5.4" fill="#ffffff" stroke="#2f6a78" stroke-width="1.2" />
<text x="724.25" y="283" font-size="6" fill="#111" >·</text>
<path d="M747.5 275.2 L749.8 277.8 L753.3 277.6 L753.2 281.1 L755.8 283.5 L753.2 285.9 L753.3 289.4 L749.8 289.2 L747.5 291.8 L745.1 289.2 L741.6 289.4 L741.7 285.9 L739.2 283.5 L741.7 281.1 L741.6 277.6 L745.1 277.8 Z" fill="#a8a838" stroke="#6e6e14" stroke-width="1" />
<circle cx="747.475" cy="283.5" r="5.4" fill="#ffffff" stroke="#2f6a78" stroke-width="1.2" />
<path d="M747.5 799.0 L749.8 801.6 L753.3 801.4 L753.2 804.9 L755.8 807.3 L753.2 809.7 L753.3 813.2 L749.8 813.0 L747.5 815.6 L745.1 813.0 L741.6 813.2 L741.7 809.7 L739.2 807.3 L741.7 804.9 L741.6 801.4 L745.1 801.6 Z" fill="#a8a838" stroke="#6e6e14" stroke-width="1" />
<circle cx="747.475" cy="807.3" r="5.4" fill="#ffffff" stroke="#2f6a78" stroke-width="1.2" />
<text x="751.475" y="283" font-size="6" fill="#111" >·</text>
<path d="M760.8 275.2 L763.1 277.8 L766.6 277.6 L766.5 281.1 L769.0 283.5 L766.5 285.9 L766.6 289.4 L763.1 289.2 L760.8 291.8 L758.4 289.2 L754.9 289.4 L755.0 285.9 L752.5 283.5 L755.0 281.1 L754.9 277.6 L758.4 277.8 Z" fill="#a8a838" stroke="#6e6e14" stroke-width="1" />
<circle cx="760.75" cy="283.5" r="5.4" fill="#ffffff" stroke="#2f6a78" stroke-width="1.2" />
<path d="M760.8 799.0 L763.1 801.6 L766.6 801.4 L766.5 804.9 L769.0 807.3 L766.5 809.7 L766.6 813.2 L763.1 813.0 L760.8 815.6 L758.4 813.0 L754.9 813.2 L755.0 809.7 L752.5 807.3 L755.0 804.9 L754.9 801.4 L758.4 801.6 Z" fill="#a8a838" stroke="#6e6e14" stroke-width="1" />
<circle cx="760.75" cy="807.3" r="5.4" fill="#ffffff" stroke="#2f6a78" stroke-width="1.2" />
<text x="764.75" y="283" font-size="6" fill="#111" >·</text>
<path d="M794.5 275.2 L796.9 277.8 L800.4 277.6 L800.2 281.1 L802.8 283.5 L800.2 285.9 L800.4 289.4 L796.9 289.2 L794.5 291.8 L792.1 289.2 L788.6 289.4 L788.8 285.9 L786.2 283.5 L788.8 281.1 L788.6 277.6 L792.1 277.8 Z" fill="#a8a838" stroke="#6e6e14" stroke-width="1" />
<circle cx="794.5" cy="283.5" r="5.4" fill="#ffffff" stroke="#2f6a78" stroke-width="1.2" />
<path d="M794.5 799.0 L796.9 801.6 L800.4 801.4 L800.2 804.9 L802.8 807.3 L800.2 809.7 L800.4 813.2 L796.9 813.0 L794.5 815.6 L792.1 813.0 L788.6 813.2 L788.8 809.7 L786.2 807.3 L788.8 804.9 L788.6 801.4 L792.1 801.6 Z" fill="#a8a838" stroke="#6e6e14" stroke-width="1" />
<circle cx="794.5" cy="807.3" r="5.4" fill="#ffffff" stroke="#2f6a78" stroke-width="1.2" />
<text x="798.5" y="283" font-size="6" fill="#111" >·</text>
<path d="M882.2 275.2 L884.6 277.8 L888.1 277.6 L888.0 281.1 L890.5 283.5 L888.0 285.9 L888.1 289.4 L884.6 289.2 L882.2 291.8 L879.9 289.2 L876.4 289.4 L876.5 285.9 L874.0 283.5 L876.5 281.1 L876.4 277.6 L879.9 277.8 Z" fill="#a8a838" stroke="#6e6e14" stroke-width="1" />
<circle cx="882.25" cy="283.5" r="5.4" fill="#ffffff" stroke="#2f6a78" stroke-width="1.2" />
<path d="M882.2 799.0 L884.6 801.6 L888.1 801.4 L888.0 804.9 L890.5 807.3 L888.0 809.7 L888.1 813.2 L884.6 813.0 L882.2 815.6 L879.9 813.0 L876.4 813.2 L876.5 809.7 L874.0 807.3 L876.5 804.9 L876.4 801.4 L879.9 801.6 Z" fill="#a8a838" stroke="#6e6e14" stroke-width="1" />
<circle cx="882.25" cy="807.3" r="5.4" fill="#ffffff" stroke="#2f6a78" stroke-width="1.2" />
<text x="886.25" y="283" font-size="6" fill="#111" >·</text>
<path d="M934.0 275.2 L936.4 277.8 L939.9 277.6 L939.7 281.1 L942.3 283.5 L939.7 285.9 L939.9 289.4 L936.4 289.2 L934.0 291.8 L931.6 289.2 L928.1 289.4 L928.3 285.9 L925.7 283.5 L928.3 281.1 L928.1 277.6 L931.6 277.8 Z" fill="#a8a838" stroke="#6e6e14" stroke-width="1" />
<circle cx="934.0" cy="283.5" r="5.4" fill="#ffffff" stroke="#2f6a78" stroke-width="1.2" />
<path d="M934.0 799.0 L936.4 801.6 L939.9 801.4 L939.7 804.9 L942.3 807.3 L939.7 809.7 L939.9 813.2 L936.4 813.0 L934.0 815.6 L931.6 813.0 L928.1 813.2 L928.3 809.7 L925.7 807.3 L928.3 804.9 L928.1 801.4 L931.6 801.6 Z" fill="#a8a838" stroke="#6e6e14" stroke-width="1" />
<circle cx="934.0" cy="807.3" r="5.4" fill="#ffffff" stroke="#2f6a78" stroke-width="1.2" />
<text x="938.0" y="283" font-size="6" fill="#111" >·</text>
<path d="M963.2 275.2 L965.6 277.8 L969.1 277.6 L969.0 281.1 L971.5 283.5 L969.0 285.9 L969.1 289.4 L965.6 289.2 L963.2 291.8 L960.9 289.2 L957.4 289.4 L957.5 285.9 L955.0 283.5 L957.5 281.1 L957.4 277.6 L960.9 277.8 Z" fill="#a8a838" stroke="#6e6e14" stroke-width="1" />
<circle cx="963.25" cy="283.5" r="5.4" fill="#ffffff" stroke="#2f6a78" stroke-width="1.2" />
<path d="M963.2 799.0 L965.6 801.6 L969.1 801.4 L969.0 804.9 L971.5 807.3 L969.0 809.7 L969.1 813.2 L965.6 813.0 L963.2 815.6 L960.9 813.0 L957.4 813.2 L957.5 809.7 L955.0 807.3 L957.5 804.9 L957.4 801.4 L960.9 801.6 Z" fill="#a8a838" stroke="#6e6e14" stroke-width="1" />
<circle cx="963.25" cy="807.3" r="5.4" fill="#ffffff" stroke="#2f6a78" stroke-width="1.2" />
<text x="967.25" y="283" font-size="6" fill="#111" >·</text>
<path d="M995.0 275.2 L997.4 277.8 L1000.9 277.6 L1000.7 281.1 L1003.3 283.5 L1000.7 285.9 L1000.9 289.4 L997.4 289.2 L995.0 291.8 L992.6 289.2 L989.1 289.4 L989.3 285.9 L986.7 283.5 L989.3 281.1 L989.1 277.6 L992.6 277.8 Z" fill="#a8a838" stroke="#6e6e14" stroke-width="1" />
<circle cx="995" cy="283.5" r="5.4" fill="#ffffff" stroke="#2f6a78" stroke-width="1.2" />
<path d="M995.0 799.0 L997.4 801.6 L1000.9 801.4 L1000.7 804.9 L1003.3 807.3 L1000.7 809.7 L1000.9 813.2 L997.4 813.0 L995.0 815.6 L992.6 813.0 L989.1 813.2 L989.3 809.7 L986.7 807.3 L989.3 804.9 L989.1 801.4 L992.6 801.6 Z" fill="#a8a838" stroke="#6e6e14" stroke-width="1" />
<circle cx="995" cy="807.3" r="5.4" fill="#ffffff" stroke="#2f6a78" stroke-width="1.2" />
<text x="999" y="283" font-size="6" fill="#111" >·</text>
<path d="M1042.0 275.2 L1044.4 277.8 L1047.9 277.6 L1047.7 281.1 L1050.3 283.5 L1047.7 285.9 L1047.9 289.4 L1044.4 289.2 L1042.0 291.8 L1039.6 289.2 L1036.1 289.4 L1036.3 285.9 L1033.7 283.5 L1036.3 281.1 L1036.1 277.6 L1039.6 277.8 Z" fill="#a8a838" stroke="#6e6e14" stroke-width="1" />
<circle cx="1042.0" cy="283.5" r="5.4" fill="#ffffff" stroke="#2f6a78" stroke-width="1.2" />
<path d="M1042.0 799.0 L1044.4 801.6 L1047.9 801.4 L1047.7 804.9 L1050.3 807.3 L1047.7 809.7 L1047.9 813.2 L1044.4 813.0 L1042.0 815.6 L1039.6 813.0 L1036.1 813.2 L1036.3 809.7 L1033.7 807.3 L1036.3 804.9 L1036.1 801.4 L1039.6 801.6 Z" fill="#a8a838" stroke="#6e6e14" stroke-width="1" />
<circle cx="1042.0" cy="807.3" r="5.4" fill="#ffffff" stroke="#2f6a78" stroke-width="1.2" />
<text x="1046.0" y="283" font-size="6" fill="#111" >·</text>
<path d="M414.0 379.7 L416.4 382.3 L419.9 382.1 L419.7 385.6 L422.3 388.0 L419.7 390.4 L419.9 393.9 L416.4 393.7 L414.0 396.3 L411.6 393.7 L408.1 393.9 L408.3 390.4 L405.7 388.0 L408.3 385.6 L408.1 382.1 L411.6 382.3 Z" fill="#a8a838" stroke="#6e6e14" stroke-width="1" />
<circle cx="414" cy="388" r="5.4" fill="#ffffff" stroke="#2f6a78" stroke-width="1.2" />
<text x="414" y="390.9" font-size="8.3" fill="#111" text-anchor="middle" stroke="#111" stroke-width="0.2">1</text>
<path d="M1121.5 379.7 L1123.9 382.3 L1127.4 382.1 L1127.2 385.6 L1129.8 388.0 L1127.2 390.4 L1127.4 393.9 L1123.9 393.7 L1121.5 396.3 L1119.1 393.7 L1115.6 393.9 L1115.8 390.4 L1113.2 388.0 L1115.8 385.6 L1115.6 382.1 L1119.1 382.3 Z" fill="#a8a838" stroke="#6e6e14" stroke-width="1" />
<circle cx="1121.5" cy="388" r="5.4" fill="#ffffff" stroke="#2f6a78" stroke-width="1.2" />
<text x="1121.5" y="390.9" font-size="8.3" fill="#111" text-anchor="middle" stroke="#111" stroke-width="0.2">1</text>
<path d="M414.0 461.0 L416.4 463.6 L419.9 463.4 L419.7 466.9 L422.3 469.3 L419.7 471.7 L419.9 475.2 L416.4 475.0 L414.0 477.6 L411.6 475.0 L408.1 475.2 L408.3 471.7 L405.7 469.3 L408.3 466.9 L408.1 463.4 L411.6 463.6 Z" fill="#a8a838" stroke="#6e6e14" stroke-width="1" />
<circle cx="414" cy="469.3" r="5.4" fill="#ffffff" stroke="#2f6a78" stroke-width="1.2" />
<text x="414" y="472.2" font-size="8.3" fill="#111" text-anchor="middle" stroke="#111" stroke-width="0.2">2</text>
<path d="M1121.5 461.0 L1123.9 463.6 L1127.4 463.4 L1127.2 466.9 L1129.8 469.3 L1127.2 471.7 L1127.4 475.2 L1123.9 475.0 L1121.5 477.6 L1119.1 475.0 L1115.6 475.2 L1115.8 471.7 L1113.2 469.3 L1115.8 466.9 L1115.6 463.4 L1119.1 463.6 Z" fill="#a8a838" stroke="#6e6e14" stroke-width="1" />
<circle cx="1121.5" cy="469.3" r="5.4" fill="#ffffff" stroke="#2f6a78" stroke-width="1.2" />
<text x="1121.5" y="472.2" font-size="8.3" fill="#111" text-anchor="middle" stroke="#111" stroke-width="0.2">2</text>
<path d="M414.0 484.1 L416.4 486.7 L419.9 486.5 L419.7 490.0 L422.3 492.4 L419.7 494.8 L419.9 498.3 L416.4 498.1 L414.0 500.7 L411.6 498.1 L408.1 498.3 L408.3 494.8 L405.7 492.4 L408.3 490.0 L408.1 486.5 L411.6 486.7 Z" fill="#a8a838" stroke="#6e6e14" stroke-width="1" />
<circle cx="414" cy="492.4" r="5.4" fill="#ffffff" stroke="#2f6a78" stroke-width="1.2" />
<text x="414" y="495.29999999999995" font-size="8.3" fill="#111" text-anchor="middle" stroke="#111" stroke-width="0.2">3</text>
<path d="M1121.5 484.1 L1123.9 486.7 L1127.4 486.5 L1127.2 490.0 L1129.8 492.4 L1127.2 494.8 L1127.4 498.3 L1123.9 498.1 L1121.5 500.7 L1119.1 498.1 L1115.6 498.3 L1115.8 494.8 L1113.2 492.4 L1115.8 490.0 L1115.6 486.5 L1119.1 486.7 Z" fill="#a8a838" stroke="#6e6e14" stroke-width="1" />
<circle cx="1121.5" cy="492.4" r="5.4" fill="#ffffff" stroke="#2f6a78" stroke-width="1.2" />
<text x="1121.5" y="495.29999999999995" font-size="8.3" fill="#111" text-anchor="middle" stroke="#111" stroke-width="0.2">3</text>
<path d="M414.0 504.1 L416.4 506.7 L419.9 506.5 L419.7 510.0 L422.3 512.4 L419.7 514.8 L419.9 518.3 L416.4 518.1 L414.0 520.7 L411.6 518.1 L408.1 518.3 L408.3 514.8 L405.7 512.4 L408.3 510.0 L408.1 506.5 L411.6 506.7 Z" fill="#a8a838" stroke="#6e6e14" stroke-width="1" />
<circle cx="414" cy="512.4" r="5.4" fill="#ffffff" stroke="#2f6a78" stroke-width="1.2" />
<text x="414" y="515.3" font-size="8.3" fill="#111" text-anchor="middle" stroke="#111" stroke-width="0.2">4</text>
<path d="M1121.5 504.1 L1123.9 506.7 L1127.4 506.5 L1127.2 510.0 L1129.8 512.4 L1127.2 514.8 L1127.4 518.3 L1123.9 518.1 L1121.5 520.7 L1119.1 518.1 L1115.6 518.3 L1115.8 514.8 L1113.2 512.4 L1115.8 510.0 L1115.6 506.5 L1119.1 506.7 Z" fill="#a8a838" stroke="#6e6e14" stroke-width="1" />
<circle cx="1121.5" cy="512.4" r="5.4" fill="#ffffff" stroke="#2f6a78" stroke-width="1.2" />
<text x="1121.5" y="515.3" font-size="8.3" fill="#111" text-anchor="middle" stroke="#111" stroke-width="0.2">4</text>
<path d="M414.0 524.5 L416.4 527.1 L419.9 526.9 L419.7 530.4 L422.3 532.8 L419.7 535.2 L419.9 538.7 L416.4 538.5 L414.0 541.1 L411.6 538.5 L408.1 538.7 L408.3 535.2 L405.7 532.8 L408.3 530.4 L408.1 526.9 L411.6 527.1 Z" fill="#a8a838" stroke="#6e6e14" stroke-width="1" />
<circle cx="414" cy="532.8" r="5.4" fill="#ffffff" stroke="#2f6a78" stroke-width="1.2" />
<text x="414" y="535.6999999999999" font-size="8.3" fill="#111" text-anchor="middle" stroke="#111" stroke-width="0.2">5</text>
<path d="M1121.5 524.5 L1123.9 527.1 L1127.4 526.9 L1127.2 530.4 L1129.8 532.8 L1127.2 535.2 L1127.4 538.7 L1123.9 538.5 L1121.5 541.1 L1119.1 538.5 L1115.6 538.7 L1115.8 535.2 L1113.2 532.8 L1115.8 530.4 L1115.6 526.9 L1119.1 527.1 Z" fill="#a8a838" stroke="#6e6e14" stroke-width="1" />
<circle cx="1121.5" cy="532.8" r="5.4" fill="#ffffff" stroke="#2f6a78" stroke-width="1.2" />
<text x="1121.5" y="535.6999999999999" font-size="8.3" fill="#111" text-anchor="middle" stroke="#111" stroke-width="0.2">5</text>
<path d="M414.0 545.5 L416.4 548.1 L419.9 547.9 L419.7 551.4 L422.3 553.8 L419.7 556.2 L419.9 559.7 L416.4 559.5 L414.0 562.1 L411.6 559.5 L408.1 559.7 L408.3 556.2 L405.7 553.8 L408.3 551.4 L408.1 547.9 L411.6 548.1 Z" fill="#a8a838" stroke="#6e6e14" stroke-width="1" />
<circle cx="414" cy="553.8" r="5.4" fill="#ffffff" stroke="#2f6a78" stroke-width="1.2" />
<text x="414" y="556.6999999999999" font-size="8.3" fill="#111" text-anchor="middle" stroke="#111" stroke-width="0.2">6</text>
<path d="M1121.5 545.5 L1123.9 548.1 L1127.4 547.9 L1127.2 551.4 L1129.8 553.8 L1127.2 556.2 L1127.4 559.7 L1123.9 559.5 L1121.5 562.1 L1119.1 559.5 L1115.6 559.7 L1115.8 556.2 L1113.2 553.8 L1115.8 551.4 L1115.6 547.9 L1119.1 548.1 Z" fill="#a8a838" stroke="#6e6e14" stroke-width="1" />
<circle cx="1121.5" cy="553.8" r="5.4" fill="#ffffff" stroke="#2f6a78" stroke-width="1.2" />
<text x="1121.5" y="556.6999999999999" font-size="8.3" fill="#111" text-anchor="middle" stroke="#111" stroke-width="0.2">6</text>
<path d="M414.0 574.0 L416.4 576.6 L419.9 576.4 L419.7 579.9 L422.3 582.3 L419.7 584.7 L419.9 588.2 L416.4 588.0 L414.0 590.6 L411.6 588.0 L408.1 588.2 L408.3 584.7 L405.7 582.3 L408.3 579.9 L408.1 576.4 L411.6 576.6 Z" fill="#a8a838" stroke="#6e6e14" stroke-width="1" />
<circle cx="414" cy="582.3" r="5.4" fill="#ffffff" stroke="#2f6a78" stroke-width="1.2" />
<text x="414" y="585.1999999999999" font-size="8.3" fill="#111" text-anchor="middle" stroke="#111" stroke-width="0.2">7</text>
<path d="M1121.5 574.0 L1123.9 576.6 L1127.4 576.4 L1127.2 579.9 L1129.8 582.3 L1127.2 584.7 L1127.4 588.2 L1123.9 588.0 L1121.5 590.6 L1119.1 588.0 L1115.6 588.2 L1115.8 584.7 L1113.2 582.3 L1115.8 579.9 L1115.6 576.4 L1119.1 576.6 Z" fill="#a8a838" stroke="#6e6e14" stroke-width="1" />
<circle cx="1121.5" cy="582.3" r="5.4" fill="#ffffff" stroke="#2f6a78" stroke-width="1.2" />
<text x="1121.5" y="585.1999999999999" font-size="8.3" fill="#111" text-anchor="middle" stroke="#111" stroke-width="0.2">7</text>
<path d="M414.0 590.1 L416.4 592.7 L419.9 592.5 L419.7 596.0 L422.3 598.4 L419.7 600.8 L419.9 604.3 L416.4 604.1 L414.0 606.7 L411.6 604.1 L408.1 604.3 L408.3 600.8 L405.7 598.4 L408.3 596.0 L408.1 592.5 L411.6 592.7 Z" fill="#a8a838" stroke="#6e6e14" stroke-width="1" />
<circle cx="414" cy="598.4" r="5.4" fill="#ffffff" stroke="#2f6a78" stroke-width="1.2" />
<text x="414" y="601.3" font-size="8.3" fill="#111" text-anchor="middle" stroke="#111" stroke-width="0.2">8</text>
<path d="M1121.5 590.1 L1123.9 592.7 L1127.4 592.5 L1127.2 596.0 L1129.8 598.4 L1127.2 600.8 L1127.4 604.3 L1123.9 604.1 L1121.5 606.7 L1119.1 604.1 L1115.6 604.3 L1115.8 600.8 L1113.2 598.4 L1115.8 596.0 L1115.6 592.5 L1119.1 592.7 Z" fill="#a8a838" stroke="#6e6e14" stroke-width="1" />
<circle cx="1121.5" cy="598.4" r="5.4" fill="#ffffff" stroke="#2f6a78" stroke-width="1.2" />
<text x="1121.5" y="601.3" font-size="8.3" fill="#111" text-anchor="middle" stroke="#111" stroke-width="0.2">8</text>
<path d="M414.0 613.5 L416.4 616.1 L419.9 615.9 L419.7 619.4 L422.3 621.8 L419.7 624.2 L419.9 627.7 L416.4 627.5 L414.0 630.1 L411.6 627.5 L408.1 627.7 L408.3 624.2 L405.7 621.8 L408.3 619.4 L408.1 615.9 L411.6 616.1 Z" fill="#a8a838" stroke="#6e6e14" stroke-width="1" />
<circle cx="414" cy="621.8" r="5.4" fill="#ffffff" stroke="#2f6a78" stroke-width="1.2" />
<text x="414" y="624.6999999999999" font-size="8.3" fill="#111" text-anchor="middle" stroke="#111" stroke-width="0.2">9</text>
<path d="M1121.5 613.5 L1123.9 616.1 L1127.4 615.9 L1127.2 619.4 L1129.8 621.8 L1127.2 624.2 L1127.4 627.7 L1123.9 627.5 L1121.5 630.1 L1119.1 627.5 L1115.6 627.7 L1115.8 624.2 L1113.2 621.8 L1115.8 619.4 L1115.6 615.9 L1119.1 616.1 Z" fill="#a8a838" stroke="#6e6e14" stroke-width="1" />
<circle cx="1121.5" cy="621.8" r="5.4" fill="#ffffff" stroke="#2f6a78" stroke-width="1.2" />
<text x="1121.5" y="624.6999999999999" font-size="8.3" fill="#111" text-anchor="middle" stroke="#111" stroke-width="0.2">9</text>
<path d="M414.0 630.5 L416.4 633.1 L419.9 632.9 L419.7 636.4 L422.3 638.8 L419.7 641.2 L419.9 644.7 L416.4 644.5 L414.0 647.1 L411.6 644.5 L408.1 644.7 L408.3 641.2 L405.7 638.8 L408.3 636.4 L408.1 632.9 L411.6 633.1 Z" fill="#a8a838" stroke="#6e6e14" stroke-width="1" />
<circle cx="414" cy="638.8" r="5.4" fill="#ffffff" stroke="#2f6a78" stroke-width="1.2" />
<text x="414" y="641.6999999999999" font-size="7.3" fill="#111" text-anchor="middle" stroke="#111" stroke-width="0.2">10</text>
<path d="M1121.5 630.5 L1123.9 633.1 L1127.4 632.9 L1127.2 636.4 L1129.8 638.8 L1127.2 641.2 L1127.4 644.7 L1123.9 644.5 L1121.5 647.1 L1119.1 644.5 L1115.6 644.7 L1115.8 641.2 L1113.2 638.8 L1115.8 636.4 L1115.6 632.9 L1119.1 633.1 Z" fill="#a8a838" stroke="#6e6e14" stroke-width="1" />
<circle cx="1121.5" cy="638.8" r="5.4" fill="#ffffff" stroke="#2f6a78" stroke-width="1.2" />
<text x="1121.5" y="641.6999999999999" font-size="7.3" fill="#111" text-anchor="middle" stroke="#111" stroke-width="0.2">10</text>
<path d="M414.0 664.1 L416.4 666.7 L419.9 666.5 L419.7 670.0 L422.3 672.4 L419.7 674.8 L419.9 678.3 L416.4 678.1 L414.0 680.7 L411.6 678.1 L408.1 678.3 L408.3 674.8 L405.7 672.4 L408.3 670.0 L408.1 666.5 L411.6 666.7 Z" fill="#a8a838" stroke="#6e6e14" stroke-width="1" />
<circle cx="414" cy="672.4" r="5.4" fill="#ffffff" stroke="#2f6a78" stroke-width="1.2" />
<text x="414" y="675.3" font-size="7.3" fill="#111" text-anchor="middle" stroke="#111" stroke-width="0.2">11</text>
<path d="M1121.5 664.1 L1123.9 666.7 L1127.4 666.5 L1127.2 670.0 L1129.8 672.4 L1127.2 674.8 L1127.4 678.3 L1123.9 678.1 L1121.5 680.7 L1119.1 678.1 L1115.6 678.3 L1115.8 674.8 L1113.2 672.4 L1115.8 670.0 L1115.6 666.5 L1119.1 666.7 Z" fill="#a8a838" stroke="#6e6e14" stroke-width="1" />
<circle cx="1121.5" cy="672.4" r="5.4" fill="#ffffff" stroke="#2f6a78" stroke-width="1.2" />
<text x="1121.5" y="675.3" font-size="7.3" fill="#111" text-anchor="middle" stroke="#111" stroke-width="0.2">11</text>
<path d="M414.0 708.9 L416.4 711.5 L419.9 711.3 L419.7 714.8 L422.3 717.2 L419.7 719.6 L419.9 723.1 L416.4 722.9 L414.0 725.5 L411.6 722.9 L408.1 723.1 L408.3 719.6 L405.7 717.2 L408.3 714.8 L408.1 711.3 L411.6 711.5 Z" fill="#a8a838" stroke="#6e6e14" stroke-width="1" />
<circle cx="414" cy="717.2" r="5.4" fill="#ffffff" stroke="#2f6a78" stroke-width="1.2" />
<text x="414" y="720.1" font-size="7.3" fill="#111" text-anchor="middle" stroke="#111" stroke-width="0.2">12</text>
<path d="M1121.5 708.9 L1123.9 711.5 L1127.4 711.3 L1127.2 714.8 L1129.8 717.2 L1127.2 719.6 L1127.4 723.1 L1123.9 722.9 L1121.5 725.5 L1119.1 722.9 L1115.6 723.1 L1115.8 719.6 L1113.2 717.2 L1115.8 714.8 L1115.6 711.3 L1119.1 711.5 Z" fill="#a8a838" stroke="#6e6e14" stroke-width="1" />
<circle cx="1121.5" cy="717.2" r="5.4" fill="#ffffff" stroke="#2f6a78" stroke-width="1.2" />
<text x="1121.5" y="720.1" font-size="7.3" fill="#111" text-anchor="middle" stroke="#111" stroke-width="0.2">12</text>
<path d="M779.8 241.0 L813.8 241.0 L796.8 264.0 Z" fill="none" stroke="#222" stroke-width="1.2" />
<circle cx="796.8" cy="241" r="10.2" fill="none" stroke="#222" stroke-width="1.2" />
<text x="791.5" y="228" font-size="15.5" fill="#111" >E2</text>
<path d="M809.6 860.0 L843.6 860.0 L826.6 837.0 Z" fill="none" stroke="#222" stroke-width="1.2" />
<circle cx="826.6" cy="860" r="10.2" fill="none" stroke="#222" stroke-width="1.2" />
<text x="820" y="884" font-size="15.5" fill="#111" >E4</text>
<path d="M337.1 540.5 L337.1 574.5 L360.1 557.5 Z" fill="none" stroke="#222" stroke-width="1.2" />
<circle cx="337.1" cy="557.5" r="10.2" fill="none" stroke="#222" stroke-width="1.2" />
<text x="313.8" y="553" font-size="15.5" fill="#111" font-weight="bold" transform="rotate(90 313.8 553)" textLength="15.6" lengthAdjust="spacingAndGlyphs">E1</text>
<path d="M1175.9 538.3 L1175.9 572.3 L1152.9 555.3 Z" fill="none" stroke="#222" stroke-width="1.2" />
<circle cx="1175.9" cy="555.3" r="10.2" fill="none" stroke="#222" stroke-width="1.2" />
<text x="1200" y="561" font-size="15.5" fill="#111" font-weight="bold" transform="rotate(-90 1200 561)" textLength="18" lengthAdjust="spacingAndGlyphs">E3</text>
<line x1="774.6" y1="366" x2="774.6" y2="437" stroke="#3aa6ad" stroke-width="1.1" />
<line x1="774.6" y1="296" x2="774.6" y2="366" stroke="#3aa6ad" stroke-width="2.6" />
<line x1="774.6" y1="724" x2="774.6" y2="854" stroke="#3aa6ad" stroke-width="1.1" />
<line x1="774.6" y1="854" x2="774.6" y2="899" stroke="#3aa6ad" stroke-width="2.6" />
<circle cx="774.6" cy="285.5" r="10" fill="#fff" stroke="#3aa6ad" stroke-width="1.6" />
<path d="M763 279 L770.5 273.5 L771 282 Z" fill="#3aa6ad" />
<circle cx="774.6" cy="909" r="9.5" fill="#fff" stroke="#8ccdd4" stroke-width="2.2" />
<path d="M770 906 h9 v5 h-9 Z M772 912 v2 M777 912 v2" fill="none" stroke="#8ccdd4" stroke-width="1" />
<line x1="404" y1="563.7" x2="456" y2="563.7" stroke="#5cbcc4" stroke-width="3" />
<line x1="456" y1="563.7" x2="512" y2="563.7" stroke="#8fcdd2" stroke-width="1.1" />
<line x1="584" y1="563.7" x2="727" y2="563.7" stroke="#8fcdd2" stroke-width="1.3" />
<path d="M386.6 556.5 L396 548 L407.5 562 L407.5 565.5 L400 560 Z" fill="#5cbcc4" />
<circle cx="396" cy="565" r="10.2" fill="#fff" stroke="#5cbcc4" stroke-width="1.8" />
<path d="M386 554 L378.5 563.5 L386 563.5" fill="none" stroke="#5cbcc4" stroke-width="1.1" />
<line x1="1030" y1="563.7" x2="1085" y2="563.7" stroke="#8fcdd2" stroke-width="1.1" />
<line x1="1085" y1="563.7" x2="1121" y2="563.7" stroke="#5cbcc4" stroke-width="3" />
<path d="M1120 556.5 L1129.5 548 L1141 562 L1141 565.5 L1133 560 Z" fill="#5cbcc4" />
<circle cx="1129.5" cy="565" r="10.2" fill="#fff" stroke="#5cbcc4" stroke-width="1.8" />
<path d="M1139 554 L1147 563.5 L1139 563.5" fill="none" stroke="#5cbcc4" stroke-width="1.1" />
<line x1="830" y1="563.7" x2="935" y2="563.7" stroke="#8fcdd2" stroke-width="1" />
<text x="774.6" y="288.5" font-size="9" fill="#3aa6ad" text-anchor="middle" >⌂</text>
<text x="396" y="569" font-size="10" fill="#5cbcc4" text-anchor="middle" transform="rotate(8 396 569)" >1</text>
<text x="1129.5" y="569" font-size="10" fill="#5cbcc4" text-anchor="middle" transform="rotate(8 1129.5 569)" >1</text>
<circle cx="1208.3" cy="223.8" r="21.8" fill="none" stroke="#3a5866" stroke-width="1.3" />
<circle cx="1208.3" cy="223.8" r="19.6" fill="none" stroke="#3a5866" stroke-width="1.2" />
<path d="M1219.0 213.10000000000002 L1206.9089999999999 222.40900000000002 L1209.691 225.191 Z" fill="#5a98c0" stroke="#2a6a90" stroke-width="0.7" />
<path d="M1219.0 234.5 L1209.691 222.40900000000002 L1206.9089999999999 225.191 Z" fill="#5a98c0" stroke="#2a6a90" stroke-width="0.7" />
<path d="M1197.6 234.5 L1209.691 225.191 L1206.9089999999999 222.40900000000002 Z" fill="#5a98c0" stroke="#2a6a90" stroke-width="0.7" />
<path d="M1197.6 213.10000000000002 L1206.9089999999999 225.191 L1209.691 222.40900000000002 Z" fill="#5a98c0" stroke="#2a6a90" stroke-width="0.7" />
<path d="M1208.3 194.8 L1211.2 223.8 L1205.3999999999999 223.8 Z" fill="#a4b2e4" stroke="#5a80c0" stroke-width="0.7" />
<path d="M1208.3 252.8 L1211.2 223.8 L1205.3999999999999 223.8 Z" fill="#a4b2e4" stroke="#5a80c0" stroke-width="0.7" />
<path d="M1179.8 223.8 L1208.3 226.70000000000002 L1208.3 220.9 Z" fill="#a4b2e4" stroke="#5a80c0" stroke-width="0.7" />
<path d="M1236.8 223.8 L1208.3 226.70000000000002 L1208.3 220.9 Z" fill="#a4b2e4" stroke="#5a80c0" stroke-width="0.7" />
<text x="1208.3" y="193" font-size="6.5" fill="#111" text-anchor="middle" font-weight="bold" >N</text>
<line x1="505.2" y1="386" x2="505.2" y2="720" stroke="#222" stroke-width="1.0" />
<line x1="507.6" y1="386" x2="507.6" y2="720" stroke="#222" stroke-width="1.0" />
<line x1="509" y1="390" x2="509" y2="672" stroke="#5a9a4a" stroke-width="1.0" />
<line x1="514" y1="390" x2="514" y2="672" stroke="#5a9a4a" stroke-width="1.0" />
<line x1="482.6" y1="385.3" x2="513.5" y2="385.3" stroke="#222" stroke-width="1.0" />
<line x1="482.6" y1="388.2" x2="513.5" y2="388.2" stroke="#222" stroke-width="1.0" />
<rect x="504.7" y="385.3" width="8.8" height="7" fill="none" stroke="#222" stroke-width="1" />
<line x1="535.6" y1="386" x2="549.7" y2="386" stroke="#262626" stroke-width="1.1" />
<line x1="535.6" y1="390" x2="549.7" y2="390" stroke="#262626" stroke-width="1.1" />
<rect x="549.7" y="385.7" width="156.8" height="3.9" fill="#fff" stroke="#262626" stroke-width="1" />
<line x1="549.7" y1="385.2" x2="706.5" y2="385.2" stroke="#5a1a22" stroke-width="1.2" />
<rect x="549.7" y="385.7" width="3.8" height="288.5" fill="#fff" stroke="#262626" stroke-width="1" />
<line x1="549.3" y1="385.7" x2="549.3" y2="674" stroke="#5a1a22" stroke-width="1.3" />
<line x1="555.4" y1="392" x2="555.4" y2="530" stroke="#5aa0a8" stroke-width="1" />
<rect x="702.5" y="385.7" width="4" height="97" fill="#fff" stroke="#262626" stroke-width="1" />
<line x1="706.9" y1="389" x2="706.9" y2="483" stroke="#c02848" stroke-width="1.0" />
<line x1="701.2" y1="392" x2="701.2" y2="480" stroke="#5aa0a8" stroke-width="0.9" />
<line x1="549.7" y1="530.5" x2="646.5" y2="530.5" stroke="#262626" stroke-width="1.1" />
<line x1="549.7" y1="535" x2="646.5" y2="535" stroke="#262626" stroke-width="1.1" />
<line x1="646.5" y1="530.5" x2="646.5" y2="535" stroke="#262626" stroke-width="1" />
<line x1="549.7" y1="580" x2="657.8" y2="580" stroke="#262626" stroke-width="1.1" />
<line x1="549.7" y1="584.6" x2="657.8" y2="584.6" stroke="#262626" stroke-width="1.1" />
<line x1="594.6" y1="535" x2="594.6" y2="580" stroke="#262626" stroke-width="1.1" />
<line x1="599.3" y1="535" x2="599.3" y2="580" stroke="#262626" stroke-width="1.1" />
<line x1="639.8" y1="566.5" x2="639.8" y2="581" stroke="#262626" stroke-width="1.1" />
<line x1="644" y1="566.5" x2="644" y2="581" stroke="#262626" stroke-width="1.1" />
<line x1="507.6" y1="670.8" x2="514" y2="670.8" stroke="#262626" stroke-width="1.1" />
<line x1="507.6" y1="674.2" x2="514" y2="674.2" stroke="#262626" stroke-width="1.1" />
<line x1="531" y1="670.8" x2="738" y2="670.8" stroke="#262626" stroke-width="1.1" />
<line x1="531" y1="674.2" x2="738" y2="674.2" stroke="#262626" stroke-width="1.1" />
<line x1="760" y1="670.8" x2="797" y2="670.8" stroke="#262626" stroke-width="1.1" />
<line x1="760" y1="674.2" x2="797" y2="674.2" stroke="#262626" stroke-width="1.1" />
<rect x="505" y="716" width="539.5" height="3.8" fill="#fff" stroke="#222" stroke-width="1" />
<line x1="505" y1="720.3" x2="1044.5" y2="720.3" stroke="#5a1a22" stroke-width="1.4" />
<line x1="509" y1="717.9" x2="1040" y2="717.9" stroke="#666" stroke-width="0.8" stroke-dasharray="5 3" />
<line x1="706.5" y1="399.4" x2="743" y2="399.4" stroke="#262626" stroke-width="1.1" />
<line x1="706.5" y1="404.3" x2="743" y2="404.3" stroke="#262626" stroke-width="1.1" />
<line x1="743" y1="399.4" x2="743" y2="404.3" stroke="#262626" stroke-width="1" />
<path d="M788.0 404.3 L788.0 386.0 L977.0 386.0" fill="none" stroke="#262626" stroke-width="1.1" />
<path d="M793.0 404.3 L793.0 389.6 L975.5 389.6" fill="none" stroke="#262626" stroke-width="1.1" />
<line x1="788" y1="404.3" x2="793" y2="404.3" stroke="#262626" stroke-width="1" />
<path d="M977.0 386.0 L1043.8 446.5 L1043.8 540.4" fill="none" stroke="#262626" stroke-width="1.1" />
<path d="M975.5 389.6 L982.0 389.6 L1039.9 450.0 L1039.9 540.4" fill="none" stroke="#262626" stroke-width="1.1" />
<path d="M975.3 389.6 L988.5 402.0" fill="none" stroke="#262626" stroke-width="1" />
<line x1="1039.9" y1="540.4" x2="1043.8" y2="540.4" stroke="#262626" stroke-width="1" />
<rect x="1039.6" y="585.8" width="4.6" height="134" fill="#fff" stroke="#262626" stroke-width="1" />
<path d="M703.5 483.0 L750.0 528.0" fill="none" stroke="#262626" stroke-width="1.1" />
<path d="M707.5 480.5 L753.5 524.5" fill="none" stroke="#e03050" stroke-width="1.2" />
<path d="M712.0 492.0 L746.0 524.0" fill="none" stroke="#2f8fe8" stroke-width="2.2" stroke-dasharray="7 9"/>
<path d="M701.7 471.8 L709.6 471.8 L709.6 480.0 L714.5 485.5 L708.0 491.0 L701.7 485.0 Z" fill="#ff10e0" stroke="none" stroke-width="0" />
<path d="M745.0 520.8 L750.5 517.5 L756.0 523.0 L762.4 523.7 L762.4 528.6 L750.0 528.6 Z" fill="#ff10e0" stroke="none" stroke-width="0" />
<line x1="762.4" y1="523.7" x2="883" y2="523.7" stroke="#262626" stroke-width="1.1" />
<line x1="762.4" y1="528.6" x2="883" y2="528.6" stroke="#262626" stroke-width="1.1" />
<line x1="765" y1="526.2" x2="871" y2="526.2" stroke="#30c8d0" stroke-width="1" />
<line x1="762.4" y1="523.2" x2="883" y2="523.2" stroke="#8a5a50" stroke-width="1.2" />
<rect x="807.5" y="523.7" width="11.7" height="4.9" fill="#fff" stroke="#262626" stroke-width="1" />
<rect x="864.3" y="523.7" width="6.7" height="4.9" fill="#fff" stroke="#262626" stroke-width="1" />
<rect x="764" y="523.7" width="3" height="4.9" fill="#fff" stroke="#262626" stroke-width="1" />
<rect x="871" y="523.5" width="12" height="5.3" fill="#ff10e0" />
<line x1="883" y1="489.4" x2="972" y2="489.4" stroke="#262626" stroke-width="1.1" />
<line x1="883" y1="492.4" x2="972" y2="492.4" stroke="#262626" stroke-width="1.1" />
<line x1="878" y1="504" x2="878" y2="545" stroke="#262626" stroke-width="1.1" />
<line x1="883" y1="504" x2="883" y2="545" stroke="#262626" stroke-width="1.1" />
<line x1="972" y1="504" x2="972" y2="540" stroke="#262626" stroke-width="1.1" />
<line x1="977" y1="504" x2="977" y2="540" stroke="#262626" stroke-width="1.1" />
<rect x="878" y="490" width="5" height="14" fill="#7a4630" />
<rect x="972" y="490" width="5" height="14" fill="#7a4630" />
<line x1="884" y1="491" x2="930" y2="491" stroke="#30c8d0" stroke-width="1" />
<line x1="931.8" y1="495.3" x2="931.8" y2="512" stroke="#262626" stroke-width="1.1" />
<line x1="935.8" y1="495.3" x2="935.8" y2="512" stroke="#262626" stroke-width="1.1" />
<line x1="931.8" y1="535.5" x2="931.8" y2="560" stroke="#262626" stroke-width="1.1" />
<line x1="935.8" y1="535.5" x2="935.8" y2="560" stroke="#262626" stroke-width="1.1" />
<line x1="935.8" y1="535.5" x2="955" y2="535.5" stroke="#262626" stroke-width="1.1" />
<line x1="935.8" y1="540" x2="955" y2="540" stroke="#262626" stroke-width="1.1" />
<line x1="932" y1="540.4" x2="966.4" y2="540.4" stroke="#262626" stroke-width="1.1" />
<line x1="932" y1="543.8" x2="966.4" y2="543.8" stroke="#262626" stroke-width="1.1" />
<rect x="966.4" y="539.3" width="11" height="4.8" fill="#ff10e0" />
<rect x="931.5" y="600.5" width="5" height="11.3" fill="#ff10e0" />
<rect x="878" y="540" width="4" height="8" fill="none" stroke="#262626" stroke-width="1" />
<line x1="878" y1="545" x2="905" y2="545" stroke="#262626" stroke-width="1.1" />
<line x1="878" y1="549" x2="905" y2="549" stroke="#262626" stroke-width="1.1" />
<line x1="905" y1="545" x2="905" y2="549" stroke="#262626" stroke-width="1" />
<line x1="936.5" y1="607.3" x2="1039.6" y2="607.3" stroke="#262626" stroke-width="1.1" />
<line x1="936.5" y1="611.8" x2="1039.6" y2="611.8" stroke="#262626" stroke-width="1.1" />
<line x1="945" y1="609.5" x2="1025" y2="609.5" stroke="#30c8d0" stroke-width="1" />
<rect x="1038.5" y="606.2" width="5.7" height="11.3" fill="#ff10e0" />
<line x1="932" y1="545" x2="932" y2="600.5" stroke="#262626" stroke-width="1.1" />
<line x1="936.5" y1="545" x2="936.5" y2="600.5" stroke="#262626" stroke-width="1.1" />
<rect x="792.5" y="587" width="4.5" height="130" fill="#fff" stroke="#262626" stroke-width="1" />
<rect x="780" y="669.7" width="17" height="3.3" fill="#7a4630" />
<rect x="883.2" y="596" width="3.4" height="121" fill="#fff" stroke="#262626" stroke-width="1" />
<rect x="882.5" y="596" width="5" height="12.4" fill="#7a4630" />
<rect x="882.5" y="662.9" width="5" height="12.4" fill="#7a4630" />
<line x1="685" y1="584.6" x2="685" y2="672" stroke="#262626" stroke-width="1.1" />
<line x1="688.5" y1="584.6" x2="688.5" y2="672" stroke="#262626" stroke-width="1.1" />
<rect x="549.7" y="385.2" width="10" height="5" fill="#ff10e0" />
<rect x="695.6" y="385.2" width="11.4" height="5" fill="#ff10e0" />
<rect x="504" y="669.7" width="5.3" height="10.3" fill="#ff10e0" />
<rect x="504" y="709.3" width="5.3" height="11.4" fill="#ff10e0" />
<rect x="591" y="715" width="11.2" height="5.7" fill="#ff10e0" />
<rect x="678.2" y="715" width="11.3" height="5.7" fill="#ff10e0" />
<rect x="792.5" y="715" width="10.2" height="5.7" fill="#ff10e0" />
<rect x="883.2" y="715" width="9" height="5.7" fill="#ff10e0" />
<rect x="958" y="715" width="10.2" height="5.7" fill="#ff10e0" />
<rect x="1039.6" y="709.3" width="4.8" height="11.4" fill="#ff10e0" />
<rect x="549.2" y="513.6" width="4.6" height="11.2" fill="#7a4630" />
<rect x="549.2" y="573" width="4.6" height="12.4" fill="#7a4630" />
<rect x="549.4" y="670" width="12" height="4.4" fill="#7a4630" />
<rect x="631.7" y="580" width="12.5" height="4.6" fill="#7a4630" />
<rect x="683.9" y="670" width="12.4" height="4.4" fill="#7a4630" />
<rect x="683.5" y="581.5" width="5.5" height="11.5" fill="#7a4630" />
<line x1="689" y1="580.1" x2="715" y2="580.1" stroke="#f03050" stroke-width="1.2" />
<line x1="689" y1="586.85" x2="715" y2="586.85" stroke="#f03050" stroke-width="1.2" />
<line x1="689" y1="593.6" x2="715" y2="593.6" stroke="#f03050" stroke-width="1.2" />
<line x1="689" y1="600.35" x2="715" y2="600.35" stroke="#f03050" stroke-width="1.2" />
<line x1="689" y1="607.1" x2="715" y2="607.1" stroke="#f03050" stroke-width="1.2" />
<line x1="689" y1="613.85" x2="715" y2="613.85" stroke="#f03050" stroke-width="1.2" />
<line x1="689" y1="620.6" x2="715" y2="620.6" stroke="#f03050" stroke-width="1.2" />
<line x1="689" y1="627.35" x2="715" y2="627.35" stroke="#f03050" stroke-width="1.2" />
<line x1="689" y1="634.1" x2="715" y2="634.1" stroke="#f03050" stroke-width="1.2" />
<line x1="689" y1="640.85" x2="715" y2="640.85" stroke="#f03050" stroke-width="1.2" />
<line x1="720.4" y1="646" x2="720.4" y2="670" stroke="#f03050" stroke-width="1.2" />
<line x1="727.25" y1="646" x2="727.25" y2="670" stroke="#f03050" stroke-width="1.2" />
<line x1="734.1" y1="646" x2="734.1" y2="670" stroke="#f03050" stroke-width="1.2" />
<line x1="740.9499999999999" y1="646" x2="740.9499999999999" y2="670" stroke="#f03050" stroke-width="1.2" />
<line x1="747.8" y1="646" x2="747.8" y2="670" stroke="#f03050" stroke-width="1.2" />
<line x1="754.65" y1="646" x2="754.65" y2="670" stroke="#f03050" stroke-width="1.2" />
<line x1="761.5" y1="646" x2="761.5" y2="670" stroke="#f03050" stroke-width="1.2" />
<line x1="764" y1="586.8" x2="792.6" y2="586.8" stroke="#f03050" stroke-width="1.2" />
<line x1="764" y1="593.55" x2="792.6" y2="593.55" stroke="#f03050" stroke-width="1.2" />
<line x1="764" y1="600.3" x2="792.6" y2="600.3" stroke="#f03050" stroke-width="1.2" />
<line x1="764" y1="607.05" x2="792.6" y2="607.05" stroke="#f03050" stroke-width="1.2" />
<line x1="764" y1="613.8" x2="792.6" y2="613.8" stroke="#f03050" stroke-width="1.2" />
<line x1="764" y1="620.55" x2="792.6" y2="620.55" stroke="#f03050" stroke-width="1.2" />
<line x1="764" y1="627.3" x2="792.6" y2="627.3" stroke="#f03050" stroke-width="1.2" />
<line x1="764" y1="634.05" x2="792.6" y2="634.05" stroke="#f03050" stroke-width="1.2" />
<line x1="764" y1="640.8" x2="792.6" y2="640.8" stroke="#f03050" stroke-width="1.2" />
<line x1="763.8" y1="643" x2="792.6" y2="670" stroke="#f03050" stroke-width="1.3" />
<line x1="720.4" y1="655.4" x2="776" y2="655.4" stroke="#f03050" stroke-width="1.1" />
<line x1="777.9" y1="587" x2="777.9" y2="641" stroke="#f03050" stroke-width="1.1" />
<circle cx="777.9" cy="587" r="1.7" fill="#fff" stroke="#f03050" stroke-width="1" />
<circle cx="723.5" cy="655.4" r="1.7" fill="#fff" stroke="#f03050" stroke-width="1" />
<rect x="719" y="592.3" width="44" height="46.5" fill="none" stroke="#262626" stroke-width="1.1" />
<rect x="723.5" y="597" width="35" height="37.5" fill="none" stroke="#262626" stroke-width="1" />
<line x1="723.5" y1="597" x2="758.5" y2="634.5" stroke="#262626" stroke-width="1" />
<line x1="758.5" y1="597" x2="723.5" y2="634.5" stroke="#262626" stroke-width="1" />
<path d="M738.0 592.6 L738.0 596.0 L746.0 596.0 L746.0 592.6" fill="none" stroke="#262626" stroke-width="1" />
<rect x="718.7" y="593.5" width="4.7" height="14.3" fill="#7a4630" />
<rect x="718.7" y="626.3" width="4.7" height="14.3" fill="#7a4630" />
<rect x="759" y="593.5" width="4.7" height="14.3" fill="#7a4630" />
<rect x="759" y="626.3" width="4.7" height="14.3" fill="#7a4630" />
<rect x="792.5" y="588.8" width="4.5" height="15.4" fill="#7a4630" />
<line x1="774.6" y1="528" x2="774.6" y2="648" stroke="#6cc0c8" stroke-width="1" />
<circle cx="714.8" cy="575.5" r="2.1" fill="#d4e8ff" stroke="#5aa4f0" stroke-width="0.9" />
<circle cx="714.8" cy="581.1" r="2.1" fill="#d4e8ff" stroke="#5aa4f0" stroke-width="0.9" />
<circle cx="714.8" cy="586.7" r="2.1" fill="#d4e8ff" stroke="#5aa4f0" stroke-width="0.9" />
<circle cx="714.8" cy="592.3" r="2.1" fill="#d4e8ff" stroke="#5aa4f0" stroke-width="0.9" />
<circle cx="714.8" cy="597.9" r="2.1" fill="#d4e8ff" stroke="#5aa4f0" stroke-width="0.9" />
<circle cx="714.8" cy="603.5" r="2.1" fill="#d4e8ff" stroke="#5aa4f0" stroke-width="0.9" />
<circle cx="714.8" cy="609.1" r="2.1" fill="#d4e8ff" stroke="#5aa4f0" stroke-width="0.9" />
<circle cx="714.8" cy="614.7" r="2.1" fill="#d4e8ff" stroke="#5aa4f0" stroke-width="0.9" />
<circle cx="714.8" cy="620.3" r="2.1" fill="#d4e8ff" stroke="#5aa4f0" stroke-width="0.9" />
<circle cx="714.8" cy="625.9" r="2.1" fill="#d4e8ff" stroke="#5aa4f0" stroke-width="0.9" />
<circle cx="714.8" cy="631.5" r="2.1" fill="#d4e8ff" stroke="#5aa4f0" stroke-width="0.9" />
<circle cx="714.8" cy="637.1" r="2.1" fill="#d4e8ff" stroke="#5aa4f0" stroke-width="0.9" />
<circle cx="714.8" cy="642.7" r="2.1" fill="#d4e8ff" stroke="#5aa4f0" stroke-width="0.9" />
<circle cx="714.8" cy="644.2" r="2.1" fill="#d4e8ff" stroke="#5aa4f0" stroke-width="0.9" />
<circle cx="720.3499999999999" cy="644.2" r="2.1" fill="#d4e8ff" stroke="#5aa4f0" stroke-width="0.9" />
<circle cx="725.9" cy="644.2" r="2.1" fill="#d4e8ff" stroke="#5aa4f0" stroke-width="0.9" />
<circle cx="731.4499999999999" cy="644.2" r="2.1" fill="#d4e8ff" stroke="#5aa4f0" stroke-width="0.9" />
<circle cx="737.0" cy="644.2" r="2.1" fill="#d4e8ff" stroke="#5aa4f0" stroke-width="0.9" />
<circle cx="742.55" cy="644.2" r="2.1" fill="#d4e8ff" stroke="#5aa4f0" stroke-width="0.9" />
<circle cx="748.0999999999999" cy="644.2" r="2.1" fill="#d4e8ff" stroke="#5aa4f0" stroke-width="0.9" />
<circle cx="753.65" cy="644.2" r="2.1" fill="#d4e8ff" stroke="#5aa4f0" stroke-width="0.9" />
<circle cx="759.1999999999999" cy="644.2" r="2.1" fill="#d4e8ff" stroke="#5aa4f0" stroke-width="0.9" />
<circle cx="764.75" cy="644.2" r="2.1" fill="#d4e8ff" stroke="#5aa4f0" stroke-width="0.9" />
<circle cx="766.3" cy="588.5" r="2.1" fill="#d4e8ff" stroke="#5aa4f0" stroke-width="0.9" />
<circle cx="766.3" cy="594.1" r="2.1" fill="#d4e8ff" stroke="#5aa4f0" stroke-width="0.9" />
<circle cx="766.3" cy="599.7" r="2.1" fill="#d4e8ff" stroke="#5aa4f0" stroke-width="0.9" />
<circle cx="766.3" cy="605.3" r="2.1" fill="#d4e8ff" stroke="#5aa4f0" stroke-width="0.9" />
<circle cx="766.3" cy="610.9" r="2.1" fill="#d4e8ff" stroke="#5aa4f0" stroke-width="0.9" />
<circle cx="766.3" cy="616.5" r="2.1" fill="#d4e8ff" stroke="#5aa4f0" stroke-width="0.9" />
<circle cx="766.3" cy="622.1" r="2.1" fill="#d4e8ff" stroke="#5aa4f0" stroke-width="0.9" />
<circle cx="766.3" cy="627.7" r="2.1" fill="#d4e8ff" stroke="#5aa4f0" stroke-width="0.9" />
<circle cx="766.3" cy="633.3" r="2.1" fill="#d4e8ff" stroke="#5aa4f0" stroke-width="0.9" />
<circle cx="766.3" cy="638.9" r="2.1" fill="#d4e8ff" stroke="#5aa4f0" stroke-width="0.9" />
<circle cx="766.3" cy="644.5" r="2.1" fill="#d4e8ff" stroke="#5aa4f0" stroke-width="0.9" />
<path d="M536.5 388.0 A23 23 0 0 1 513.5 411.0" fill="none" stroke="#2f8fe8" stroke-width="1.4" />
<line x1="513.5" y1="388" x2="513.5" y2="411" stroke="#2f8fe8" stroke-width="1.4" />
<path d="M743 404 L743 424 Q756 424 765 400" fill="none" stroke="#2f8fe8" stroke-width="1.5" />
<path d="M788 404 L788 425 Q772 423 766 400" fill="none" stroke="#2f8fe8" stroke-width="1.5" />
<path d="M530.8 674.2 A17 17 0 0 1 513.8 691.2" fill="none" stroke="#2f8fe8" stroke-width="1.4" />
<line x1="513.8" y1="674.2" x2="513.8" y2="691.2" stroke="#2f8fe8" stroke-width="1.3" />
<path d="M685 680 L710 680 A22 22 0 0 1 690 696" fill="none" stroke="#2f8fe8" stroke-width="1.4" />
<line x1="686" y1="696" x2="692" y2="696" stroke="#2f8fe8" stroke-width="1.3" />
<path d="M657.8 586 L657.8 604 Q672 604 679 584" fill="none" stroke="#2f8fe8" stroke-width="1.3" />
<path d="M573.4 540.2 A24 24 0 0 0 597 562.5" fill="none" stroke="#2f8fe8" stroke-width="1.4" />
<line x1="573.4" y1="540.2" x2="599" y2="540.2" stroke="#2f8fe8" stroke-width="1.3" />
<path d="M918.5 565.4 A14.5 14.5 0 0 0 949 565.4 Z" fill="none" stroke="#2f8fe8" stroke-width="1.3" />
<line x1="932" y1="543" x2="932" y2="600" stroke="#2f8fe8" stroke-width="1.4" />
<line x1="934" y1="548" x2="934" y2="590" stroke="#f03050" stroke-width="1" />
<path d="M1040 541.5 L1019 541.5 Q1022 560 1040 563" fill="none" stroke="#2f8fe8" stroke-width="1.4" />
<path d="M1040 584.6 L1019 584.6 Q1022 567 1040 564" fill="none" stroke="#2f8fe8" stroke-width="1.4" />
<path d="M940 513 Q952 515 956 528 L950 528" fill="none" stroke="#2f8fe8" stroke-width="1.3" />
<path d="M762 681 L784 681 Q783 694 764 697" fill="none" stroke="#2f8fe8" stroke-width="1.3" />
<path d="M985.5 397.5 L981.0 420.5 L1002.5 416.0" fill="none" stroke="#2f8fe8" stroke-width="1.3" />
<path d="M988.0 400.0 L984.5 417.0 L1002.0 413.5" fill="none" stroke="#2f8fe8" stroke-width="1.0" />
<path d="M1019.0 433.7 L1015.0 455.0 L1038.0 450.0" fill="none" stroke="#2f8fe8" stroke-width="1.3" />
<path d="M1021.5 436.0 L1018.5 451.5 L1037.0 447.5" fill="none" stroke="#2f8fe8" stroke-width="1.0" />
<path d="M556.0 392.0 L556.0 444.0 L575.0 444.0 L575.0 392.0" fill="none" stroke="#333" stroke-width="1" />
<line x1="556" y1="418" x2="575" y2="418" stroke="#333" stroke-width="1" />
<path d="M575.0 392.0 L575.0 409.0 L610.0 409.0 L610.0 392.0" fill="none" stroke="#333" stroke-width="1" />
<line x1="591" y1="392" x2="591" y2="409" stroke="#333" stroke-width="1" />
<line x1="556" y1="395" x2="610" y2="395" stroke="#333" stroke-width="0.8" />
<rect x="558.5" y="398" width="3" height="11" fill="none" stroke="#333" stroke-width="0.8" rx="1" />
<rect x="585.5" y="420.5" width="20" height="20.5" fill="none" stroke="#333" stroke-width="1.1" />
<rect x="556" y="464" width="18" height="52" fill="none" stroke="#b08860" stroke-width="1.1" />
<rect x="558" y="466" width="11" height="48" fill="none" stroke="#b08860" stroke-width="0.8" />
<line x1="556" y1="490" x2="574" y2="490" stroke="#b08860" stroke-width="0.8" />
<rect x="585.5" y="477" width="25.5" height="26" fill="none" stroke="#b08860" stroke-width="1.6" />
<rect x="588" y="479.5" width="20.5" height="21" fill="#e8e8e8" stroke="#b08860" stroke-width="0.8" />
<path d="M590 482 L606 498 M606 482 L590 498" fill="none" stroke="#bbb" stroke-width="2.2" />
<circle cx="585" cy="477" r="1.4" fill="#20e020" />
<circle cx="611.5" cy="477" r="1.4" fill="#20e020" />
<circle cx="585" cy="503" r="1.4" fill="#20e020" />
<circle cx="611.5" cy="503" r="1.4" fill="#20e020" />
<circle cx="571" cy="463" r="1.4" fill="#20e020" />
<circle cx="571" cy="516" r="1.4" fill="#20e020" />
<path d="M588 464 L588 452 Q588 450 591 450 L600 450 Q603 450 603 452 L603 464 Z" fill="none" stroke="#b08860" stroke-width="1.3" />
<path d="M588 527 L588 517 L603 517 L603 527" fill="none" stroke="#b08860" stroke-width="1.3" />
<path d="M616 446 L622 452 A7 7 0 1 1 610 452 Z" fill="none" stroke="#b08860" stroke-width="1.3" />
<path d="M616 512 L622 518 A7 7 0 1 1 610 518 Z" fill="none" stroke="#b08860" stroke-width="1.3" />
<path d="M575.0 455.0 L618.0 455.0" fill="none" stroke="#ccc" stroke-width="1" />
<path d="M618.0 468.0 L618.0 512.0" fill="none" stroke="#ccc" stroke-width="1" />
<path d="M575.0 525.0 L590.0 525.0" fill="none" stroke="#ccc" stroke-width="1" />
<rect x="563" y="513" width="10" height="15" fill="none" stroke="#b08860" stroke-width="1" />
<path d="M566 468 l3 -5 l2 5 M566 512 l3 -5 l2 5" fill="none" stroke="#20e020" stroke-width="1" />
<rect x="549.5" y="514" width="4" height="11" fill="#7a4630" />
<rect x="596.6" y="585.8" width="17" height="10.2" fill="#20e8f8" />
<text x="605" y="591.5" font-size="5" fill="#1818e8" text-anchor="middle" font-weight="bold" >oso</text>
<text x="605" y="595.8" font-size="5" fill="#1818e8" text-anchor="middle" font-weight="bold" >ooo</text>
<line x1="554" y1="597.8" x2="657.8" y2="597.8" stroke="#333" stroke-width="1" />
<line x1="568.2" y1="597.8" x2="568.2" y2="656" stroke="#a8d0f0" stroke-width="1.2" />
<line x1="562" y1="597.8" x2="562" y2="656" stroke="#a8d0f0" stroke-width="0.8" />
<rect x="554.8" y="615.2" width="13" height="26" fill="#a8bcd8" stroke="#4a78b8" stroke-width="1" />
<rect x="556.5" y="618" width="9.5" height="12" fill="none" stroke="#4a78b8" stroke-width="0.8" />
<line x1="557" y1="620.0" x2="565.5" y2="620.0" stroke="#4a78b8" stroke-width="0.6" />
<line x1="557" y1="622.5" x2="565.5" y2="622.5" stroke="#4a78b8" stroke-width="0.6" />
<line x1="557" y1="625.0" x2="565.5" y2="625.0" stroke="#4a78b8" stroke-width="0.6" />
<line x1="557" y1="627.5" x2="565.5" y2="627.5" stroke="#4a78b8" stroke-width="0.6" />
<text x="561" y="637" font-size="7" fill="#345" text-anchor="middle" >5</text>
<rect x="626.7" y="654.5" width="21" height="15.2" fill="none" stroke="#2f8fe8" stroke-width="1.4" />
<line x1="647.6" y1="661" x2="660" y2="661" stroke="#88b8e8" stroke-width="1" />
<line x1="660" y1="655" x2="660" y2="672" stroke="#88b8e8" stroke-width="1" />
<line x1="600" y1="567" x2="638.5" y2="567" stroke="#2020f0" stroke-width="1.4" />
<ellipse cx="585.2" cy="574.6" rx="6.3" ry="5" fill="none" stroke="#f0a860" stroke-width="1.3"/>
<ellipse cx="585.2" cy="574.6" rx="4.6" ry="3.4" fill="none" stroke="#f0a860" stroke-width="0.8"/>
<line x1="585.2" y1="570" x2="585.2" y2="579" stroke="#f0a860" stroke-width="1" />
<ellipse cx="607.9" cy="574.6" rx="6.3" ry="5" fill="none" stroke="#f0a860" stroke-width="1.3"/>
<ellipse cx="607.9" cy="574.6" rx="4.6" ry="3.4" fill="none" stroke="#f0a860" stroke-width="0.8"/>
<line x1="607.9" y1="570" x2="607.9" y2="579" stroke="#f0a860" stroke-width="1" />
<ellipse cx="630.6" cy="574.6" rx="6.3" ry="5" fill="none" stroke="#f0a860" stroke-width="1.3"/>
<ellipse cx="630.6" cy="574.6" rx="4.6" ry="3.4" fill="none" stroke="#f0a860" stroke-width="0.8"/>
<line x1="630.6" y1="570" x2="630.6" y2="579" stroke="#f0a860" stroke-width="1" />
<circle cx="563" cy="551" r="4.6" fill="none" stroke="#2a7ab8" stroke-width="1.4" />
<circle cx="563" cy="551" r="2.4" fill="none" stroke="#2a7ab8" stroke-width="1.2" />
<path d="M556.5 546 q2 -2 4 0 M566 546 q2 -2 4 1" fill="none" stroke="#2a7ab8" stroke-width="1.2" />
<text x="573" y="557" font-size="3.6" fill="#f09a30" text-anchor="middle" font-weight="bold" >0.15</text>
<path d="M689.5 703 L745 703 M689.5 714 L745 714 M689.5 703 L689.5 714 M745 703 L745 714 M689.5 703 l5 -4 l10 8 M745 703 l-5 -4 l-10 8 M712 699 l6 8 l6 -8 M728 714 v-11" fill="none" stroke="#f09a30" stroke-width="1.2" />
<path d="M833 627.7 L847 630.5 Q851 631.5 851.5 636 L858.5 680 Q859 685 854 686 L828 690.5 Q822.5 691 823 686 L829 632 Q829.5 627 833 627.7 Z" fill="none" stroke="#f09a30" stroke-width="1.4" />
<circle cx="841.7" cy="642.4" r="1.5" fill="#f09a30" />
<circle cx="841.7" cy="676.5" r="1.5" fill="#f09a30" />
<g transform="translate(819.7 643.6) rotate(0)">
<rect x="-8.2" y="-8.2" width="16.4" height="16.4" fill="none" stroke="#1a1a1a" stroke-width="1.5" rx="4" />
<rect x="-5.8999999999999995" y="-5.8999999999999995" width="11.799999999999999" height="11.799999999999999" fill="none" stroke="#1a1a1a" stroke-width="1" rx="2" />
<rect x="-4.199999999999999" y="-7.199999999999999" width="8.399999999999999" height="11.399999999999999" fill="none" stroke="#1a1a1a" stroke-width="0.9" rx="1.5" />
</g>
<g transform="translate(819 668.5) rotate(0)">
<rect x="-8.2" y="-8.2" width="16.4" height="16.4" fill="none" stroke="#1a1a1a" stroke-width="1.5" rx="4" />
<rect x="-5.8999999999999995" y="-5.8999999999999995" width="11.799999999999999" height="11.799999999999999" fill="none" stroke="#1a1a1a" stroke-width="1" rx="2" />
<rect x="-4.199999999999999" y="-7.199999999999999" width="8.399999999999999" height="11.399999999999999" fill="none" stroke="#1a1a1a" stroke-width="0.9" rx="1.5" />
</g>
<g transform="translate(865 641.3) rotate(-15)">
<rect x="-8.2" y="-8.2" width="16.4" height="16.4" fill="none" stroke="#1a1a1a" stroke-width="1.5" rx="4" />
<rect x="-5.8999999999999995" y="-5.8999999999999995" width="11.799999999999999" height="11.799999999999999" fill="none" stroke="#1a1a1a" stroke-width="1" rx="2" />
<rect x="-4.199999999999999" y="-7.199999999999999" width="8.399999999999999" height="11.399999999999999" fill="none" stroke="#1a1a1a" stroke-width="0.9" rx="1.5" />
</g>
<g transform="translate(867.3 670.8) rotate(0)">
<rect x="-8.2" y="-8.2" width="16.4" height="16.4" fill="none" stroke="#1a1a1a" stroke-width="1.5" rx="4" />
<rect x="-5.8999999999999995" y="-5.8999999999999995" width="11.799999999999999" height="11.799999999999999" fill="none" stroke="#1a1a1a" stroke-width="1" rx="2" />
<rect x="-4.199999999999999" y="-7.199999999999999" width="8.399999999999999" height="11.399999999999999" fill="none" stroke="#1a1a1a" stroke-width="0.9" rx="1.5" />
</g>
<g transform="translate(840 699) rotate(45)">
<rect x="-7.8" y="-7.8" width="15.6" height="15.6" fill="none" stroke="#1a1a1a" stroke-width="1.5" rx="4" />
<rect x="-5.5" y="-5.5" width="11.0" height="11.0" fill="none" stroke="#1a1a1a" stroke-width="1" rx="2" />
<rect x="-3.8" y="-6.8" width="7.6" height="10.6" fill="none" stroke="#1a1a1a" stroke-width="0.9" rx="1.5" />
</g>
<g transform="translate(828.8 547.2) rotate(30)">
<rect x="-8" y="-8" width="16" height="16" fill="none" stroke="#1a1a1a" stroke-width="1.5" rx="4" />
<rect x="-5.7" y="-5.7" width="11.4" height="11.4" fill="none" stroke="#1a1a1a" stroke-width="1" rx="2" />
<rect x="-4" y="-7" width="8" height="11" fill="none" stroke="#1a1a1a" stroke-width="0.9" rx="1.5" />
</g>
<g transform="translate(861.6 548) rotate(20)">
<rect x="-8" y="-8" width="16" height="16" fill="none" stroke="#1a1a1a" stroke-width="1.5" rx="4" />
<rect x="-5.7" y="-5.7" width="11.4" height="11.4" fill="none" stroke="#1a1a1a" stroke-width="1" rx="2" />
<rect x="-4" y="-7" width="8" height="11" fill="none" stroke="#1a1a1a" stroke-width="0.9" rx="1.5" />
</g>
<circle cx="845.7" cy="535" r="6" fill="none" stroke="#f09a30" stroke-width="1.4" />
<path d="M886.6 714.0 L886.6 690.0 L1038.5 690.0 L1038.5 714.0 L886.6 714.0" fill="none" stroke="#b08860" stroke-width="1.2" />
<line x1="893" y1="706" x2="1033" y2="706" stroke="#b08860" stroke-width="1" />
<line x1="893" y1="710" x2="1033" y2="710" stroke="#b08860" stroke-width="0.8" />
<line x1="903.6" y1="690" x2="903.6" y2="706" stroke="#b08860" stroke-width="0.9" />
<line x1="920.6" y1="690" x2="920.6" y2="706" stroke="#b08860" stroke-width="0.9" />
<line x1="937.6" y1="690" x2="937.6" y2="706" stroke="#b08860" stroke-width="0.9" />
<line x1="954.6" y1="690" x2="954.6" y2="706" stroke="#b08860" stroke-width="0.9" />
<line x1="971.6" y1="690" x2="971.6" y2="706" stroke="#b08860" stroke-width="0.9" />
<line x1="988.6" y1="690" x2="988.6" y2="706" stroke="#b08860" stroke-width="0.9" />
<line x1="1005.6" y1="690" x2="1005.6" y2="706" stroke="#b08860" stroke-width="0.9" />
<line x1="1022.6" y1="690" x2="1022.6" y2="706" stroke="#b08860" stroke-width="0.9" />
<path d="M890 690 L890 634 Q890 631 893 631 L897 631 A9 9 0 0 1 911 645 L911 690" fill="none" stroke="#b08860" stroke-width="1.2" />
<line x1="893" y1="706" x2="893" y2="668" stroke="#b08860" stroke-width="1" />
<line x1="893" y1="668" x2="911" y2="668" stroke="#b08860" stroke-width="0.9" />
<line x1="898" y1="668" x2="898" y2="706" stroke="#b08860" stroke-width="0.8" />
<path d="M1036 690 L1036 628 Q1030 622 1022 624 A9 9 0 0 0 1014.7 645 L1014.7 690" fill="none" stroke="#b08860" stroke-width="1.2" />
<line x1="1033" y1="706" x2="1033" y2="655" stroke="#b08860" stroke-width="1" />
<line x1="1014.7" y1="655" x2="1033" y2="655" stroke="#b08860" stroke-width="0.9" />
<line x1="1028" y1="655" x2="1028" y2="706" stroke="#b08860" stroke-width="0.8" />
<ellipse cx="961.4" cy="670" rx="11.5" ry="9" fill="none" stroke="#a02828" stroke-width="1.2"/>
<ellipse cx="897" cy="498.5" rx="6" ry="4.6" fill="none" stroke="#f0a080" stroke-width="1.2"/>
<line x1="897" y1="494" x2="897" y2="501" stroke="#f0a080" stroke-width="1" />
<ellipse cx="918" cy="498.5" rx="6" ry="4.6" fill="none" stroke="#f0a080" stroke-width="1.2"/>
<line x1="918" y1="494" x2="918" y2="501" stroke="#f0a080" stroke-width="1" />
<ellipse cx="961" cy="497" rx="6" ry="4.6" fill="none" stroke="#f0a080" stroke-width="1.2"/>
<line x1="961" y1="494" x2="961" y2="501" stroke="#f0a080" stroke-width="1" />
<line x1="884" y1="508.5" x2="931" y2="508.5" stroke="#3030f0" stroke-width="1.3" />
<path d="M958 517 q4 -3 8 0 v8 h-8 Z M968 516 v9 M971 516 v9" fill="none" stroke="#2a8ac8" stroke-width="1.2" />
<path d="M712 675 v5 M760 700 q5 -8 10 0 v8 h-10 Z" fill="none" stroke="#2a8ac8" stroke-width="1.2" />
<path d="M978.0 450.3 L982.0 446.3 L986.0 450.3 L982.0 454.3 Z" fill="#b8b8b8" stroke="#888" stroke-width="0.8" />
<rect x="988" y="446" width="7.5" height="3.2" fill="#111" />
<text x="992" y="454.5" font-size="3.3" fill="#f09a30" text-anchor="middle" >+0.10</text>
<path d="M1058.4 450.3 L1062.4 446.3 L1066.4 450.3 L1062.4 454.3 Z" fill="#b8b8b8" stroke="#888" stroke-width="0.8" />
<rect x="1068.4" y="446" width="7.5" height="3.2" fill="#111" />
<text x="1072.4" y="454.5" font-size="3.3" fill="#f09a30" text-anchor="middle" >+0.10</text>
<path d="M721 523 A18.7 18.7 0 0 1 747 496 Z" fill="none" stroke="#2f8fe8" stroke-width="1.3" />
<line x1="512.0" y1="380.5" x2="551.2" y2="380.5" stroke="#35595c" stroke-width="1.2" />
<circle cx="513.5" cy="380.5" r="1.7" fill="#f2ee00" />
<circle cx="549.7" cy="380.5" r="1.7" fill="#f2ee00" />
<circle cx="536" cy="380.5" r="1.7" fill="#f2ee00" />
<text x="532" y="378.096" font-size="8.6" fill="#111" stroke="#111" stroke-width="0.3" text-anchor="middle">1.000.60</text>
<line x1="705.1" y1="379.8" x2="789.5" y2="379.8" stroke="#35595c" stroke-width="1.2" />
<circle cx="706.6" cy="379.8" r="1.7" fill="#f2ee00" />
<circle cx="788" cy="379.8" r="1.7" fill="#f2ee00" />
<circle cx="743" cy="379.8" r="1.7" fill="#f2ee00" />
<text x="725" y="377.988" font-size="8.3" fill="#111" stroke="#111" stroke-width="0.3" text-anchor="middle">1.61</text>
<text x="763.4" y="377.952" font-size="8.2" fill="#111" stroke="#111" stroke-width="0.3" text-anchor="middle">2.06</text>
<text x="781.6" y="375.452" font-size="8.2" fill="#111" stroke="#111" stroke-width="0.3" text-anchor="middle">.50</text>
<line x1="741.5" y1="372.3" x2="978.5" y2="372.3" stroke="#35595c" stroke-width="1.2" />
<circle cx="743" cy="372.3" r="1.7" fill="#f2ee00" />
<circle cx="977" cy="372.3" r="1.7" fill="#f2ee00" />
<circle cx="822" cy="372.3" r="1.7" fill="#f2ee00" />
<rect x="893.7" y="368.814" width="17.6" height="6.640000000000001" fill="#fff" />
<text x="902.5" y="375.288" font-size="8.3" fill="#111" stroke="#111" stroke-width="0.3" text-anchor="middle">6.91</text>
<line x1="552.0" y1="399.4" x2="703.5" y2="399.4" stroke="#35595c" stroke-width="1.2" />
<circle cx="553.5" cy="399.4" r="1.7" fill="#f2ee00" />
<circle cx="702" cy="399.4" r="1.7" fill="#f2ee00" />
<text x="628" y="397.668" font-size="8.8" fill="#111" stroke="#111" stroke-width="0.3" text-anchor="middle">6.58</text>
<line x1="553.5" y1="517.2" x2="645.2" y2="517.2" stroke="#35595c" stroke-width="1.2" />
<circle cx="555" cy="517.2" r="1.7" fill="#f2ee00" />
<circle cx="643.7" cy="517.2" r="1.7" fill="#f2ee00" />
<text x="598.7" y="514.988" font-size="8.3" fill="#111" stroke="#111" stroke-width="0.3" text-anchor="middle">4.00</text>
<line x1="512.5" y1="509.4" x2="550.5" y2="509.4" stroke="#35595c" stroke-width="1.2" />
<circle cx="514" cy="509.4" r="1.7" fill="#f2ee00" />
<circle cx="549" cy="509.4" r="1.7" fill="#f2ee00" />
<rect x="520.4000000000001" y="505.914" width="17.6" height="6.640000000000001" fill="#fff" />
<text x="529.2" y="512.388" font-size="8.3" fill="#111" stroke="#111" stroke-width="0.3" text-anchor="middle">1.80</text>
<line x1="761.9" y1="500.8" x2="879.5" y2="500.8" stroke="#35595c" stroke-width="1.2" />
<circle cx="763.4" cy="500.8" r="1.7" fill="#f2ee00" />
<circle cx="878" cy="500.8" r="1.7" fill="#f2ee00" />
<text x="819.2" y="501.696" font-size="8.6" fill="#111" stroke="#111" stroke-width="0.3" text-anchor="middle">5.10</text>
<line x1="761.9" y1="511.4" x2="867.5" y2="511.4" stroke="#35595c" stroke-width="1.2" />
<circle cx="763.4" cy="511.4" r="1.7" fill="#f2ee00" />
<circle cx="866" cy="511.4" r="1.7" fill="#f2ee00" />
<circle cx="808" cy="511.4" r="1.7" fill="#f2ee00" />
<circle cx="820" cy="511.4" r="1.7" fill="#f2ee00" />
<rect x="775.3" y="507.95599999999996" width="17.4" height="6.56" fill="#fff" />
<text x="784" y="514.352" font-size="8.2" fill="#111" stroke="#111" stroke-width="0.3" text-anchor="middle">2.00</text>
<rect x="807.5" y="507.95599999999996" width="15" height="6.56" fill="#fff" />
<text x="815" y="514.352" font-size="8.2" fill="#111" stroke="#111" stroke-width="0.3" text-anchor="middle" textLength="14" lengthAdjust="spacingAndGlyphs">0.50</text>
<rect x="831.3" y="507.95599999999996" width="17.4" height="6.56" fill="#fff" />
<text x="840" y="514.352" font-size="8.2" fill="#111" stroke="#111" stroke-width="0.3" text-anchor="middle">2.00</text>
<line x1="730.5" y1="540" x2="879.5" y2="540" stroke="#35595c" stroke-width="1.2" />
<circle cx="732" cy="540" r="1.7" fill="#f2ee00" />
<circle cx="878" cy="540" r="1.7" fill="#f2ee00" />
<rect x="805.5" y="536.514" width="17.6" height="6.640000000000001" fill="#fff" />
<text x="814.3" y="542.988" font-size="8.3" fill="#111" stroke="#111" stroke-width="0.3" text-anchor="middle">5.49</text>
<line x1="876.5" y1="475.3" x2="978.5" y2="475.3" stroke="#35595c" stroke-width="1.2" />
<circle cx="878" cy="475.3" r="1.7" fill="#f2ee00" />
<circle cx="977" cy="475.3" r="1.7" fill="#f2ee00" />
<text x="927.9" y="473.288" font-size="8.3" fill="#111" stroke="#111" stroke-width="0.3" text-anchor="middle">4.40</text>
<text x="921" y="485.152" font-size="8.2" fill="#111" stroke="#111" stroke-width="0.3" text-anchor="middle">1.00</text>
<line x1="975.7" y1="530.2" x2="1041.5" y2="530.2" stroke="#35595c" stroke-width="1.2" />
<circle cx="977.2" cy="530.2" r="1.7" fill="#f2ee00" />
<circle cx="1040" cy="530.2" r="1.7" fill="#f2ee00" />
<text x="1009.5" y="528.288" font-size="8.3" fill="#111" stroke="#111" stroke-width="0.3" text-anchor="middle">2.81</text>
<line x1="686.9" y1="572.8" x2="719.4" y2="572.8" stroke="#35595c" stroke-width="1.2" />
<circle cx="688.4" cy="572.8" r="1.7" fill="#f2ee00" />
<circle cx="717.9" cy="572.8" r="1.7" fill="#f2ee00" />
<text x="703" y="570.5880000000001" font-size="8.3" fill="#111" stroke="#111" stroke-width="0.3" text-anchor="middle">1.30</text>
<line x1="553.1" y1="572.2" x2="643.5" y2="572.2" stroke="#35595c" stroke-width="1.2" />
<circle cx="554.6" cy="572.2" r="1.7" fill="#f2ee00" />
<circle cx="642" cy="572.2" r="1.7" fill="#f2ee00" />
<circle cx="598" cy="572.2" r="1.7" fill="#f2ee00" />
<text x="574" y="569.88" font-size="8" fill="#111" stroke="#111" stroke-width="0.3" text-anchor="middle">1.80</text>
<text x="622.6" y="569.88" font-size="8" fill="#111" stroke="#111" stroke-width="0.3" text-anchor="middle">1.80</text>
<line x1="656.3" y1="594.8" x2="686.5" y2="594.8" stroke="#35595c" stroke-width="1.2" />
<circle cx="657.8" cy="594.8" r="1.7" fill="#f2ee00" />
<circle cx="685" cy="594.8" r="1.7" fill="#f2ee00" />
<rect x="660.2" y="591.314" width="17.6" height="6.640000000000001" fill="#fff" />
<text x="669" y="597.788" font-size="8.3" fill="#111" stroke="#111" stroke-width="0.3" text-anchor="middle">1.00</text>
<line x1="553.1" y1="656.7" x2="686.5" y2="656.7" stroke="#35595c" stroke-width="1.2" />
<circle cx="554.6" cy="656.7" r="1.7" fill="#f2ee00" />
<circle cx="685" cy="656.7" r="1.7" fill="#f2ee00" />
<rect x="608.9" y="653.0880000000001" width="18.2" height="6.88" fill="#fff" />
<text x="618" y="659.796" font-size="8.6" fill="#111" stroke="#111" stroke-width="0.3" text-anchor="middle">5.80</text>
<line x1="512.5" y1="655.6" x2="550.5" y2="655.6" stroke="#35595c" stroke-width="1.2" />
<circle cx="514" cy="655.6" r="1.7" fill="#f2ee00" />
<circle cx="549" cy="655.6" r="1.7" fill="#f2ee00" />
<rect x="512.9000000000001" y="652.114" width="17.6" height="6.640000000000001" fill="#fff" />
<text x="521.7" y="658.5880000000001" font-size="8.3" fill="#111" stroke="#111" stroke-width="0.3" text-anchor="middle">0.88</text>
<line x1="507.5" y1="707" x2="686.5" y2="707" stroke="#35595c" stroke-width="1.2" />
<circle cx="509" cy="707" r="1.7" fill="#f2ee00" />
<circle cx="685" cy="707" r="1.7" fill="#f2ee00" />
<text x="596.6" y="704.496" font-size="8.6" fill="#111" stroke="#111" stroke-width="0.3" text-anchor="middle">7.80</text>
<line x1="655.5" y1="693.5" x2="686.5" y2="693.5" stroke="#35595c" stroke-width="1.2" />
<circle cx="657" cy="693.5" r="1.7" fill="#f2ee00" />
<circle cx="685" cy="693.5" r="1.7" fill="#f2ee00" />
<rect x="659.2" y="690.014" width="17.6" height="6.640000000000001" fill="#fff" />
<text x="668" y="696.488" font-size="8.3" fill="#111" stroke="#111" stroke-width="0.3" text-anchor="middle">1.00</text>
<line x1="688.0" y1="709.3" x2="763.5" y2="709.3" stroke="#35595c" stroke-width="1.2" />
<circle cx="689.5" cy="709.3" r="1.7" fill="#f2ee00" />
<circle cx="762" cy="709.3" r="1.7" fill="#f2ee00" />
<rect x="710.2" y="705.814" width="17.6" height="6.640000000000001" fill="#fff" />
<text x="719" y="712.288" font-size="8.3" fill="#111" stroke="#111" stroke-width="0.3" text-anchor="middle">3.20</text>
<line x1="884.5" y1="593.7" x2="933.5" y2="593.7" stroke="#35595c" stroke-width="1.2" />
<circle cx="886" cy="593.7" r="1.7" fill="#f2ee00" />
<circle cx="932" cy="593.7" r="1.7" fill="#f2ee00" />
<text x="909.3" y="590.988" font-size="8.3" fill="#111" stroke="#111" stroke-width="0.3" text-anchor="middle">2.00</text>
<line x1="934.5" y1="600" x2="1031.5" y2="600" stroke="#35595c" stroke-width="1.2" />
<circle cx="936" cy="600" r="1.7" fill="#f2ee00" />
<circle cx="1030" cy="600" r="1.7" fill="#f2ee00" />
<text x="988.6" y="597.788" font-size="8.3" fill="#111" stroke="#111" stroke-width="0.3" text-anchor="middle">3.60</text>
<line x1="930.5" y1="622" x2="1041.5" y2="622" stroke="#35595c" stroke-width="1.2" />
<circle cx="932" cy="622" r="1.7" fill="#f2ee00" />
<circle cx="1040" cy="622" r="1.7" fill="#f2ee00" />
<text x="986.3" y="619.988" font-size="8.3" fill="#111" stroke="#111" stroke-width="0.3" text-anchor="middle">4.80</text>
<line x1="884.5" y1="702.5" x2="1040.5" y2="702.5" stroke="#35595c" stroke-width="1.2" />
<circle cx="886" cy="702.5" r="1.7" fill="#f2ee00" />
<circle cx="1039" cy="702.5" r="1.7" fill="#f2ee00" />
<text x="963.7" y="700.288" font-size="8.3" fill="#111" stroke="#111" stroke-width="0.3" text-anchor="middle">6.80</text>
<line x1="795.5" y1="702.5" x2="887.5" y2="702.5" stroke="#35595c" stroke-width="1.2" />
<circle cx="797" cy="702.5" r="1.7" fill="#f2ee00" />
<circle cx="886" cy="702.5" r="1.7" fill="#f2ee00" />
<line x1="761.5" y1="624.3" x2="798.5" y2="624.3" stroke="#35595c" stroke-width="1.2" />
<circle cx="763" cy="624.3" r="1.7" fill="#f2ee00" />
<circle cx="797" cy="624.3" r="1.7" fill="#f2ee00" />
<rect x="771.2" y="620.814" width="17.6" height="6.640000000000001" fill="#fff" />
<text x="780" y="627.288" font-size="8.3" fill="#111" stroke="#111" stroke-width="0.3" text-anchor="middle">1.50</text>
<text x="945.5" y="603.308" font-size="7.8" fill="#111" stroke="#111" stroke-width="0.3" text-anchor="middle">.50</text>
<text x="739.4" y="622.608" font-size="7.8" fill="#111" stroke="#111" stroke-width="0.3" text-anchor="middle">1.60</text>
<text x="704.3" y="614.608" font-size="7.8" fill="#111" stroke="#111" stroke-width="0.3" text-anchor="middle">1.30</text>
<text x="605.6" y="601.008" font-size="7.8" fill="#111" stroke="#111" stroke-width="0.3" text-anchor="middle">4.60</text>
<text x="782" y="693.808" font-size="7.8" fill="#111" stroke="#111" stroke-width="0.3" text-anchor="middle">1.20</text>
<text x="1028" y="613.34" font-size="6.5" fill="#111" stroke="#111" stroke-width="0.3" text-anchor="middle">0.5</text>
<text x="778" y="534.808" font-size="7.8" fill="#111" stroke="#111" stroke-width="0.3" text-anchor="middle">1.00</text>
<text x="955" y="493.34" font-size="6.5" fill="#111" stroke="#111" stroke-width="0.3" text-anchor="middle">1.50</text>
<line x1="687.5" y1="627" x2="720.5" y2="627" stroke="#35595c" stroke-width="1.2" />
<circle cx="689" cy="627" r="1.7" fill="#f2ee00" />
<circle cx="719" cy="627" r="1.7" fill="#f2ee00" />
<line x1="543.3" y1="402.2" x2="543.3" y2="504.3" stroke="#35595c" stroke-width="1.2" />
<circle cx="543.3" cy="403.7" r="1.7" fill="#f2ee00" />
<circle cx="543.3" cy="502.8" r="1.7" fill="#f2ee00" />
<text x="538" y="456.188" font-size="8.3" fill="#111" stroke="#111" stroke-width="0.3" text-anchor="middle" transform="rotate(-90 538 453.2)">4.40</text>
<line x1="568.4" y1="388.5" x2="568.4" y2="531.5" stroke="#35595c" stroke-width="1.2" />
<circle cx="568.4" cy="390" r="1.7" fill="#f2ee00" />
<circle cx="568.4" cy="530" r="1.7" fill="#f2ee00" />
<text x="564" y="460.988" font-size="8.3" fill="#111" stroke="#111" stroke-width="0.3" text-anchor="middle" transform="rotate(-90 564 458)">6.25</text>
<line x1="696.2" y1="402.2" x2="696.2" y2="473.0" stroke="#35595c" stroke-width="1.2" />
<circle cx="696.2" cy="403.7" r="1.7" fill="#f2ee00" />
<circle cx="696.2" cy="471.5" r="1.7" fill="#f2ee00" />
<text x="691.7" y="440.588" font-size="8.3" fill="#111" stroke="#111" stroke-width="0.3" text-anchor="middle" transform="rotate(-90 691.7 437.6)">3.00</text>
<line x1="860" y1="386" x2="868" y2="523" stroke="#35595c" stroke-width="1.2" />
<circle cx="860" cy="386" r="1.7" fill="#f2ee00" />
<circle cx="868" cy="523" r="1.7" fill="#f2ee00" />
<text x="867.5" y="457.952" font-size="8.2" fill="#111" stroke="#111" stroke-width="0.3" text-anchor="middle" transform="rotate(90 867.5 455)">6.13</text>
<line x1="902.2" y1="384.5" x2="902.2" y2="490.5" stroke="#35595c" stroke-width="1.2" />
<circle cx="902.2" cy="386" r="1.7" fill="#f2ee00" />
<circle cx="902.2" cy="489" r="1.7" fill="#f2ee00" />
<text x="896.6" y="441.488" font-size="8.3" fill="#111" stroke="#111" stroke-width="0.3" text-anchor="middle" transform="rotate(-90 896.6 438.5)">4.62</text>
<line x1="1027.8" y1="457.2" x2="1027.8" y2="540.9" stroke="#35595c" stroke-width="1.2" />
<circle cx="1027.8" cy="458.7" r="1.7" fill="#f2ee00" />
<circle cx="1027.8" cy="539.4" r="1.7" fill="#f2ee00" />
<text x="1022.3" y="502.288" font-size="8.3" fill="#111" stroke="#111" stroke-width="0.3" text-anchor="middle" transform="rotate(-90 1022.3 499.3)">3.64</text>
<line x1="985" y1="503.5" x2="985" y2="528.8" stroke="#35595c" stroke-width="1.2" />
<circle cx="985" cy="505" r="1.7" fill="#f2ee00" />
<circle cx="985" cy="527.3" r="1.7" fill="#f2ee00" />
<text x="979.5" y="518.988" font-size="8.3" fill="#111" stroke="#111" stroke-width="0.3" text-anchor="middle" transform="rotate(-90 979.5 516)">1.00</text>
<line x1="606.8" y1="533.5" x2="606.8" y2="568.5" stroke="#35595c" stroke-width="1.2" />
<circle cx="606.8" cy="535" r="1.7" fill="#f2ee00" />
<circle cx="606.8" cy="567" r="1.7" fill="#f2ee00" />
<text x="602.2" y="551.288" font-size="8.3" fill="#111" stroke="#111" stroke-width="0.3" text-anchor="middle" transform="rotate(-90 602.2 548.3)">1.00</text>
<line x1="648.7" y1="533.5" x2="648.7" y2="568.5" stroke="#35595c" stroke-width="1.2" />
<circle cx="648.7" cy="535" r="1.7" fill="#f2ee00" />
<circle cx="648.7" cy="567" r="1.7" fill="#f2ee00" />
<text x="643" y="550.988" font-size="8.3" fill="#111" stroke="#111" stroke-width="0.3" text-anchor="middle" transform="rotate(-90 643 548)">1.40</text>
<line x1="539.4" y1="603.5" x2="539.4" y2="651.9" stroke="#35595c" stroke-width="1.2" />
<circle cx="539.4" cy="605" r="1.7" fill="#f2ee00" />
<circle cx="539.4" cy="650.4" r="1.7" fill="#f2ee00" />
<text x="534.2" y="631.788" font-size="8.3" fill="#111" stroke="#111" stroke-width="0.3" text-anchor="middle" transform="rotate(-90 534.2 628.8)">2.00</text>
<line x1="536.5" y1="539.5" x2="536.5" y2="564.5" stroke="#35595c" stroke-width="1.2" />
<circle cx="536.5" cy="541" r="1.7" fill="#f2ee00" />
<circle cx="536.5" cy="563" r="1.7" fill="#f2ee00" />
<text x="532.5" y="553.988" font-size="8.3" fill="#111" stroke="#111" stroke-width="0.3" text-anchor="middle" transform="rotate(-90 532.5 551)">0.86</text>
<line x1="565.4" y1="533.5" x2="565.4" y2="581.5" stroke="#35595c" stroke-width="1.2" />
<circle cx="565.4" cy="535" r="1.7" fill="#f2ee00" />
<circle cx="565.4" cy="580" r="1.7" fill="#f2ee00" />
<text x="560.2" y="558.988" font-size="8.3" fill="#111" stroke="#111" stroke-width="0.3" text-anchor="middle" transform="rotate(-90 560.2 556)">2.00</text>
<line x1="625.2" y1="533.5" x2="625.2" y2="581.5" stroke="#35595c" stroke-width="1.2" />
<circle cx="625.2" cy="535" r="1.7" fill="#f2ee00" />
<circle cx="625.2" cy="580" r="1.7" fill="#f2ee00" />
<text x="619" y="555.988" font-size="8.3" fill="#111" stroke="#111" stroke-width="0.3" text-anchor="middle" transform="rotate(-90 619 553)">0.80</text>
<line x1="771" y1="526.5" x2="771" y2="587.5" stroke="#35595c" stroke-width="1.2" />
<circle cx="771" cy="528" r="1.7" fill="#f2ee00" />
<circle cx="771" cy="586" r="1.7" fill="#f2ee00" />
<text x="765.5" y="561.488" font-size="8.3" fill="#111" stroke="#111" stroke-width="0.3" text-anchor="middle" transform="rotate(-90 765.5 558.5)">2.60</text>
<line x1="567" y1="672.5" x2="567" y2="716.5" stroke="#35595c" stroke-width="1.2" />
<circle cx="567" cy="674" r="1.7" fill="#f2ee00" />
<circle cx="567" cy="715" r="1.7" fill="#f2ee00" />
<text x="568.5" y="699.988" font-size="8.3" fill="#111" stroke="#111" stroke-width="0.3" text-anchor="middle" transform="rotate(-90 568.5 697)">1.80</text>
<text x="724.7" y="697.408" font-size="7.8" fill="#111" stroke="#111" stroke-width="0.3" text-anchor="middle" transform="rotate(-90 724.7 694.6)">1.80</text>
<line x1="810.6" y1="585.5" x2="810.6" y2="716.5" stroke="#35595c" stroke-width="1.2" />
<circle cx="810.6" cy="587" r="1.7" fill="#f2ee00" />
<circle cx="810.6" cy="715" r="1.7" fill="#f2ee00" />
<text x="805.5" y="653.388" font-size="8.3" fill="#111" stroke="#111" stroke-width="0.3" text-anchor="middle" transform="rotate(-90 805.5 650.4)">5.70</text>
<line x1="898.5" y1="609.5" x2="898.5" y2="715.5" stroke="#35595c" stroke-width="1.2" />
<circle cx="898.5" cy="611" r="1.7" fill="#f2ee00" />
<circle cx="898.5" cy="714" r="1.7" fill="#f2ee00" />
<text x="894.5" y="664.6880000000001" font-size="8.3" fill="#111" stroke="#111" stroke-width="0.3" text-anchor="middle" transform="rotate(-90 894.5 661.7)">1.80</text>
<line x1="1028" y1="638.5" x2="1028" y2="715.5" stroke="#35595c" stroke-width="1.2" />
<circle cx="1028" cy="640" r="1.7" fill="#f2ee00" />
<circle cx="1028" cy="714" r="1.7" fill="#f2ee00" />
<text x="1023.8" y="666.988" font-size="8.3" fill="#111" stroke="#111" stroke-width="0.3" text-anchor="middle" transform="rotate(-90 1023.8 664)">4.60</text>
<line x1="1057.8" y1="605.8" x2="1057.8" y2="725.5" stroke="#35595c" stroke-width="1.2" />
<circle cx="1057.8" cy="607.3" r="1.7" fill="#f2ee00" />
<circle cx="1057.8" cy="724" r="1.7" fill="#f2ee00" />
<text x="1052" y="667.988" font-size="8.3" fill="#111" stroke="#111" stroke-width="0.3" text-anchor="middle" transform="rotate(-90 1052 665)">5.19</text>
<line x1="964.8" y1="538.9" x2="964.8" y2="600.9" stroke="#35595c" stroke-width="1.2" />
<circle cx="964.8" cy="540.4" r="1.7" fill="#f2ee00" />
<circle cx="964.8" cy="599.4" r="1.7" fill="#f2ee00" />
<text x="960.3" y="578.5880000000001" font-size="8.3" fill="#111" stroke="#111" stroke-width="0.3" text-anchor="middle" transform="rotate(-90 960.3 575.6)">2.81</text>
<text x="934.2" y="571.608" font-size="7.8" fill="#111" stroke="#111" stroke-width="0.3" text-anchor="middle" transform="rotate(-90 934.2 568.8)">1.50</text>
<line x1="1050.5" y1="538.9" x2="1050.5" y2="587.3" stroke="#35595c" stroke-width="1.2" />
<circle cx="1050.5" cy="540.4" r="1.7" fill="#f2ee00" />
<circle cx="1050.5" cy="585.8" r="1.7" fill="#f2ee00" />
<text x="1045.5" y="566.988" font-size="8.3" fill="#111" stroke="#111" stroke-width="0.3" text-anchor="middle" transform="rotate(-90 1045.5 564)">2.50</text>
<text x="703" y="633.808" font-size="7.8" fill="#111" stroke="#111" stroke-width="0.3" text-anchor="middle" transform="rotate(-90 703 631)">3.10</text>
<text x="689" y="663.408" font-size="7.8" fill="#111" stroke="#111" stroke-width="0.3" text-anchor="middle" transform="rotate(-90 689 660.6)">1.00</text>
<text x="725.8" y="613.508" font-size="7.8" fill="#111" stroke="#111" stroke-width="0.3" text-anchor="middle" transform="rotate(-90 725.8 610.7)">1.80</text>
<text x="748" y="662.34" font-size="6.5" fill="#111" stroke="#111" stroke-width="0.3" text-anchor="middle" transform="rotate(-90 748 660)">1.30</text>
<text x="743" y="696.34" font-size="6.5" fill="#111" stroke="#111" stroke-width="0.3" text-anchor="middle" transform="rotate(-90 743 694)">3.80</text>
<text x="882.5" y="519.34" font-size="6.5" fill="#111" stroke="#111" stroke-width="0.3" text-anchor="middle" transform="rotate(-90 882.5 517)">1.20</text>
<line x1="926" y1="510.5" x2="926" y2="541.5" stroke="#35595c" stroke-width="1.2" />
<circle cx="926" cy="512" r="1.7" fill="#f2ee00" />
<circle cx="926" cy="540" r="1.7" fill="#f2ee00" />
<text x="922" y="528.988" font-size="8.3" fill="#111" stroke="#111" stroke-width="0.3" text-anchor="middle" transform="rotate(-90 922 526)">1.00</text>
<line x1="722" y1="390.5" x2="722" y2="400.5" stroke="#35595c" stroke-width="1.2" />
<circle cx="722" cy="392" r="1.7" fill="#f2ee00" />
<circle cx="722" cy="399" r="1.7" fill="#f2ee00" />
<text x="722" y="397.3" font-size="5" fill="#111" stroke="#111" stroke-width="0.3" text-anchor="middle" transform="rotate(-90 722 395.5)">40</text>
<line x1="707" y1="530.5" x2="707" y2="546.5" stroke="#35595c" stroke-width="1.2" />
<circle cx="707" cy="532" r="1.7" fill="#f2ee00" />
<circle cx="707" cy="545" r="1.7" fill="#f2ee00" />
<line x1="645.7" y1="532" x2="703.4" y2="482.6" stroke="#35595c" stroke-width="1.2" />
<circle cx="645.7" cy="532" r="1.7" fill="#f2ee00" />
<circle cx="703.4" cy="482.6" r="1.7" fill="#f2ee00" />
<text x="669" y="504.096" font-size="8.6" fill="#111" stroke="#111" stroke-width="0.3" text-anchor="middle" transform="rotate(-41 669 501)">3.40</text>
<line x1="720.4" y1="463" x2="767.3" y2="510" stroke="#35595c" stroke-width="1.2" />
<circle cx="720.4" cy="463" r="1.7" fill="#f2ee00" />
<circle cx="767.3" cy="510" r="1.7" fill="#f2ee00" />
<text x="749.5" y="484.596" font-size="8.6" fill="#111" stroke="#111" stroke-width="0.3" text-anchor="middle" transform="rotate(45 749.5 481.5)">3.00</text>
<line x1="707.6" y1="494.4" x2="737" y2="523.7" stroke="#35595c" stroke-width="1.2" />
<circle cx="707.6" cy="494.4" r="1.7" fill="#f2ee00" />
<circle cx="737" cy="523.7" r="1.7" fill="#f2ee00" />
<text x="727.5" y="507.52" font-size="7" fill="#111" stroke="#111" stroke-width="0.3" text-anchor="middle" transform="rotate(45 727.5 505)">1.82</text>
<path d="M547.5 438.5 L542.8 446.3 L533.2 446.3 L528.5 438.5 L533.2 430.7 L542.8 430.7 Z" fill="none" stroke="#b08860" stroke-width="1.2" />
<line x1="530.4" y1="438.5" x2="545.6" y2="438.5" stroke="#999" stroke-width="0.8" />
<text x="538" y="445.5" font-size="7.5" fill="#222" text-anchor="middle" >6</text>
<text x="541" y="436.5" font-size="5" fill="#222" text-anchor="middle" font-weight="bold" >A</text>
<path d="M726.9 440.5 L722.1 448.3 L712.6 448.3 L707.9 440.5 L712.6 432.7 L722.1 432.7 Z" fill="none" stroke="#b08860" stroke-width="1.2" />
<line x1="709.8" y1="440.5" x2="725.0" y2="440.5" stroke="#999" stroke-width="0.8" />
<text x="717.4" y="447.5" font-size="7.5" fill="#222" text-anchor="middle" >2</text>
<text x="720.4" y="438.5" font-size="5" fill="#222" text-anchor="middle" font-weight="bold" >A</text>
<path d="M807.2 515.0 L802.5 522.8 L793.0 522.8 L788.2 515.0 L793.0 507.2 L802.5 507.2 Z" fill="none" stroke="#b08860" stroke-width="1.2" />
<line x1="790.1" y1="515" x2="805.3000000000001" y2="515" stroke="#999" stroke-width="0.8" />
<text x="797.7" y="522" font-size="7.5" fill="#222" text-anchor="middle" >1</text>
<text x="800.7" y="513" font-size="5" fill="#222" text-anchor="middle" font-weight="bold" >A</text>
<path d="M865.9 515.0 L861.1 522.8 L851.6 522.8 L846.9 515.0 L851.6 507.2 L861.1 507.2 Z" fill="none" stroke="#b08860" stroke-width="1.2" />
<line x1="848.8" y1="515" x2="864.0" y2="515" stroke="#999" stroke-width="0.8" />
<text x="856.4" y="522" font-size="7.5" fill="#222" text-anchor="middle" >1</text>
<text x="859.4" y="513" font-size="5" fill="#222" text-anchor="middle" font-weight="bold" >A</text>
<path d="M914.9 481.6 L910.1 489.4 L900.6 489.4 L895.9 481.6 L900.6 473.8 L910.1 473.8 Z" fill="none" stroke="#b08860" stroke-width="1.2" />
<line x1="897.8" y1="481.6" x2="913.0" y2="481.6" stroke="#999" stroke-width="0.8" />
<text x="905.4" y="488.6" font-size="7.5" fill="#222" text-anchor="middle" >4</text>
<text x="908.4" y="479.6" font-size="5" fill="#222" text-anchor="middle" font-weight="bold" >A</text>
<path d="M1019.5 598.2 L1014.8 606.0 L1005.2 606.0 L1000.5 598.2 L1005.2 590.4 L1014.8 590.4 Z" fill="none" stroke="#b08860" stroke-width="1.2" />
<line x1="1002.4" y1="598.2" x2="1017.6" y2="598.2" stroke="#999" stroke-width="0.8" />
<text x="1010" y="605.2" font-size="7.5" fill="#222" text-anchor="middle" >5</text>
<text x="1013" y="596.2" font-size="5" fill="#222" text-anchor="middle" font-weight="bold" >A</text>
<path d="M548.3 557.4 L543.5 565.2 L534.0 565.2 L529.3 557.4 L534.0 549.6 L543.5 549.6 Z" fill="none" stroke="#b08860" stroke-width="1.2" />
<line x1="531.1999999999999" y1="557.4" x2="546.4" y2="557.4" stroke="#999" stroke-width="0.8" />
<text x="538.8" y="564.4" font-size="7.5" fill="#222" text-anchor="middle" >3</text>
<text x="541.8" y="555.4" font-size="5" fill="#222" text-anchor="middle" font-weight="bold" >A</text>
<path d="M548.3 633.4 L543.5 641.2 L534.0 641.2 L529.3 633.4 L534.0 625.6 L543.5 625.6 Z" fill="none" stroke="#b08860" stroke-width="1.2" />
<line x1="531.1999999999999" y1="633.4" x2="546.4" y2="633.4" stroke="#999" stroke-width="0.8" />
<text x="538.8" y="640.4" font-size="7.5" fill="#222" text-anchor="middle" >2</text>
<text x="541.8" y="631.4" font-size="5" fill="#222" text-anchor="middle" font-weight="bold" >A</text>
<circle cx="522.9" cy="392.3" r="6" fill="none" stroke="#b08860" stroke-width="1.2" />
<line x1="518.1" y1="392.3" x2="527.6999999999999" y2="392.3" stroke="#999" stroke-width="0.7" />
<text x="522.9" y="397.3" font-size="4.5" fill="#222" text-anchor="middle" font-weight="bold" >2</text>
<text x="524.9" y="390.8" font-size="3.5" fill="#222" text-anchor="middle" font-weight="bold" >F</text>
<circle cx="774.2" cy="399" r="6" fill="none" stroke="#b08860" stroke-width="1.2" />
<line x1="769.4000000000001" y1="399" x2="779.0" y2="399" stroke="#999" stroke-width="0.7" />
<text x="774.2" y="404" font-size="4.5" fill="#222" text-anchor="middle" font-weight="bold" >1</text>
<text x="776.2" y="397.5" font-size="3.5" fill="#222" text-anchor="middle" font-weight="bold" >F</text>
<circle cx="734" cy="498.3" r="6" fill="none" stroke="#b08860" stroke-width="1.2" />
<line x1="729.2" y1="498.3" x2="738.8" y2="498.3" stroke="#999" stroke-width="0.7" />
<text x="734" y="503.3" font-size="4.5" fill="#222" text-anchor="middle" font-weight="bold" >7</text>
<text x="736" y="496.8" font-size="3.5" fill="#222" text-anchor="middle" font-weight="bold" >F</text>
<circle cx="1008.2" cy="427.8" r="6" fill="none" stroke="#b08860" stroke-width="1.2" />
<line x1="1003.4000000000001" y1="427.8" x2="1013.0" y2="427.8" stroke="#999" stroke-width="0.7" />
<text x="1008.2" y="432.8" font-size="4.5" fill="#222" text-anchor="middle" font-weight="bold" >8</text>
<text x="1010.2" y="426.3" font-size="3.5" fill="#222" text-anchor="middle" font-weight="bold" >F</text>
<circle cx="1039.2" cy="550.6" r="6" fill="none" stroke="#b08860" stroke-width="1.2" />
<line x1="1034.4" y1="550.6" x2="1044.0" y2="550.6" stroke="#999" stroke-width="0.7" />
<text x="1039.2" y="555.6" font-size="4.5" fill="#222" text-anchor="middle" font-weight="bold" >6</text>
<text x="1041.2" y="549.1" font-size="3.5" fill="#222" text-anchor="middle" font-weight="bold" >F</text>
<circle cx="669" cy="583.5" r="6" fill="none" stroke="#b08860" stroke-width="1.2" />
<line x1="664.2" y1="583.5" x2="673.8" y2="583.5" stroke="#999" stroke-width="0.7" />
<text x="669" y="588.5" font-size="4.5" fill="#222" text-anchor="middle" font-weight="bold" >2</text>
<text x="671" y="582.0" font-size="3.5" fill="#222" text-anchor="middle" font-weight="bold" >F</text>
<circle cx="672.5" cy="664" r="6" fill="none" stroke="#b08860" stroke-width="1.2" />
<line x1="667.7" y1="664" x2="677.3" y2="664" stroke="#999" stroke-width="0.7" />
<text x="672.5" y="669" font-size="4.5" fill="#222" text-anchor="middle" font-weight="bold" >4</text>
<text x="674.5" y="662.5" font-size="3.5" fill="#222" text-anchor="middle" font-weight="bold" >F</text>
<circle cx="696.3" cy="656" r="6" fill="none" stroke="#b08860" stroke-width="1.2" />
<line x1="691.5" y1="656" x2="701.0999999999999" y2="656" stroke="#999" stroke-width="0.7" />
<text x="696.3" y="661" font-size="4.5" fill="#222" text-anchor="middle" font-weight="bold" >4</text>
<text x="698.3" y="654.5" font-size="3.5" fill="#222" text-anchor="middle" font-weight="bold" >F</text>
<circle cx="521.7" cy="672.4" r="6" fill="none" stroke="#b08860" stroke-width="1.2" />
<line x1="516.9000000000001" y1="672.4" x2="526.5" y2="672.4" stroke="#999" stroke-width="0.7" />
<text x="521.7" y="677.4" font-size="4.5" fill="#222" text-anchor="middle" font-weight="bold" >3</text>
<text x="523.7" y="670.9" font-size="3.5" fill="#222" text-anchor="middle" font-weight="bold" >F</text>
<circle cx="690.7" cy="686.7" r="6" fill="none" stroke="#b08860" stroke-width="1.2" />
<line x1="685.9000000000001" y1="686.7" x2="695.5" y2="686.7" stroke="#999" stroke-width="0.7" />
<text x="690.7" y="691.7" font-size="4.5" fill="#222" text-anchor="middle" font-weight="bold" >3</text>
<text x="692.7" y="685.2" font-size="3.5" fill="#222" text-anchor="middle" font-weight="bold" >F</text>
<circle cx="592" cy="549.5" r="6" fill="none" stroke="#b08860" stroke-width="1.2" />
<line x1="587.2" y1="549.5" x2="596.8" y2="549.5" stroke="#999" stroke-width="0.7" />
<text x="592" y="554.5" font-size="4.5" fill="#222" text-anchor="middle" font-weight="bold" >5</text>
<text x="594" y="548.0" font-size="3.5" fill="#222" text-anchor="middle" font-weight="bold" >F</text>
<circle cx="765.5" cy="689" r="6" fill="none" stroke="#b08860" stroke-width="1.2" />
<line x1="760.7" y1="689" x2="770.3" y2="689" stroke="#999" stroke-width="0.7" />
<text x="765.5" y="694" font-size="4.5" fill="#222" text-anchor="middle" font-weight="bold" >5</text>
<text x="767.5" y="687.5" font-size="3.5" fill="#222" text-anchor="middle" font-weight="bold" >F</text>
<circle cx="942" cy="524.9" r="6" fill="none" stroke="#b08860" stroke-width="1.2" />
<line x1="937.2" y1="524.9" x2="946.8" y2="524.9" stroke="#999" stroke-width="0.7" />
<text x="942" y="529.9" font-size="4.5" fill="#222" text-anchor="middle" font-weight="bold" >5</text>
<text x="944" y="523.4" font-size="3.5" fill="#222" text-anchor="middle" font-weight="bold" >F</text>
<circle cx="942" cy="571" r="6" fill="none" stroke="#b08860" stroke-width="1.2" />
<line x1="937.2" y1="571" x2="946.8" y2="571" stroke="#999" stroke-width="0.7" />
<text x="942" y="576" font-size="4.5" fill="#222" text-anchor="middle" font-weight="bold" >5</text>
<text x="944" y="569.5" font-size="3.5" fill="#222" text-anchor="middle" font-weight="bold" >F</text>
<ellipse cx="532.1" cy="526" rx="7" ry="4.2" fill="none" stroke="#b08860" stroke-width="1"/>
<text x="532.1" y="527.8" font-size="3.6" fill="#4a9ae8" text-anchor="middle" font-weight="bold" >±0.0</text>
<ellipse cx="649.6" cy="486.5" rx="7" ry="4.2" fill="none" stroke="#b08860" stroke-width="1"/>
<text x="649.6" y="488.3" font-size="3.6" fill="#4a9ae8" text-anchor="middle" font-weight="bold" >±0.0</text>
<ellipse cx="683.8" cy="539" rx="7" ry="4.2" fill="none" stroke="#b08860" stroke-width="1"/>
<text x="683.8" y="540.8" font-size="3.6" fill="#4a9ae8" text-anchor="middle" font-weight="bold" >±0.0</text>
<ellipse cx="744" cy="580" rx="7" ry="4.2" fill="none" stroke="#b08860" stroke-width="1"/>
<text x="744" y="581.8" font-size="3.6" fill="#4a9ae8" text-anchor="middle" font-weight="bold" >±0.0</text>
<ellipse cx="744" cy="613" rx="7" ry="4.2" fill="none" stroke="#b08860" stroke-width="1"/>
<text x="744" y="614.8" font-size="3.6" fill="#4a9ae8" text-anchor="middle" font-weight="bold" >±0.0</text>
<ellipse cx="615.9" cy="648" rx="7" ry="4.2" fill="none" stroke="#b08860" stroke-width="1"/>
<text x="615.9" y="649.8" font-size="3.6" fill="#4a9ae8" text-anchor="middle" font-weight="bold" >±0.0</text>
<ellipse cx="594.3" cy="692.3" rx="7" ry="4.2" fill="none" stroke="#b08860" stroke-width="1"/>
<text x="594.3" y="694.0999999999999" font-size="3.6" fill="#4a9ae8" text-anchor="middle" font-weight="bold" >±0.0</text>
<ellipse cx="716.8" cy="700.3" rx="7" ry="4.2" fill="none" stroke="#b08860" stroke-width="1"/>
<text x="716.8" y="702.0999999999999" font-size="3.6" fill="#4a9ae8" text-anchor="middle" font-weight="bold" >±0.0</text>
<ellipse cx="904.7" cy="575.6" rx="7" ry="4.2" fill="none" stroke="#b08860" stroke-width="1"/>
<text x="904.7" y="577.4" font-size="3.6" fill="#4a9ae8" text-anchor="middle" font-weight="bold" >±0.0</text>
<ellipse cx="967" cy="655.6" rx="7" ry="4.2" fill="none" stroke="#b08860" stroke-width="1"/>
<text x="967" y="657.4" font-size="3.6" fill="#4a9ae8" text-anchor="middle" font-weight="bold" >±0.0</text>
<ellipse cx="844.6" cy="661" rx="7" ry="4.2" fill="none" stroke="#b08860" stroke-width="1"/>
<text x="844.6" y="662.8" font-size="3.6" fill="#4a9ae8" text-anchor="middle" font-weight="bold" >±0.0</text>
<ellipse cx="910.6" cy="522" rx="7" ry="4.2" fill="none" stroke="#b08860" stroke-width="1"/>
<text x="910.6" y="523.8" font-size="3.6" fill="#4a9ae8" text-anchor="middle" font-weight="bold" >±0.0</text>
<ellipse cx="572.8" cy="560.8" rx="7" ry="4.2" fill="none" stroke="#b08860" stroke-width="1"/>
<text x="572.8" y="562.5999999999999" font-size="3.6" fill="#4a9ae8" text-anchor="middle" font-weight="bold" >±0.0</text>
<ellipse cx="626" cy="552.9" rx="7" ry="4.2" fill="none" stroke="#b08860" stroke-width="1"/>
<text x="626" y="554.6999999999999" font-size="3.6" fill="#4a9ae8" text-anchor="middle" font-weight="bold" >±0.0</text>
<text x="649.6" y="498" font-size="7.5" fill="#f09a30" text-anchor="middle" textLength="44" lengthAdjust="spacingAndGlyphs" stroke="#f09a30" stroke-width="0.35">LIVING HALL</text>
<text x="693.6" y="480" font-size="8" fill="#b08860" text-anchor="middle" textLength="44" lengthAdjust="spacingAndGlyphs" stroke="#b08860" stroke-width="0.35">whg  hgudl</text>
<text x="616" y="641" font-size="7.5" fill="#f09a30" text-anchor="middle" textLength="33" lengthAdjust="spacingAndGlyphs" stroke="#f09a30" stroke-width="0.35">KITCHEN</text>
<text x="627" y="625" font-size="8" fill="#b08860" text-anchor="middle"  stroke="#b08860" stroke-width="0.35">l'fo</text>
<text x="585" y="550" font-size="7" fill="#b08860" text-anchor="middle"  stroke="#b08860" stroke-width="0.35">pllhL</text>
<text x="625" y="547" font-size="6" fill="#b08860" text-anchor="middle"  stroke="#b08860" stroke-width="0.35">pllhL</text>
<text x="564.8" y="692" font-size="7.5" fill="#b08860" text-anchor="middle"  stroke="#b08860" stroke-width="0.35">lsjuU</text>
<text x="646.5" y="692.5" font-size="8" fill="#b08860" text-anchor="middle"  stroke="#b08860" stroke-width="0.35">l'fo</text>
<text x="733.8" y="692.5" font-size="7.5" fill="#b08860" text-anchor="middle"  stroke="#b08860" stroke-width="0.35">ludG</text>
<text x="962.5" y="648.5" font-size="7.8" fill="#f09a30" text-anchor="middle" textLength="55" lengthAdjust="spacingAndGlyphs" stroke="#f09a30" stroke-width="0.35">MEN'S SALOON</text>
<text x="1003.4" y="633.5" font-size="8" fill="#b08860" text-anchor="middle"  stroke="#b08860" stroke-width="0.35">l[gS  vl]hG</text>
<text x="884.3" y="656" font-size="7.5" fill="#b08860" text-anchor="middle" textLength="46" lengthAdjust="spacingAndGlyphs" stroke="#b08860" stroke-width="0.35">whg   uhzgL</text>
<text x="796" y="686" font-size="7" fill="#b08860" text-anchor="middle"  stroke="#b08860" stroke-width="0.35">pllhL</text>
<text x="908" y="513" font-size="5" fill="#f09a30" text-anchor="middle"  stroke="#f09a30" stroke-width="0.35">lysgm</text>
<text x="958" y="509" font-size="5" fill="#f09a30" text-anchor="middle"  stroke="#f09a30" stroke-width="0.35">pllhL</text>
<text x="965" y="503" font-size="6" fill="#b08860" text-anchor="middle"  stroke="#b08860" stroke-width="0.35">plhL</text>
<rect x="0" y="0" width="1700" height="25" fill="#222933" />
<rect x="0" y="25" width="1700" height="122" fill="#3b4453" />
<rect x="0" y="146" width="1700" height="37" fill="#222933" />
<text x="-1" y="18" font-size="14.6" fill="#dfe3ea" >nsert</text>
<text x="54" y="18" font-size="14.6" fill="#dfe3ea" >Annotate</text>
<text x="138" y="18" font-size="14.6" fill="#dfe3ea" >Parametric</text>
<text x="231" y="18" font-size="14.6" fill="#dfe3ea" >View</text>
<text x="286" y="18" font-size="14.6" fill="#dfe3ea" >Manage</text>
<text x="362" y="18" font-size="14.6" fill="#dfe3ea" >Output</text>
<text x="431" y="18" font-size="14.6" fill="#dfe3ea" >Add-ins</text>
<text x="506" y="18" font-size="14.6" fill="#dfe3ea" >Collaborate</text>
<text x="607" y="18" font-size="14.6" fill="#dfe3ea" >Express Tools</text>
<text x="717" y="18" font-size="14.6" fill="#dfe3ea" >Featured Apps</text>
<rect x="848" y="8" width="18" height="10" fill="#e8ebf0" rx="1.5" />
<path d="M853 15 L861 15 L857 11 Z" fill="#444c5a" />
<path d="M871.8 11.4 L878.2 11.4 L875 15.1 Z" fill="#e8ebf0"/>
<line x1="189.5" y1="27" x2="189.5" y2="145" stroke="#2a313c" stroke-width="1.6" />
<line x1="500" y1="27" x2="500" y2="145" stroke="#2a313c" stroke-width="1.6" />
<line x1="707" y1="27" x2="707" y2="145" stroke="#2a313c" stroke-width="1.6" />
<line x1="1042" y1="27" x2="1042" y2="145" stroke="#2a313c" stroke-width="1.6" />
<line x1="1141" y1="27" x2="1141" y2="145" stroke="#2a313c" stroke-width="1.6" />
<line x1="1413" y1="27" x2="1413" y2="145" stroke="#2a313c" stroke-width="1.6" />
<line x1="1497" y1="27" x2="1497" y2="145" stroke="#2a313c" stroke-width="1.6" />
<line x1="1616" y1="27" x2="1616" y2="145" stroke="#2a313c" stroke-width="1.6" />
<text x="44" y="141" font-size="14.6" fill="#e8ebf0" text-anchor="middle" >Draw</text>
<text x="336" y="141" font-size="14.6" fill="#e8ebf0" text-anchor="middle" >Modify</text>
<text x="594" y="141" font-size="14.6" fill="#e8ebf0" text-anchor="middle" >Annotation</text>
<text x="866" y="141" font-size="14.6" fill="#e8ebf0" text-anchor="middle" >Layers</text>
<text x="1083" y="141" font-size="14.6" fill="#e8ebf0" text-anchor="middle" >Block</text>
<text x="1261" y="141" font-size="14.6" fill="#e8ebf0" text-anchor="middle" >Properties</text>
<text x="1446" y="141" font-size="14.6" fill="#e8ebf0" text-anchor="middle" >Groups</text>
<text x="1547" y="141" font-size="14.6" fill="#e8ebf0" text-anchor="middle" >Utilities</text>
<path d="M68.8 133.4 L77.2 133.4 L73 138.1 Z" fill="#e8ebf0"/>
<path d="M365.8 133.4 L374.2 133.4 L370 138.1 Z" fill="#e8ebf0"/>
<path d="M638.8 133.4 L647.2 133.4 L643 138.1 Z" fill="#e8ebf0"/>
<path d="M893.8 133.4 L902.2 133.4 L898 138.1 Z" fill="#e8ebf0"/>
<path d="M1108.8 133.4 L1117.2 133.4 L1113 138.1 Z" fill="#e8ebf0"/>
<path d="M1300.8 133.4 L1309.2 133.4 L1305 138.1 Z" fill="#e8ebf0"/>
<path d="M1476.8 133.4 L1485.2 133.4 L1481 138.1 Z" fill="#e8ebf0"/>
<path d="M1579.8 133.4 L1588.2 133.4 L1584 138.1 Z" fill="#e8ebf0"/>
<text x="1631" y="141" font-size="14.6" fill="#e8ebf0" >Clipboard</text>
<path d="M1401 132 L1406 137 M1406 133 L1406 137 L1402 137" fill="none" stroke="#cfd4dc" stroke-width="1.2" />
<path d="M0 151 L70 151 Q80 151 84 160 L92 178 L0 178 Z" fill="#2b323e" />
<path d="M88 182 L93 178 L100 160 Q104 151 114 151 L284 151 Q294 151 298 160 L306 178 L311 182 Z" fill="#3b4453" />
<rect x="0" y="178" width="1700" height="5" fill="#3b4453" />
<text x="187" y="171" font-size="15" fill="#eef0f4" text-anchor="middle" >معماري فهد محمد البراكة*</text>
<path d="M278 160 L288 170 M288 160 L278 170" fill="none" stroke="#cfd4dc" stroke-width="2" />
<path d="M312 178 L315 160 Q317 155 323 155 L330 155 Q337 155 339 161 L342 178 Z" fill="#2f3743" />
<path d="M320 166 L331 166 M325.5 160.5 L325.5 171.5" fill="none" stroke="#aeb5c0" stroke-width="2" />
<text x="-1" y="91" font-size="14.6" fill="#e8ebf0" >ine</text>
<path d="M4 41 A14 14 0 0 1 4 69" fill="none" stroke="#d0d4da" stroke-width="1.4" />
<rect x="1" y="38" width="5" height="5" fill="#6cb6f0" />
<rect x="1" y="66" width="5" height="5" fill="#6cb6f0" />
<circle cx="55" cy="52" r="19.5" fill="none" stroke="#d0d4da" stroke-width="1.4" />
<line x1="55" y1="52" x2="67" y2="40" stroke="#6cb6f0" stroke-width="1.5" />
<rect x="52" y="50" width="5" height="5" fill="#6cb6f0" />
<path d="M69 38 L62 40 L67 45 Z" fill="#6cb6f0" />
<text x="55" y="92" font-size="14.6" fill="#e8ebf0" text-anchor="middle" >Circle</text>
<path d="M51.5 101.25 L58.5 101.25 L55 105.25 Z" fill="#e8ebf0"/>
<path d="M95 69 Q100 40 129 35" fill="none" stroke="#d0d4da" stroke-width="1.4" />
<rect x="93" y="67" width="4" height="4" fill="#6cb6f0" />
<rect x="104" y="43" width="4" height="4" fill="#6cb6f0" />
<rect x="127" y="33" width="4" height="4" fill="#6cb6f0" />
<text x="111" y="92" font-size="14.6" fill="#e8ebf0" text-anchor="middle" >Arc</text>
<path d="M107.5 101.25 L114.5 101.25 L111 105.25 Z" fill="#e8ebf0"/>
<rect x="142" y="37" width="17" height="13" fill="none" stroke="#d0d4da" stroke-width="1.4" />
<rect x="140" y="35" width="3.5" height="3.5" fill="#6cb6f0" />
<rect x="157" y="48" width="3.5" height="3.5" fill="#6cb6f0" />
<path d="M169.8 42.4 L176.2 42.4 L173 46.1 Z" fill="#e8ebf0"/>
<ellipse cx="150" cy="75" rx="9.5" ry="6.5" fill="none" stroke="#d0d4da" stroke-width="1.4"/>
<rect x="148.5" y="73.5" width="3" height="3" fill="#6cb6f0" />
<rect x="158" y="73.5" width="3" height="3" fill="#6cb6f0" />
<path d="M169.8 73.4 L176.2 73.4 L173 77.1 Z" fill="#e8ebf0"/>
<rect x="143" y="98" width="15" height="15" fill="none" stroke="#d0d4da" stroke-width="1.3" />
<path d="M141 96 L141 115 M160 96 L160 115 M141 98 L160 98 M141 113 L160 113" fill="none" stroke="#d0d4da" stroke-width="1" />
<path d="M144 106 L151 99 M144 111 L156 99 M148 112 L157 103 M153 112 L157 108" fill="none" stroke="#6cb6f0" stroke-width="1.3" />
<path d="M169.8 103.4 L176.2 103.4 L173 107.1 Z" fill="#e8ebf0"/>
<path d="M207 35 L207 53 M198 44 L216 44" fill="none" stroke="#f0f2f5" stroke-width="1.8" />
<path d="M207 34 L203 39 L211 39 Z" fill="#f0f2f5" />
<path d="M207 54 L203 49 L211 49 Z" fill="#f0f2f5" />
<path d="M197 44 L202 40 L202 48 Z" fill="#f0f2f5" />
<path d="M217 44 L212 40 L212 48 Z" fill="#f0f2f5" />
<text x="222" y="50" font-size="14.6" fill="#e8ebf0" >Move</text>
<circle cx="202" cy="71" r="4" fill="none" stroke="#d0d4da" stroke-width="1.3" />
<circle cx="204" cy="80" r="4" fill="none" stroke="#6cb6f0" stroke-width="1.3" />
<circle cx="211" cy="80" r="4" fill="none" stroke="#6cb6f0" stroke-width="1.3" />
<path d="M208 69 L213 69 L213 73 M211 71 L213 73.5 L215 71" fill="none" stroke="#d0d4da" stroke-width="1.2" />
<text x="222" y="80.5" font-size="14.6" fill="#e8ebf0" >Copy</text>
<path d="M198 97 L205 97 L205 114 L198 114 Z" fill="none" stroke="#d0d4da" stroke-width="1.3" />
<path d="M205 97 L211 97 L216 114 L205 114" fill="none" stroke="#6cb6f0" stroke-width="1.3" />
<path d="M203 109 L209 109 M207 107 L209 109 L207 111" fill="none" stroke="#d0d4da" stroke-width="1" />
<text x="223" y="111" font-size="14.6" fill="#e8ebf0" >Stretch</text>
<path d="M302 40 A9 9 0 1 1 294 36.5" fill="none" stroke="#d0d4da" stroke-width="1.5" />
<path d="M291 33 L298 36.5 L292 41 Z" fill="#d0d4da" />
<text x="313" y="50" font-size="14.6" fill="#e8ebf0" >Rotate</text>
<path d="M295 66 L295 83 L287 83 Z" fill="none" stroke="#d0d4da" stroke-width="1.3" />
<path d="M298 66 L298 83 L306 83 Z" fill="none" stroke="#6cb6f0" stroke-width="1.3" />
<text x="311" y="80.5" font-size="14.6" fill="#e8ebf0" >Mirror</text>
<rect x="287" y="97" width="18" height="17" fill="none" stroke="#6cb6f0" stroke-width="1.3" />
<rect x="287" y="106" width="9" height="8" fill="none" stroke="#d0d4da" stroke-width="1.3" />
<text x="311" y="111" font-size="14.6" fill="#e8ebf0" >Scale</text>
<path d="M373 36 L380 36" fill="none" stroke="#6cb6f0" stroke-width="1.4" stroke-dasharray="2 1"/>
<path d="M383.5 36 L392 36" fill="none" stroke="#aab0b9" stroke-width="1.4" />
<path d="M375.5 37 L385 49.5 M382 36.5 L380.5 48" fill="none" stroke="#f0f2f5" stroke-width="1.9" />
<circle cx="380.6" cy="51.5" r="2.4" fill="none" stroke="#f0f2f5" stroke-width="1.4" />
<circle cx="387.3" cy="48.6" r="2.4" fill="none" stroke="#f0f2f5" stroke-width="1.4" />
<text x="398" y="50" font-size="14.6" fill="#e8ebf0" >Trim</text>
<path d="M440.8 42.4 L447.2 42.4 L444 46.1 Z" fill="#e8ebf0"/>
<path d="M373 84 L373 76 Q373 66 383 66 L391 66" fill="none" stroke="#d0d4da" stroke-width="1.4" />
<path d="M373 78 Q373 66 385 66" fill="none" stroke="#6cb6f0" stroke-width="1.4" />
<text x="399" y="80.5" font-size="14.6" fill="#e8ebf0" >Fillet</text>
<path d="M444.8 73.4 L451.2 73.4 L448 77.1 Z" fill="#e8ebf0"/>
<rect x="374" y="97" width="6.5" height="6.5" fill="none" stroke="#c5cad2" stroke-width="1.3" />
<rect x="383.5" y="97" width="6.5" height="6.5" fill="none" stroke="#6cb6f0" stroke-width="1.3" />
<rect x="374" y="106.5" width="6.5" height="6.5" fill="none" stroke="#6cb6f0" stroke-width="1.3" />
<rect x="383.5" y="106.5" width="6.5" height="6.5" fill="none" stroke="#6cb6f0" stroke-width="1.3" />
<text x="398" y="111" font-size="14.6" fill="#e8ebf0" >Array</text>
<path d="M442.8 103.4 L449.2 103.4 L446 107.1 Z" fill="#e8ebf0"/>
<path d="M470 50 L476 52 L486 38 L481 35 Z" fill="#f4b942" />
<path d="M470 50 L473 46 L478 49 L476 52 Z" fill="#f08a8a" />
<line x1="467" y1="53.5" x2="486" y2="53.5" stroke="#6cb6f0" stroke-width="1.3" />
<path d="M467 71 L472 66 L485 66 L480 71 M485 66 L485 77 L480 82" fill="none" stroke="#6cb6f0" stroke-width="1.3" />
<path d="M467 71 L480 71 L480 82 L467 82 Z" fill="none" stroke="#c5cad2" stroke-width="1.3" />
<path d="M485 99 L473 99 A6 6 0 0 0 473 111 L485 111 M485 102.5 L474 102.5 A2.5 2.5 0 0 0 474 107.5 L485 107.5" fill="none" stroke="#6cb6f0" stroke-width="1.3" />
<text x="529.5" y="70" font-size="50" fill="#e9ebef" text-anchor="middle" >A</text>
<text x="529.5" y="92" font-size="14.6" fill="#e8ebf0" text-anchor="middle" >Text</text>
<path d="M526.0 101.25 L533.0 101.25 L529.5 105.25 Z" fill="#e8ebf0"/>
<path d="M575 33 L575 71 M612 33 L612 71 M575 40 L612 40" fill="none" stroke="#d0d4da" stroke-width="1.2" />
<path d="M575 40 L581 37.5 L581 42.5 Z M612 40 L606 37.5 L606 42.5 Z" fill="#d0d4da" />
<path d="M593 52 L594.5 60 L591.5 60 Z M585 57 L590 62 L588 64 Z M601 57 L596 62 L598 64 Z M581 65 L588 65 L588 67.5 Z M605 65 L598 65 L598 67.5 Z" fill="#f4b942" />
<text x="593.5" y="92" font-size="14.6" fill="#e8ebf0" text-anchor="middle" >Dimension</text>
<path d="M638 37 L638 52 M656 37 L656 52" fill="none" stroke="#d0d4da" stroke-width="1.3" />
<line x1="638" y1="44" x2="656" y2="44" stroke="#6cb6f0" stroke-width="1.3" />
<path d="M638 44 L642 42 L642 46 Z M656 44 L652 42 L652 46 Z" fill="#6cb6f0" />
<path d="M666.8 42.4 L673.2 42.4 L670 46.1 Z" fill="#e8ebf0"/>
<path d="M640 80 L646 72 L652 72" fill="none" stroke="#d0d4da" stroke-width="1.2" />
<circle cx="656" cy="71" r="3.5" fill="none" stroke="#d0d4da" stroke-width="1.2" />
<path d="M638 82 L643 80 L640 77 Z" fill="#d0d4da" />
<path d="M666.8 73.4 L673.2 73.4 L670 77.1 Z" fill="#e8ebf0"/>
<rect x="639" y="97" width="17" height="15" fill="none" stroke="#d0d4da" stroke-width="1.3" />
<path d="M639 101 L656 101 M639 105 L656 105 M639 109 L656 109 M645 101 L645 112 M650 101 L650 112" fill="none" stroke="#d0d4da" stroke-width="1" />
<text x="663" y="111" font-size="14.6" fill="#e8ebf0" >Table</text>
<path d="M727 58 L739 49 L760 49 L748 58 Z" fill="#aeb3ba" />
<path d="M727 50 L739 41 L760 41 L748 50 Z" fill="#c5c9cf" />
<path d="M727 41 L739 32 L760 32 L748 41 Z" fill="#e3e5e8" />
<rect x="750" y="50" width="16" height="21" fill="#e8eaee" stroke="#8a8f98" stroke-width="0.8" rx="1" />
<rect x="753" y="53" width="10" height="7" fill="#6cb6f0" />
<path d="M753 64 L763 64 M753 67 L763 67" fill="none" stroke="#555" stroke-width="1" />
<text x="746" y="92" font-size="14.6" fill="#e8ebf0" text-anchor="middle" >Layer</text>
<text x="746" y="111.5" font-size="14.6" fill="#e8ebf0" text-anchor="middle" >Properties</text>
<rect x="784.5" y="32.5" width="254" height="25" fill="#4b5669" stroke="#333b47" stroke-width="1" rx="2" />
<circle cx="797" cy="42" r="5" fill="#f4b942" />
<rect x="795" y="47" width="4" height="4" fill="#e8eaee" rx="1" />
<circle cx="821" cy="44" r="4.5" fill="#f4b942" />
<line x1="827.0" y1="44.0" x2="829.5" y2="44.0" stroke="#f4b942" stroke-width="1.4" />
<line x1="825.2426406871193" y1="48.242640687119284" x2="827.0104076400856" y2="50.01040764008565" stroke="#f4b942" stroke-width="1.4" />
<line x1="821.0" y1="50.0" x2="821.0" y2="52.5" stroke="#f4b942" stroke-width="1.4" />
<line x1="816.7573593128807" y1="48.242640687119284" x2="814.9895923599144" y2="50.01040764008565" stroke="#f4b942" stroke-width="1.4" />
<line x1="815.0" y1="44.0" x2="812.5" y2="44.0" stroke="#f4b942" stroke-width="1.4" />
<line x1="816.7573593128807" y1="39.757359312880716" x2="814.9895923599144" y2="37.98959235991435" stroke="#f4b942" stroke-width="1.4" />
<line x1="821.0" y1="38.0" x2="821.0" y2="35.5" stroke="#f4b942" stroke-width="1.4" />
<line x1="825.2426406871193" y1="39.757359312880716" x2="827.0104076400856" y2="37.98959235991435" stroke="#f4b942" stroke-width="1.4" />
<rect x="837" y="43" width="11" height="9" fill="#f4b942" />
<path d="M842 43 L842 40 A3.5 3.5 0 0 1 849 40 L849 42" fill="none" stroke="#f4b942" stroke-width="1.6" />
<rect x="841.5" y="46" width="2" height="3" fill="#7a5b14" />
<rect x="862.5" y="36.5" width="16" height="16" fill="#f5103c" stroke="#1b2028" stroke-width="1" />
<text x="886" y="50" font-size="15" fill="#e8ebf0" >القياس</text>
<path d="M1027 43.0 L1035 43.0 L1031 47.5 Z" fill="#e8ebf0"/>
<path d="M787 77.0 L793 72.0 L804 72.0 L798 77.0 Z" fill="#e3e5e8" />
<circle cx="803" cy="78" r="3.2" fill="#4dd2d6" />
<rect x="801.5" y="80.5" width="3" height="2.5" fill="#e8eaee" />
<path d="M816 78.0 L822 73.0 L833 73.0 L827 78.0 Z" fill="#e3e5e8" />
<path d="M816 74.5 L822 69.5 L833 69.5 L827 74.5 Z" fill="#8ec5f2" />
<path d="M816 71.0 L822 66.0 L833 66.0 L827 71.0 Z" fill="#e3e5e8" />
<path d="M836 76 L830 84 M830 84 L830 80 M830 84 L834 83" fill="none" stroke="#d0d4da" stroke-width="1.2" />
<path d="M846 77.0 L852 72.0 L863 72.0 L857 77.0 Z" fill="#e3e5e8" />
<text x="857" y="84" font-size="9" fill="#4dd2d6" >✱</text>
<path d="M875 77.0 L881 72.0 L892 72.0 L886 77.0 Z" fill="#e3e5e8" />
<rect x="884" y="77" width="8" height="7" fill="#4dd2d6" />
<path d="M886 77 L886 75 A2.2 2.2 0 0 1 890.5 75 L890.5 77" fill="none" stroke="#4dd2d6" stroke-width="1.3" />
<path d="M906 82.0 L912 77.0 L923 77.0 L917 82.0 Z" fill="#8ec5f2" />
<path d="M906 78.5 L912 73.5 L923 73.5 L917 78.5 Z" fill="#8ec5f2" />
<path d="M906 75.0 L912 70.0 L923 70.0 L917 75.0 Z" fill="#8ec5f2" />
<circle cx="916" cy="68" r="3.5" fill="#c5c9cf" />
<path d="M787 107.0 L793 102.0 L804 102.0 L798 107.0 Z" fill="#e3e5e8" />
<path d="M787 103.5 L793 98.5 L804 98.5 L798 103.5 Z" fill="#8ec5f2" />
<path d="M787 100.0 L793 95.0 L804 95.0 L798 100.0 Z" fill="#e3e5e8" />
<circle cx="803" cy="108" r="3.2" fill="#f4b942" />
<rect x="801.5" y="110.5" width="3" height="2.5" fill="#e8eaee" />
<path d="M816 107.0 L822 102.0 L833 102.0 L827 107.0 Z" fill="#e3e5e8" />
<path d="M816 103.5 L822 98.5 L833 98.5 L827 103.5 Z" fill="#8ec5f2" />
<path d="M816 100.0 L822 95.0 L833 95.0 L827 100.0 Z" fill="#e3e5e8" />
<path d="M829 114 L836 107 M836 107 L832 107.5 M836 107 L835.5 111" fill="none" stroke="#d0d4da" stroke-width="1.2" />
<path d="M846 107.0 L852 102.0 L863 102.0 L857 107.0 Z" fill="#e3e5e8" />
<path d="M846 103.5 L852 98.5 L863 98.5 L857 103.5 Z" fill="#8ec5f2" />
<path d="M846 100.0 L852 95.0 L863 95.0 L857 100.0 Z" fill="#e3e5e8" />
<circle cx="860" cy="109" r="3" fill="#f4b942" />
<line x1="864.2" y1="109.0" x2="866.0" y2="109.0" stroke="#f4b942" stroke-width="1.1" />
<line x1="862.9698484809835" y1="111.9698484809835" x2="864.2426406871193" y2="113.24264068711929" stroke="#f4b942" stroke-width="1.1" />
<line x1="860.0" y1="113.2" x2="860.0" y2="115.0" stroke="#f4b942" stroke-width="1.1" />
<line x1="857.0301515190165" y1="111.9698484809835" x2="855.7573593128807" y2="113.24264068711929" stroke="#f4b942" stroke-width="1.1" />
<line x1="855.8" y1="109.0" x2="854.0" y2="109.0" stroke="#f4b942" stroke-width="1.1" />
<line x1="857.0301515190165" y1="106.0301515190165" x2="855.7573593128807" y2="104.75735931288071" stroke="#f4b942" stroke-width="1.1" />
<line x1="860.0" y1="104.8" x2="860.0" y2="103.0" stroke="#f4b942" stroke-width="1.1" />
<line x1="862.9698484809835" y1="106.0301515190165" x2="864.2426406871193" y2="104.75735931288071" stroke="#f4b942" stroke-width="1.1" />
<path d="M875 107.0 L881 102.0 L892 102.0 L886 107.0 Z" fill="#e3e5e8" />
<rect x="879" y="108" width="8" height="6" fill="#f4b942" />
<path d="M883 108 L883 106 A2.2 2.2 0 0 1 887.5 106" fill="none" stroke="#f4b942" stroke-width="1.3" />
<path d="M906 107.0 L912 102.0 L923 102.0 L917 107.0 Z" fill="#e3e5e8" />
<path d="M906 103.5 L912 98.5 L923 98.5 L917 103.5 Z" fill="#8ec5f2" />
<path d="M906 100.0 L912 95.0 L923 95.0 L917 100.0 Z" fill="#e3e5e8" />
<path d="M915 106 L920 103 L925 109 L921 112 Z" fill="#f4b942" />
<path d="M1068 31 L1083 31 L1089 37 L1089 62 L1068 62 Z" fill="#8ec5f2" />
<rect x="1051" y="48" width="25" height="22" fill="#636b78" stroke="#cfd3d9" stroke-width="1.2" />
<circle cx="1076" cy="62" r="8" fill="#7b838f" stroke="#cfd3d9" stroke-width="1.2" />
<rect x="1049" y="69" width="3" height="3" fill="#e8eaee" />
<text x="1069" y="91" font-size="14.6" fill="#e8ebf0" text-anchor="middle" >Insert</text>
<path d="M1065.8 99.4 L1072.2 99.4 L1069 103.1 Z" fill="#e8ebf0"/>
<rect x="1099" y="41" width="10" height="8" fill="#636b78" stroke="#d0d4da" stroke-width="1" />
<circle cx="1109" cy="50" r="3.5" fill="none" stroke="#d0d4da" stroke-width="1" />
<rect x="1097" y="48" width="2.5" height="2.5" fill="#d0d4da" />
<line x1="1112" y1="38" x2="1117.0" y2="38.0" stroke="#f4b942" stroke-width="1.4" />
<line x1="1112" y1="38" x2="1115.5355339059327" y2="41.53553390593274" stroke="#f4b942" stroke-width="1.4" />
<line x1="1112" y1="38" x2="1112.0" y2="43.0" stroke="#f4b942" stroke-width="1.4" />
<line x1="1112" y1="38" x2="1108.4644660940673" y2="41.53553390593274" stroke="#f4b942" stroke-width="1.4" />
<line x1="1112" y1="38" x2="1107.0" y2="38.0" stroke="#f4b942" stroke-width="1.4" />
<line x1="1112" y1="38" x2="1108.4644660940673" y2="34.46446609406726" stroke="#f4b942" stroke-width="1.4" />
<line x1="1112" y1="38" x2="1112.0" y2="33.0" stroke="#f4b942" stroke-width="1.4" />
<line x1="1112" y1="38" x2="1115.5355339059327" y2="34.46446609406726" stroke="#f4b942" stroke-width="1.4" />
<rect x="1099" y="72" width="10" height="8" fill="#636b78" stroke="#d0d4da" stroke-width="1" />
<circle cx="1109" cy="81" r="3.5" fill="none" stroke="#d0d4da" stroke-width="1" />
<rect x="1097" y="79" width="2.5" height="2.5" fill="#d0d4da" />
<path d="M1108 73 L1114 66 L1117 69 L1111 76 Z" fill="#f4b942" />
<path d="M1108 73 L1107.5 77 L1111 76 Z" fill="#f08a8a" />
<path d="M1098 100 L1106 96 L1115 104 L1108 115 L1098 107 Z" fill="#c8ccd3" />
<circle cx="1102" cy="103" r="1.5" fill="#3b4453" />
<path d="M1107 106 L1114 98 L1117 101 L1110 109 Z" fill="#f4b942" />
<path d="M1107 106 L1106.5 110 L1110 109 Z" fill="#f08a8a" />
<path d="M1125.8 103.4 L1132.2 103.4 L1129 107.1 Z" fill="#e8ebf0"/>
<rect x="1161" y="34" width="25" height="33" fill="#e3e5e8" stroke="#9aa0a9" stroke-width="1" rx="2" />
<rect x="1165" y="38" width="17" height="11" fill="#8ec5f2" />
<path d="M1165 54 L1182 54 M1165 59 L1182 59" fill="none" stroke="#6a707a" stroke-width="1.2" />
<path d="M1183 62 L1190 55 L1196 61 L1189 68 Z" fill="#f4b942" />
<path d="M1190 55 L1194 51 L1200 57 L1196 61 Z" fill="#f2f3f5" />
<text x="1179" y="92" font-size="14.6" fill="#e8ebf0" text-anchor="middle" >Match</text>
<text x="1179.5" y="112" font-size="14.6" fill="#e8ebf0" text-anchor="middle" >Properties</text>
<path d="M1229 45 L1229.0 35.0 A10 10 0 0 1 1237.7 40.0 Z" fill="#f2c230" />
<path d="M1229 45 L1237.7 40.0 A10 10 0 0 1 1237.7 50.0 Z" fill="#f08a3c" />
<path d="M1229 45 L1237.7 50.0 A10 10 0 0 1 1229.0 55.0 Z" fill="#e8504a" />
<path d="M1229 45 L1229.0 55.0 A10 10 0 0 1 1220.3 50.0 Z" fill="#b85ac8" />
<path d="M1229 45 L1220.3 50.0 A10 10 0 0 1 1220.3 40.0 Z" fill="#4a8fe0" />
<path d="M1229 45 L1220.3 40.0 A10 10 0 0 1 1229.0 35.0 Z" fill="#3cc0a0" />
<rect x="1243.5" y="33" width="167" height="25" fill="#4b5669" stroke="#333b47" stroke-width="1" rx="2" />
<path d="M1398 43.5 L1406 43.5 L1402 48.0 Z" fill="#e8ebf0"/>
<rect x="1243.5" y="63" width="167" height="25" fill="#4b5669" stroke="#333b47" stroke-width="1" rx="2" />
<path d="M1398 73.5 L1406 73.5 L1402 78.0 Z" fill="#e8ebf0"/>
<rect x="1243.5" y="92.5" width="167" height="25" fill="#4b5669" stroke="#333b47" stroke-width="1" rx="2" />
<path d="M1398 103.0 L1406 103.0 L1402 107.5 Z" fill="#e8ebf0"/>
<rect x="1257" y="36" width="19.5" height="19" fill="#ffffff" stroke="#c9ccd2" stroke-width="1" />
<text x="1288" y="51" font-size="14.6" fill="#e8ebf0" >ByBlock</text>
<text x="1328" y="80.5" font-size="14.6" fill="#e8ebf0" >ByLayer</text>
<text x="1328" y="110" font-size="14.6" fill="#e8ebf0" >ByLayer</text>
<rect x="1247" y="72.5" width="78" height="4" fill="#f2f3f5" />
<line x1="1247" y1="104.5" x2="1326" y2="104.5" stroke="#f2f3f5" stroke-width="1.2" />
<rect x="1219" y="66.0" width="21" height="1.5" fill="#dfe2e7" />
<rect x="1219" y="71.2" width="21" height="2.5" fill="#dfe2e7" />
<rect x="1219" y="76.4" width="21" height="3.5" fill="#dfe2e7" />
<rect x="1219" y="81.6" width="21" height="4.5" fill="#dfe2e7" />
<line x1="1219" y1="97.5" x2="1240" y2="97.5" stroke="#aab0b9" stroke-width="1" stroke-dasharray="1 1" />
<line x1="1219" y1="101.5" x2="1240" y2="101.5" stroke="#aab0b9" stroke-width="1" stroke-dasharray="3 1" />
<line x1="1219" y1="105.5" x2="1240" y2="105.5" stroke="#aab0b9" stroke-width="1" stroke-dasharray="1 1" />
<line x1="1219" y1="109.5" x2="1240" y2="109.5" stroke="#aab0b9" stroke-width="1" stroke-dasharray="3 1" />
<path d="M1426 40 L1421 40 L1421 70 L1426 70 M1447 52 L1452 52 L1452 70 L1447 70" fill="none" stroke="#d0d4da" stroke-width="1.3" />
<rect x="1428" y="42" width="11" height="9" fill="#5d8fc4" stroke="#8ec5f2" stroke-width="0.8" />
<circle cx="1434" cy="62" r="6" fill="#7b838f" stroke="#aab0b9" stroke-width="1" />
<path d="M1448 41 L1457.6 44.0 L1451.1 43.6 Z" fill="#f4b942" />
<path d="M1448 41 L1452.7 49.8 L1448.3 45.0 Z" fill="#f4b942" />
<path d="M1448 41 L1445.0 50.6 L1445.4 44.1 Z" fill="#f4b942" />
<path d="M1448 41 L1439.2 45.7 L1444.0 41.3 Z" fill="#f4b942" />
<path d="M1448 41 L1438.4 38.0 L1444.9 38.4 Z" fill="#f4b942" />
<path d="M1448 41 L1443.3 32.2 L1447.7 37.0 Z" fill="#f4b942" />
<path d="M1448 41 L1451.0 31.4 L1450.6 37.9 Z" fill="#f4b942" />
<path d="M1448 41 L1456.8 36.3 L1452.0 40.7 Z" fill="#f4b942" />
<circle cx="1448" cy="41" r="4" fill="#f4b942" />
<text x="1438.5" y="91" font-size="14.6" fill="#e8ebf0" text-anchor="middle" >Group</text>
<path d="M1470 35 L1468 35 L1468 53 L1470 53 M1478 35 L1480 35 L1480 53 L1478 53" fill="none" stroke="#d0d4da" stroke-width="1.1" />
<rect x="1470.5" y="37.5" width="7" height="6" fill="#5d8fc4" stroke="#8ec5f2" stroke-width="0.6" />
<circle cx="1474" cy="48" r="3.2" fill="#7b838f" stroke="#aab0b9" stroke-width="0.8" />
<path d="M1481 41 L1487 48 M1487 41 L1481 48" fill="none" stroke="#f0355a" stroke-width="1.8" />
<path d="M1470 66 L1468 66 L1468 84 L1470 84 M1478 66 L1480 66 L1480 84 L1478 84" fill="none" stroke="#d0d4da" stroke-width="1.1" />
<rect x="1470.5" y="68.5" width="7" height="6" fill="#5d8fc4" stroke="#8ec5f2" stroke-width="0.6" />
<circle cx="1474" cy="79" r="3.2" fill="#7b838f" stroke="#aab0b9" stroke-width="0.8" />
<path d="M1480 80 L1486 73 L1489 76 L1483 83 Z" fill="#f4b942" />
<path d="M1480 80 L1479.5 84 L1483 83 Z" fill="#f08a8a" />
<rect x="1464.5" y="91.5" width="29" height="26.5" fill="#44607f" stroke="#6cb6f0" stroke-width="1.2" />
<path d="M1471 95 L1469 95 L1469 113 L1471 113 M1479 95 L1481 95 L1481 113 L1479 113" fill="none" stroke="#d0d4da" stroke-width="1.1" />
<rect x="1471.5" y="97.5" width="7" height="6" fill="#5d8fc4" stroke="#8ec5f2" stroke-width="0.6" />
<circle cx="1475" cy="108" r="3.2" fill="#7b838f" stroke="#aab0b9" stroke-width="0.8" />
<path d="M1481 103 L1481 114 L1484 111.5 L1486 116 L1488 115 L1486 110.5 L1489.5 110.5 Z" fill="#f2f3f5" />
<rect x="1523" y="46" width="35" height="11" fill="#f4b942" rx="1" />
<line x1="1526.9" y1="46" x2="1526.9" y2="50" stroke="#8a6512" stroke-width="1" />
<line x1="1530.8" y1="46" x2="1530.8" y2="52" stroke="#8a6512" stroke-width="1" />
<line x1="1534.7" y1="46" x2="1534.7" y2="50" stroke="#8a6512" stroke-width="1" />
<line x1="1538.6" y1="46" x2="1538.6" y2="52" stroke="#8a6512" stroke-width="1" />
<line x1="1542.5" y1="46" x2="1542.5" y2="50" stroke="#8a6512" stroke-width="1" />
<line x1="1546.4" y1="46" x2="1546.4" y2="52" stroke="#8a6512" stroke-width="1" />
<line x1="1550.3" y1="46" x2="1550.3" y2="50" stroke="#8a6512" stroke-width="1" />
<line x1="1554.2" y1="46" x2="1554.2" y2="52" stroke="#8a6512" stroke-width="1" />
<text x="1540.5" y="92" font-size="14.6" fill="#e8ebf0" text-anchor="middle" >Measure</text>
<path d="M1537.3 100.4 L1543.7 100.4 L1540.5 104.1 Z" fill="#e8ebf0"/>
<path d="M1588 40 L1588 52 L1591 49.5 L1593 54 L1595 53 L1593 48.5 L1596.5 48.5 Z" fill="#f2f3f5" />
<rect x="1595" y="41" width="10" height="11" fill="#e3e5e8" />
<path d="M1597 44 L1603 44 M1597 47 L1603 47 M1597 50 L1603 50" fill="none" stroke="#4a7fc0" stroke-width="1" />
<path d="M1594 35 L1597 39 L1600 36 Z" fill="#f4b942" />
<rect x="1588" y="67" width="15" height="13" fill="#2f8f5a" stroke="#49c481" stroke-width="1" stroke-dasharray="2 1.5"/>
<rect x="1591" y="70" width="8" height="7" fill="#49c481" />
<path d="M1598 74 L1598 85 L1601 82.5 L1603 87 L1605 86 L1603 81.5 L1606.5 81.5 Z" fill="#f2f3f5" />
<rect x="1590" y="96" width="13" height="18" fill="#c8ccd3" rx="1" />
<rect x="1592" y="98" width="9" height="4" fill="#5a626f" />
<rect x="1592.0" y="104.0" width="2.2" height="2.2" fill="#5a626f" />
<rect x="1592.0" y="107.2" width="2.2" height="2.2" fill="#5a626f" />
<rect x="1592.0" y="110.4" width="2.2" height="2.2" fill="#5a626f" />
<rect x="1595.3" y="104.0" width="2.2" height="2.2" fill="#5a626f" />
<rect x="1595.3" y="107.2" width="2.2" height="2.2" fill="#5a626f" />
<rect x="1595.3" y="110.4" width="2.2" height="2.2" fill="#5a626f" />
<rect x="1598.6" y="104.0" width="2.2" height="2.2" fill="#5a626f" />
<rect x="1598.6" y="107.2" width="2.2" height="2.2" fill="#5a626f" />
<rect x="1598.6" y="110.4" width="2.2" height="2.2" fill="#5a626f" />
<rect x="1633" y="38" width="22" height="30" fill="#d8a26a" rx="2" />
<rect x="1639" y="35" width="10" height="5" fill="#c8ccd3" rx="1" />
<path d="M1644 46 L1658 46 L1664 52 L1664 72 L1644 72 Z" fill="#e8eaee" />
<path d="M1658 46 L1658 52 L1664 52 Z" fill="#b8bcc4" />
<text x="1649" y="93" font-size="14.6" fill="#e8ebf0" text-anchor="middle" >Paste</text>
<path d="M1645.8 101.4 L1652.2 101.4 L1649 105.1 Z" fill="#e8ebf0"/>
<rect x="1684" y="36" width="14" height="13" fill="#e3e5e8" />
<path d="M1686 40 L1696 40 M1686 43 L1696 43 M1686 46 L1693 46" fill="none" stroke="#6a707a" stroke-width="1" />
<path d="M1693 44 L1700 52 M1700 44 L1693 52" fill="none" stroke="#9aa0a9" stroke-width="1.3" />
<path d="M1686 68 L1693 68 L1696 71 L1696 82 L1686 82 Z" fill="#c8ccd3" />
<path d="M1691 73 L1698 73 L1701 76 L1701 87 L1691 87 Z" fill="#e8eaee" stroke="#9aa0a9" stroke-width="0.6" />
<text x="-2" y="205" font-size="14.2" fill="#222" textLength="74" lengthAdjust="spacingAndGlyphs">Wireframe]</text>
<circle cx="1704" cy="297.5" r="57" fill="none" stroke="#fafafa" stroke-width="12" />
<rect x="1676.5" y="271" width="30" height="54" fill="#ececec" stroke="#a8a8a8" stroke-width="1.2" rx="2" />
<rect x="1687" y="281" width="20" height="34" fill="#dcdcdc" />
<text x="1693" y="304" font-size="15" fill="#777" text-anchor="middle" >T</text>
<text x="1645.5" y="308" font-size="23" fill="#dcdcdc" text-anchor="middle" font-weight="bold" stroke="#a0a0a0" stroke-width="0.8">W</text>
<text x="1700" y="365" font-size="22" fill="#dcdcdc" text-anchor="middle" font-weight="bold" stroke="#a0a0a0" stroke-width="0.8">S</text>
<rect x="1696.7" y="230" width="10" height="18" fill="#ececec" stroke="#c8c8c8" stroke-width="1" />
<rect x="1675.8" y="392" width="30" height="18" fill="#e8eef4" rx="3" />
<text x="1679.5" y="406" font-size="13" fill="#888" >WCS</text>
<circle cx="1077.6" cy="929" r="16.5" fill="none" stroke="#ee7a8a" stroke-width="1.2" />
<path d="M1077.6 929 L1077.6 912.5 A16.5 16.5 0 0 1 1094.1 929 Z" fill="#ee7a8a" />
<line x1="1077.6" y1="904" x2="1077.6" y2="936" stroke="#ee7a8a" stroke-width="1" />
<line x1="1053" y1="930" x2="1256.5" y2="930" stroke="#ee7a8a" stroke-width="1.2" stroke-dasharray="1.5 1" />
<rect x="1062" y="931" width="16" height="4" fill="#ee7a8a" />
<text x="1098.8" y="925.3" font-size="14.2" fill="#ee7a8a" text-anchor="None" font-weight="bold" textLength="152" lengthAdjust="spacingAndGlyphs">GROUND FLOOR PLAN</text>
<rect x="1229" y="932.5" width="14" height="2" fill="#ee7a8a" />
<rect x="1246" y="932.5" width="4" height="2" fill="#ee7a8a" />
<rect x="361" y="902.5" width="1053" height="32.5" fill="#ffffff" fill-opacity="0.72"/>
<path d="M292 935 L292 906 Q292 902.5 296 902.5 L361 902.5 L361 935 Z" fill="#636b79" />
<path d="M294 902.5 L1411 902.5 Q1414 902.5 1414 905.5 L1414 935" fill="none" stroke="#4a4f58" stroke-width="1.2" />
<rect x="297" y="908.0" width="1.8" height="1.8" fill="#e8eaee" />
<rect x="300.6" y="908.0" width="1.8" height="1.8" fill="#e8eaee" />
<rect x="297" y="911.6" width="1.8" height="1.8" fill="#e8eaee" />
<rect x="300.6" y="911.6" width="1.8" height="1.8" fill="#e8eaee" />
<rect x="297" y="915.2" width="1.8" height="1.8" fill="#e8eaee" />
<rect x="300.6" y="915.2" width="1.8" height="1.8" fill="#e8eaee" />
<rect x="297" y="918.8" width="1.8" height="1.8" fill="#e8eaee" />
<rect x="300.6" y="918.8" width="1.8" height="1.8" fill="#e8eaee" />
<rect x="297" y="922.4" width="1.8" height="1.8" fill="#e8eaee" />
<rect x="300.6" y="922.4" width="1.8" height="1.8" fill="#e8eaee" />
<rect x="297" y="926.0" width="1.8" height="1.8" fill="#e8eaee" />
<rect x="300.6" y="926.0" width="1.8" height="1.8" fill="#e8eaee" />
<path d="M311 913 L320.5 922.5 M320.5 913 L311 922.5" fill="none" stroke="#f2f3f5" stroke-width="2.2" />
<path d="M337.5 925 L347 915.5" fill="none" stroke="#f2f3f5" stroke-width="3" stroke-linecap="round"/>
<path d="M353.5 910.5 A5 5 0 1 0 353.8 917 L350 914.2 L351 911.5 Z" fill="#f2f3f5" />
<rect x="366" y="911" width="19" height="15" fill="#f4f4f4" stroke="#9a9a9a" stroke-width="1" />
<rect x="366" y="911" width="19" height="3.5" fill="#9a9a9a" />
<text x="368" y="922.5" font-size="7" fill="#777" text-anchor="None" font-family="Liberation Mono, monospace" font-weight="bold" >&gt;_</text>
<path d="M388.79999999999995 917.9000000000001 L396.0 917.9000000000001 L392.4 922.0 Z" fill="#8a8a8a"/>
<text x="406" y="924" font-size="14.7" fill="#8d9199" text-anchor="None" font-family="Liberation Mono, DejaVu Sans Mono, monospace" font-style="italic" >Type a command</text>
<path d="M1397.5 922.5 L1409.5 922.5 L1403.5 916 Z" fill="#9a9a9a" />
<text x="850" y="948" font-size="64" fill="#8a8a8a" text-anchor="middle" font-family="DejaVu Sans, sans-serif" font-weight="bold" opacity="0.3" textLength="208" lengthAdjust="spacingAndGlyphs">خمسات</text>
<rect x="0" y="935" width="1700" height="35" fill="#222933" />
<path d="M0 937 L66 937 Q72 937 75 944 L81 958 L0 958 Z" fill="#2e3642" />
<path d="M80 958 L86 944 Q89 937 95 937 L150 937 Q156 937 159 944 L165 958 Z" fill="#2e3642" />
<path d="M164 958 L168 944 Q170 939 175 939 L186 939 Q191 939 192 944 L195 958 Z" fill="#2e3642" />
<text x="41" y="953" font-size="14.4" fill="#dfe3ea" text-anchor="middle" >Layout1</text>
<text x="121" y="953" font-size="14.4" fill="#dfe3ea" text-anchor="middle" >Layout2</text>
<path d="M174 947 L185 947 M179.5 941.5 L179.5 952.5" fill="none" stroke="#aeb5c0" stroke-width="2" />
<text x="850" y="948" font-size="64" fill="#9aa0a8" text-anchor="middle" font-family="DejaVu Sans, sans-serif" font-weight="bold" opacity="0.16" textLength="208" lengthAdjust="spacingAndGlyphs" clip-path="url(#cpB)">خمسات</text>
<clipPath id="cpB"><rect x="700" y="935" width="300" height="35"/></clipPath>
<rect x="1093" y="938" width="57.59999999999991" height="29" fill="#3b4453" />
<rect x="1154" y="938" width="79" height="29" fill="#3b4453" />
<rect x="1236" y="938" width="205" height="29" fill="#3b4453" />
<rect x="1444" y="938" width="133" height="29" fill="#3b4453" />
<rect x="1580" y="938" width="48" height="29" fill="#3b4453" />
<rect x="1631" y="938" width="28" height="29" fill="#3b4453" />
<rect x="1662" y="938" width="32" height="29" fill="#3b4453" />
<rect x="1697" y="938" width="3" height="29" fill="#6cb6f0" />
<text x="1098" y="959" font-size="15.5" fill="#f2f3f5" textLength="49" lengthAdjust="spacingAndGlyphs">MODEL</text>
<line x1="1161.0" y1="942" x2="1161.0" y2="963" stroke="#d0d4da" stroke-width="1.5" />
<line x1="1157" y1="946.0" x2="1179" y2="946.0" stroke="#d0d4da" stroke-width="1.5" />
<line x1="1167.5" y1="942" x2="1167.5" y2="963" stroke="#d0d4da" stroke-width="1.5" />
<line x1="1157" y1="952.5" x2="1179" y2="952.5" stroke="#d0d4da" stroke-width="1.5" />
<line x1="1174.0" y1="942" x2="1174.0" y2="963" stroke="#d0d4da" stroke-width="1.5" />
<line x1="1157" y1="959.0" x2="1179" y2="959.0" stroke="#d0d4da" stroke-width="1.5" />
<rect x="1190.5" y="944.5" width="3" height="3" fill="#d0d4da" />
<rect x="1190.5" y="951.0" width="3" height="3" fill="#d0d4da" />
<rect x="1190.5" y="957.5" width="3" height="3" fill="#d0d4da" />
<rect x="1197.0" y="944.5" width="3" height="3" fill="#d0d4da" />
<rect x="1197.0" y="951.0" width="3" height="3" fill="#d0d4da" />
<rect x="1197.0" y="957.5" width="3" height="3" fill="#d0d4da" />
<rect x="1203.5" y="944.5" width="3" height="3" fill="#d0d4da" />
<rect x="1203.5" y="951.0" width="3" height="3" fill="#d0d4da" />
<rect x="1203.5" y="957.5" width="3" height="3" fill="#d0d4da" />
<path d="M1218.5 950.25 L1227.5 950.25 L1223 955.25 Z" fill="#d0d4da"/>
<path d="M1241 942 L1241 964 L1260 964 M1241 958 L1247 958 L1247 964" fill="none" stroke="#d0d4da" stroke-width="1.5" />
<circle cx="1277" cy="953" r="8" fill="none" stroke="#d0d4da" stroke-width="1.5" />
<path d="M1277 953 L1288 953 M1277 953 L1287 942" fill="none" stroke="#d0d4da" stroke-width="1.5" />
<path d="M1300.3 950.25 L1309.3 950.25 L1304.8 955.25 Z" fill="#d0d4da"/>
<line x1="1329" y1="941" x2="1329" y2="965" stroke="#3cc86a" stroke-width="1.5" />
<line x1="1322" y1="943" x2="1337" y2="964" stroke="#e04a4a" stroke-width="1.5" />
<rect x="1327" y="951.5" width="4" height="4" fill="none" stroke="#d0d4da" stroke-width="1" />
<path d="M1349.9 950.25 L1358.9 950.25 L1354.4 955.25 Z" fill="#d0d4da"/>
<rect x="1365.3" y="938" width="28" height="29" fill="#5b8fcc" />
<path d="M1370 961 L1390 961 M1370 961 L1388 943" fill="none" stroke="#f2f3f5" stroke-width="1.6" />
<rect x="1377.5" y="950.5" width="4" height="4" fill="#f2f3f5" />
<rect x="1395" y="938" width="27.5" height="29" fill="#5b8fcc" />
<rect x="1401" y="946" width="15" height="15" fill="none" stroke="#f2f3f5" stroke-width="1.6" />
<rect x="1398.5" y="943.5" width="5" height="5" fill="#5b8fcc" stroke="#f2f3f5" stroke-width="1.2" />
<path d="M1428.5 950.25 L1437.5 950.25 L1433 955.25 Z" fill="#d0d4da"/>
<rect x="1446.8" y="938" width="27.2" height="29" fill="#5b8fcc" />
<path d="M1458 942 L1466.5 964 L1458 957 L1449.5 964 Z" fill="#f2f3f5" />
<circle cx="1468" cy="945" r="3" fill="none" stroke="#f2f3f5" stroke-width="1.3" />
<path d="M1489 942 L1497.5 964 L1489 957 L1480.5 964 Z" fill="#d0d4da" />
<path d="M1496 941 L1493 947 L1497 946 L1495 951" fill="none" stroke="#d0d4da" stroke-width="1.2" />
<path d="M1519.5 942 L1528.0 964 L1519.5 957 L1511.0 964 Z" fill="#d0d4da" />
<text x="1540.5" y="958.5" font-size="15" fill="#f2f3f5" textLength="20" lengthAdjust="spacingAndGlyphs">1:1</text>
<path d="M1562.5 950.25 L1571.5 950.25 L1567 955.25 Z" fill="#d0d4da"/>
<circle cx="1593" cy="952.5" r="6.5" fill="none" stroke="#d0d4da" stroke-width="4" />
<line x1="1601.0" y1="952.5" x2="1604.0" y2="952.5" stroke="#d0d4da" stroke-width="3.4" />
<line x1="1598.6568542494924" y1="958.1568542494924" x2="1600.778174593052" y2="960.278174593052" stroke="#d0d4da" stroke-width="3.4" />
<line x1="1593.0" y1="960.5" x2="1593.0" y2="963.5" stroke="#d0d4da" stroke-width="3.4" />
<line x1="1587.3431457505076" y1="958.1568542494924" x2="1585.221825406948" y2="960.278174593052" stroke="#d0d4da" stroke-width="3.4" />
<line x1="1585.0" y1="952.5" x2="1582.0" y2="952.5" stroke="#d0d4da" stroke-width="3.4" />
<line x1="1587.3431457505076" y1="946.8431457505076" x2="1585.221825406948" y2="944.721825406948" stroke="#d0d4da" stroke-width="3.4" />
<line x1="1593.0" y1="944.5" x2="1593.0" y2="941.5" stroke="#d0d4da" stroke-width="3.4" />
<line x1="1598.6568542494924" y1="946.8431457505076" x2="1600.778174593052" y2="944.721825406948" stroke="#d0d4da" stroke-width="3.4" />
<path d="M1613.9 950.25 L1622.9 950.25 L1618.4 955.25 Z" fill="#d0d4da"/>
<path d="M1633 952.5 L1655 952.5 M1644 941.5 L1644 963.5" fill="none" stroke="#f2f3f5" stroke-width="2.6" />
<rect x="1666" y="941" width="8" height="8" fill="none" stroke="#d0d4da" stroke-width="1.3" />
<circle cx="1682" cy="950" r="4.5" fill="none" stroke="#d0d4da" stroke-width="1.3" />
<path d="M1669 964 L1674 955 L1679 964 Z" fill="none" stroke="#d0d4da" stroke-width="1.3" />
</svg>
</body></html>
